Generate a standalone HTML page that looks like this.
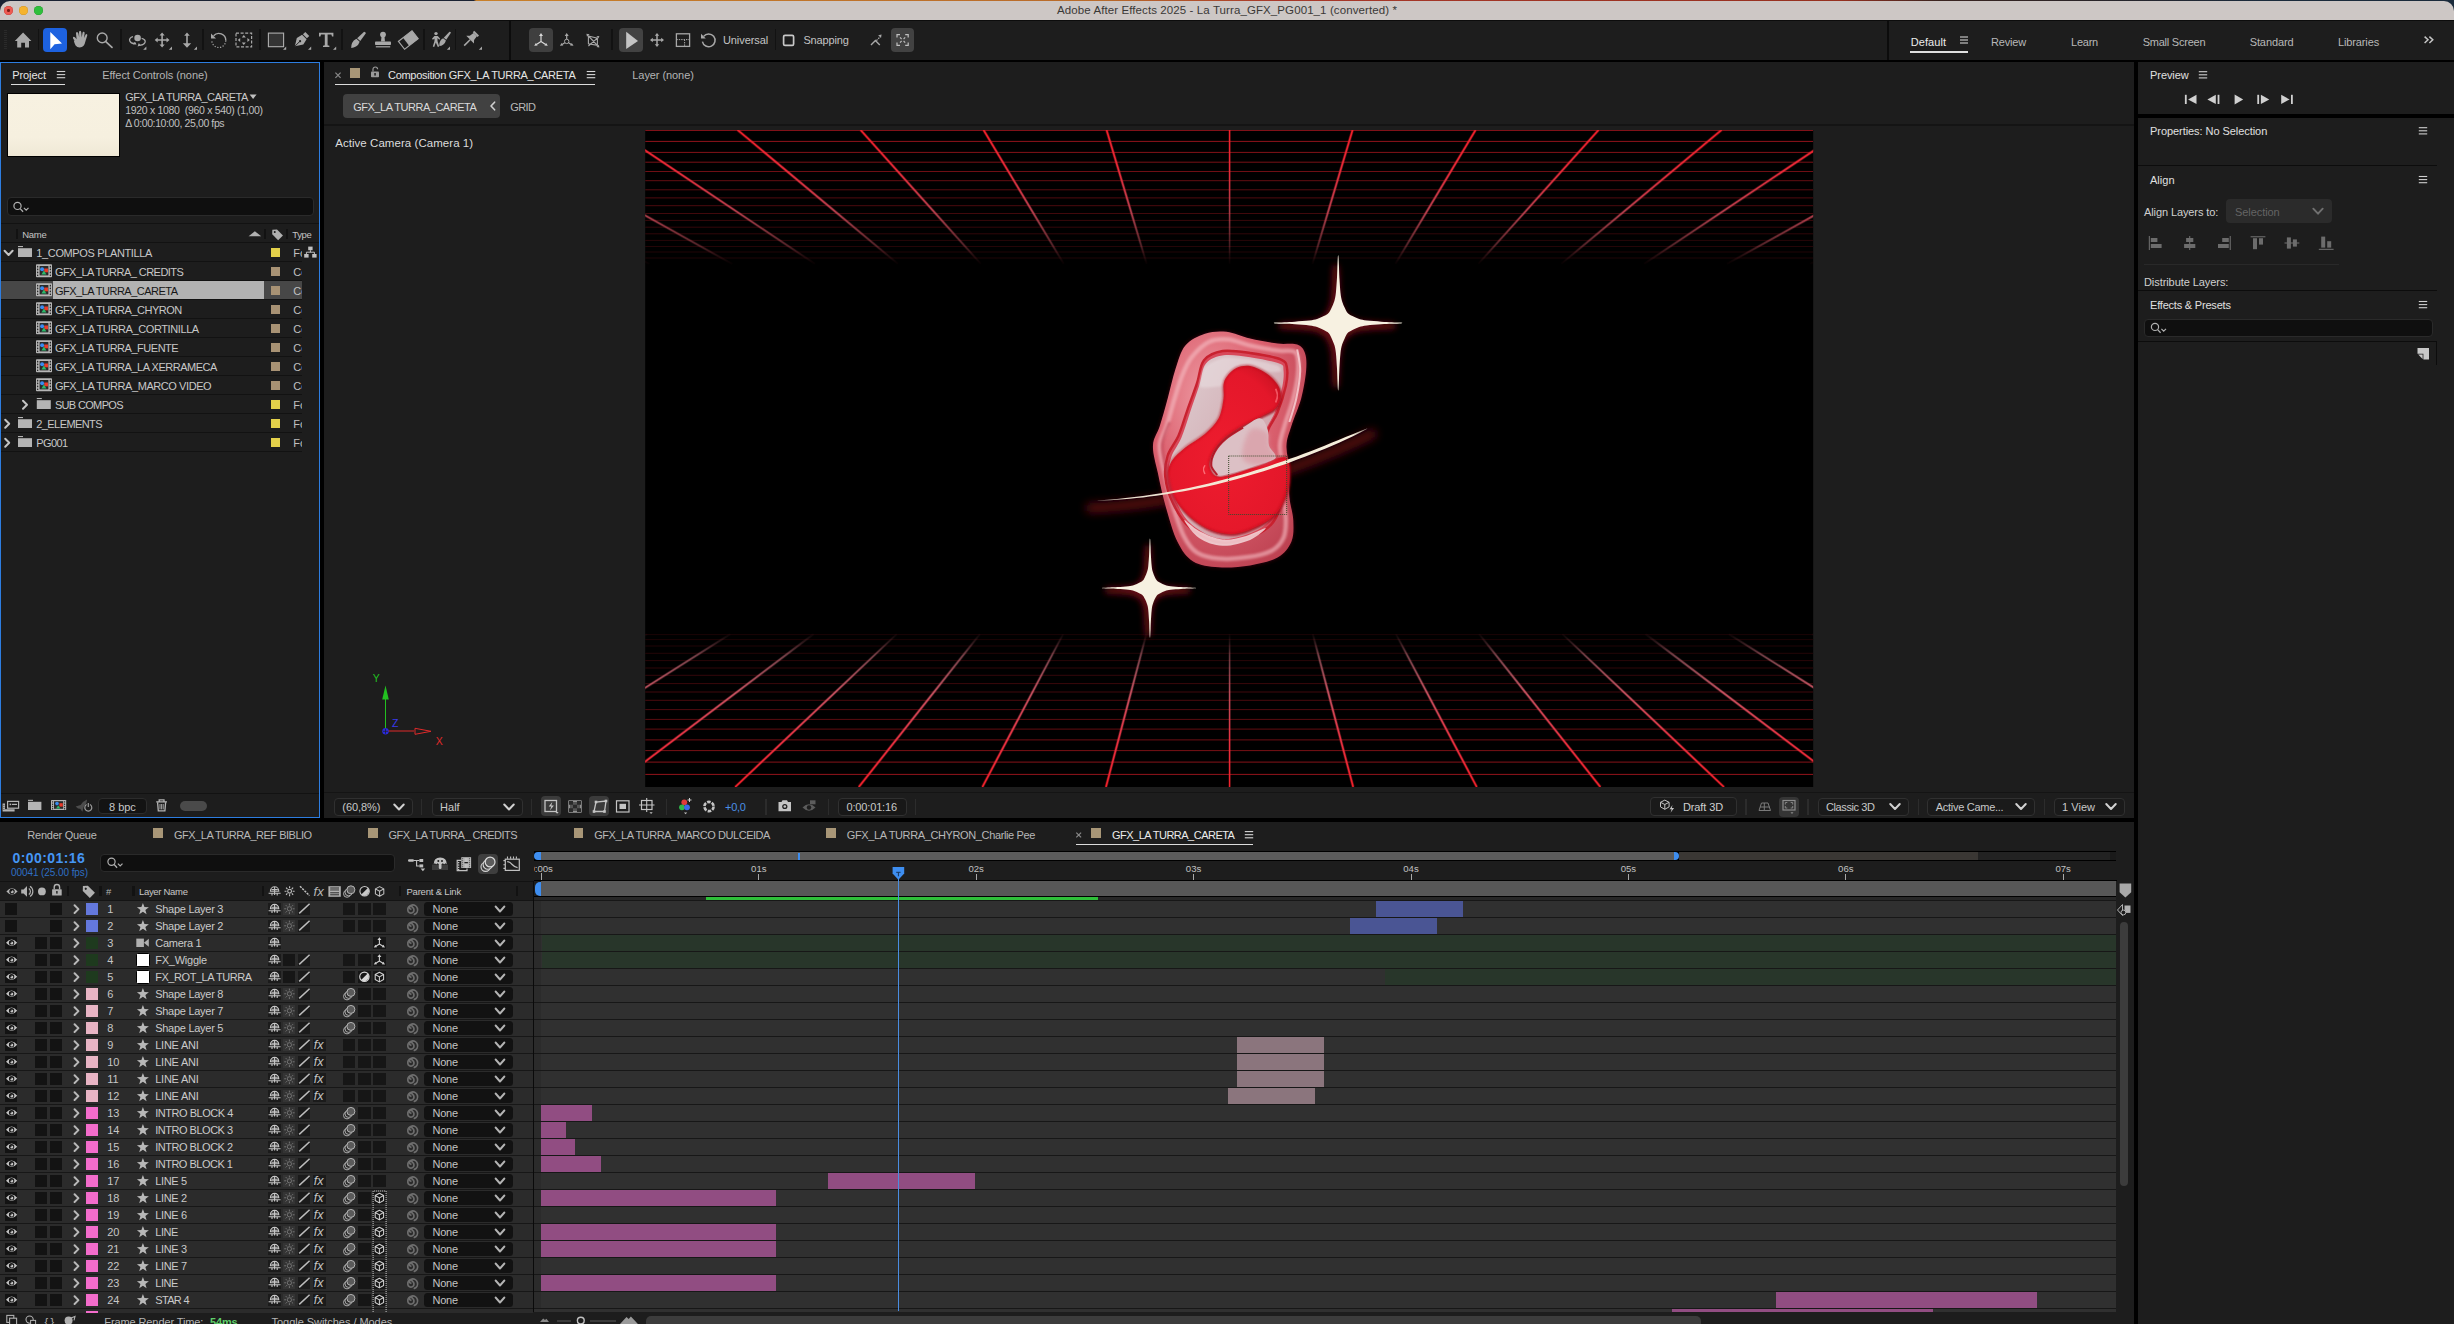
<!DOCTYPE html>
<html lang="en"><head><meta charset="utf-8"><title>Adobe After Effects 2025 - La Turra_GFX_PG001_1 (converted)</title>
<style>
html,body{margin:0;padding:0;background:#000;}
body{width:2454px;height:1324px;position:relative;overflow:hidden;font-family:"Liberation Sans",sans-serif;}
.t{position:absolute;white-space:nowrap;display:block;}
svg{overflow:visible;display:block;}
</style></head>
<body>
<!-- part_frame -->
<div style="position:absolute;left:0px;top:0px;width:2454px;height:12px;background:linear-gradient(90deg,#1a2233 0,#1a2233 19.3%,#c8802a 19.4%,#b86a2a 45%,#a8382a 52%,#96301f 75%,#3a2420 79%,#2a2428 85%,#1b2b3c 92%,#1b2b3c 100%);"></div>
<div style="position:absolute;left:0px;top:1px;width:2454px;height:20px;background:#cdc7c5;border-radius:10px 10px 0 0;"></div>
<div style="position:absolute;left:0px;top:20px;width:2454px;height:1px;background:#0c0c0c;"></div>
<div style="position:absolute;left:3.9000000000000004px;top:6.0px;width:9.2px;height:9.2px;background:#ee5a52;border-radius:50%;box-shadow:inset 0 0 0 0.5px #c8423c;"></div>
<div style="position:absolute;left:18.700000000000003px;top:6.0px;width:9.2px;height:9.2px;background:#f5b32e;border-radius:50%;box-shadow:inset 0 0 0 0.5px #d0962a;"></div>
<div style="position:absolute;left:33.699999999999996px;top:6.0px;width:9.2px;height:9.2px;background:#2fbf3c;border-radius:50%;box-shadow:inset 0 0 0 0.5px #279d30;"></div>
<div style="position:absolute;left:7.3px;top:9.4px;width:2.4px;height:2.4px;background:#7c1d16;border-radius:50%;"></div>
<span class="t" style="left:1057.00px;top:2.82px;font-size:11.5px;line-height:15px;color:#3a3836;letter-spacing:0.096px;">Adobe After Effects 2025 - La Turra_GFX_PG001_1 (converted) *</span>
<div style="position:absolute;left:0px;top:21px;width:2454px;height:39px;background:#1d1d1d;"></div>
<div style="position:absolute;left:0px;top:60px;width:2454px;height:2px;background:#000;"></div>
<div style="position:absolute;left:0px;top:62px;width:320px;height:756px;background:#1d1d1d;box-sizing:border-box;border:1px solid #2d7de0;"></div>
<div style="position:absolute;left:324px;top:62px;width:1810px;height:756px;background:#1d1d1d;"></div>
<div style="position:absolute;left:2138px;top:62px;width:316px;height:52px;background:#1d1d1d;"></div>
<div style="position:absolute;left:2138px;top:118px;width:316px;height:1206px;background:#1d1d1d;"></div>
<div style="position:absolute;left:0px;top:822px;width:2134px;height:502px;background:#1d1d1d;"></div>
<!-- part_toolbar -->
<div style="position:absolute;left:4px;top:30.4px;width:2.6px;height:1px;background:#2a2a2a;"></div>
<div style="position:absolute;left:4px;top:32.4px;width:2.6px;height:1px;background:#2a2a2a;"></div>
<div style="position:absolute;left:4px;top:34.4px;width:2.6px;height:1px;background:#2a2a2a;"></div>
<div style="position:absolute;left:4px;top:36.4px;width:2.6px;height:1px;background:#2a2a2a;"></div>
<div style="position:absolute;left:4px;top:38.4px;width:2.6px;height:1px;background:#2a2a2a;"></div>
<div style="position:absolute;left:4px;top:40.4px;width:2.6px;height:1px;background:#2a2a2a;"></div>
<div style="position:absolute;left:4px;top:42.4px;width:2.6px;height:1px;background:#2a2a2a;"></div>
<div style="position:absolute;left:4px;top:44.4px;width:2.6px;height:1px;background:#2a2a2a;"></div>
<div style="position:absolute;left:4px;top:46.4px;width:2.6px;height:1px;background:#2a2a2a;"></div>
<div style="position:absolute;left:4px;top:48.4px;width:2.6px;height:1px;background:#2a2a2a;"></div>
<div style="position:absolute;left:37.900000000000006px;top:29.4px;width:1.6px;height:20.6px;background:#121212;"></div>
<div style="position:absolute;left:120.0px;top:29.4px;width:1.6px;height:20.6px;background:#121212;"></div>
<div style="position:absolute;left:202.1px;top:29.4px;width:1.6px;height:20.6px;background:#121212;"></div>
<div style="position:absolute;left:259.0px;top:29.4px;width:1.6px;height:20.6px;background:#121212;"></div>
<div style="position:absolute;left:341.09999999999997px;top:29.4px;width:1.6px;height:20.6px;background:#121212;"></div>
<div style="position:absolute;left:423.2px;top:29.4px;width:1.6px;height:20.6px;background:#121212;"></div>
<div style="position:absolute;left:454.8px;top:29.4px;width:1.6px;height:20.6px;background:#121212;"></div>
<div style="position:absolute;left:611.2px;top:29.4px;width:1.6px;height:20.6px;background:#121212;"></div>
<div style="position:absolute;left:774.8000000000001px;top:29.4px;width:1.6px;height:20.6px;background:#121212;"></div>
<div style="position:absolute;left:43px;top:28px;width:24px;height:24px;background:#1d62e0;border-radius:4px;"></div>
<div style="position:absolute;left:508.6px;top:21px;width:2px;height:39px;background:#0c0c0c;"></div>
<div style="position:absolute;left:1887px;top:21px;width:1.6px;height:39px;background:#0c0c0c;"></div>
<div style="position:absolute;left:529px;top:28px;width:24px;height:24px;background:#3f3f3f;border-radius:4px;"></div>
<div style="position:absolute;left:619px;top:28px;width:24px;height:24px;background:#424242;border-radius:4px;"></div>
<span class="t" style="left:723.00px;top:33.19px;font-size:11px;line-height:14px;color:#c4c4c4;letter-spacing:-0.094px;">Universal</span>
<span class="t" style="left:803.40px;top:33.39px;font-size:11px;line-height:14px;color:#c4c4c4;letter-spacing:-0.136px;">Snapping</span>
<div style="position:absolute;left:891px;top:28px;width:23.4px;height:24px;background:#424242;border-radius:4px;"></div>
<span class="t" style="left:1910.80px;top:35.19px;font-size:11px;line-height:14px;color:#ececec;letter-spacing:0.049px;">Default</span>
<div style="position:absolute;left:1910px;top:51px;width:58px;height:1.5px;background:#e0e0e0;"></div>
<span class="t" style="left:1991.00px;top:35.19px;font-size:11px;line-height:14px;color:#b8b8b8;letter-spacing:-0.178px;">Review</span>
<span class="t" style="left:2071.00px;top:35.19px;font-size:11px;line-height:14px;color:#b8b8b8;letter-spacing:-0.227px;">Learn</span>
<span class="t" style="left:2142.70px;top:35.19px;font-size:11px;line-height:14px;color:#b8b8b8;letter-spacing:-0.235px;">Small Screen</span>
<span class="t" style="left:2249.70px;top:35.19px;font-size:11px;line-height:14px;color:#b8b8b8;letter-spacing:-0.106px;">Standard</span>
<span class="t" style="left:2338.00px;top:35.19px;font-size:11px;line-height:14px;color:#b8b8b8;letter-spacing:-0.132px;">Libraries</span>
<svg style="position:absolute;left:0;top:0" width="2454" height="1324"><path d="M14.8,41 l8.3,-8.4 l8.3,8.4 h-2.4 v6.4 h-4 v-4.6 h-3.8 v4.6 h-4 v-6.4z" fill="#a8a8a8"/><path d="M50.3,32 L62,43.4 L54.6,44.2 L50.3,49.2Z" fill="#fff"/><path d="M74.8,40.6 q-2.6,-2.6 -1.6,-3.6 q1,-0.8 3.4,2.2 l-0.6,-5.6 q-0.2,-1.6 1,-1.6 q1,0 1.4,1.6 l0.8,3.8 l-0.2,-5 q0,-1.6 1.1,-1.6 q1.1,0 1.2,1.6 l0.4,5 l0.8,-4.4 q0.3,-1.5 1.3,-1.3 q1,0.2 0.8,1.7 l-0.6,4.6 l1.4,-3 q0.6,-1.2 1.4,-0.8 q0.8,0.4 0.4,1.6 l-1.6,5 q-0.6,3 -2,5 q-1.4,1.6 -4,1.6 q-2.6,0 -4,-2 q-1.4,-2.4 -1.8,-4.8z" fill="#a8a8a8"/><circle cx="102.2" cy="37.9" r="4.9" fill="none" stroke="#a8a8a8" stroke-width="1.4"/><line x1="105.8" y1="41.6" x2="112" y2="47.4" stroke="#a8a8a8" stroke-width="1.7" stroke-linecap="round"/><circle cx="137.6" cy="38" r="3.3" fill="#a8a8a8"/><path d="M133,36.6 a4,2.8 0 1 0 3,6.6 M141.6,38.4 a4.6,3 0 0 1 -3,6.4" fill="none" stroke="#a8a8a8" stroke-width="1.3"/><path d="M136.6,44.6 h-4 l2,-2.6z M137.6,46.4 l1.2,-3.4 l2,2.6z" fill="#a8a8a8"/><path d="M146.4,49.8 v-3.2 l-3.2,3.2z" fill="#a8a8a8"/><path d="M162.1,35V45M157.1,40H167.1" stroke="#a8a8a8" stroke-width="1.6"/><path d="M162.1,32.6l-2.6,3h5.2z M162.1,47.4l-2.6,-3h5.2z M154.7,40l3,-2.6v5.2z M169.5,40l-3,-2.6v5.2z" fill="#a8a8a8"/><path d="M172,49.8 v-3.2 l-3.2,3.2z" fill="#a8a8a8"/><path d="M187,35V44" stroke="#a8a8a8" stroke-width="1.6"/><path d="M187,32.6l-2.8,3.2h5.6z M187,47.8l-4.2,-4.6h8.4z" fill="#a8a8a8"/><path d="M197,49.8 v-3.2 l-3.2,3.2z" fill="#a8a8a8"/><path d="M213.60000000000002,35.8 A7,7 0 0 1 225.8,40.6" fill="none" stroke="#a8a8a8" stroke-width="1.4"/><path d="M225.8,40.6 A7,7 0 1 1 211.8,40.4" fill="none" stroke="#a8a8a8" stroke-width="1.2" stroke-dasharray="1.2 1.6"/><path d="M211.0,33.6 v5 h5z" fill="#a8a8a8"/><rect x="236.0" y="33.2" width="15.6" height="13.6" fill="none" stroke="#a8a8a8" stroke-width="1.2" stroke-dasharray="3 1.6"/><path d="M243.8,35l-2,2.4h4z M243.8,45l-2,-2.4h4z M237.8,40l2.4,-2v4z M249.8,40l-2.4,-2v4z" fill="#a8a8a8"/><rect x="268.4" y="33.1" width="15.2" height="13.6" fill="#343434" stroke="#b0b0b0" stroke-width="1.1"/><path d="M286.2,49.8 v-3.2 l-3.2,3.2z" fill="#a8a8a8"/><g transform="translate(301.2,40) rotate(45)"><path d="M-2.8,-8.6 h5.6 v3.4 h-5.6z" fill="#a8a8a8"/><path d="M-3.2,-4.4 h6.4 l1.4,6 l-4.6,7.4 l-4.6,-7.4z" fill="#a8a8a8"/><path d="M0,9 v-6.5" stroke="#1d1d1d" stroke-width="0.9"/><circle cx="0" cy="1.6" r="1.1" fill="#1d1d1d"/></g><path d="M311.2,49.8 v-3.2 l-3.2,3.2z" fill="#a8a8a8"/><path d="M319,32.8 h14.4 v3.6 h-1.4 l-0.6,-1.8 h-3.8 v10.6 l1.8,0.5 v1.3 h-6.4 v-1.3 l1.8,-0.5 v-10.6 h-3.8 l-0.6,1.8 h-1.4z" fill="#a8a8a8"/><path d="M336.2,49.8 v-3.2 l-3.2,3.2z" fill="#a8a8a8"/><g transform="translate(358.3,40) rotate(42)"><path d="M-1.2,-10 q1.2,-1 2.4,0 l0.9,9.4 h-4.2z" fill="#a8a8a8"/><path d="M-2.2,0.4 h4.4 q1.4,3 0.4,6 q-0.8,2.4 -2.6,4.2 q-1.8,-1.8 -2.6,-4.2 q-1,-3 0.4,-6z" fill="#a8a8a8"/></g><circle cx="383" cy="34.6" r="2.9" fill="#a8a8a8"/><path d="M381.6,36 h2.8 l0.6,5.6 h-4z" fill="#a8a8a8"/><rect x="375" y="41.6" width="16" height="3.4" rx="0.8" fill="#a8a8a8"/><rect x="375.8" y="46.2" width="14.4" height="1.2" fill="#a8a8a8"/><g transform="translate(408.3,40) rotate(-38)"><rect x="-2.8" y="-5" width="11.4" height="10" fill="#a8a8a8"/><rect x="-8.6" y="-5" width="17.2" height="10" fill="none" stroke="#a8a8a8" stroke-width="1.2"/></g><circle cx="436" cy="33.6" r="1.7" fill="#a8a8a8"/><path d="M434.4,36 h3.4 l2.4,2.8 l-0.9,0.9 l-1.8,-1.6 v3 l1.7,5.5 l-1.4,0.5 l-2,-4.6 l-1.6,4.6 l-1.4,-0.5 l1.7,-5.6 v-2.6 l-1.6,1.4 l-0.9,-1 z" fill="#a8a8a8"/><g transform="translate(444.4,39.6) rotate(38)"><path d="M-0.9,-9.4 q0.9,-0.8 1.8,0 l0.7,8.4 h-3.2z" fill="#a8a8a8"/><path d="M-1.8,-0.2 h3.6 q1.2,2.6 0.3,5 q-0.7,2 -2.1,3.4 q-1.4,-1.4 -2.1,-3.4 q-0.9,-2.4 0.3,-5z" fill="#a8a8a8"/></g><path d="M450,49.8 v-3.2 l-3.2,3.2z" fill="#a8a8a8"/><g transform="translate(470.4,39.4) rotate(45)"><rect x="-3.4" y="-8.8" width="6.8" height="2" fill="#a8a8a8"/><path d="M-2.4,-6.8 h4.8 l0.6,4.6 l2.4,2.6 h-10.8 l2.4,-2.6z" fill="#a8a8a8"/><path d="M0,0.4 v8.4" stroke="#a8a8a8" stroke-width="1.5"/></g><path d="M482,49.8 v-3.2 l-3.2,3.2z" fill="#a8a8a8"/><path d="M541,41.4V35.6 M541,41.4L536.4,44.4 M541,41.4L545.6,44.4" stroke="#dadada" stroke-width="1.2" fill="none"/><path d="M541,33l-2,3h4z M534.2,45.8l3.4,-0.3l-1.7,-2.6z M547.8,45.8l-3.4,-0.3l1.7,-2.6z" fill="#dadada"/><path d="M566.7,41.4V35.6 M566.7,41.4L562.1,44.4 M566.7,41.4L571.3000000000001,44.4" stroke="#a8a8a8" stroke-width="1.2" fill="none"/><path d="M566.7,33l-2,3h4z M559.9000000000001,45.8l3.4,-0.3l-1.7,-2.6z M573.5,45.8l-3.4,-0.3l1.7,-2.6z" fill="#a8a8a8"/><circle cx="566.7" cy="41.4" r="2.2" fill="#1d1d1d" stroke="#a8a8a8" stroke-width="1"/><path d="M588.4,36 l9,2.2 v7.2 l-9,-1.6z M588.4,36 l9,9.4 M597.4,38.2 l-9,7.8" fill="none" stroke="#a8a8a8" stroke-width="1.1"/><path d="M586.4,33.8 l3.2,0.4 l-2.6,2.6z M599.4,36l-3,0.2l2,2.4z M599.4,47.6l-3,-0.6l2.4,-2.2z" fill="#a8a8a8"/><path d="M626.2,31.8 L638,41 L626.2,49Z" fill="#c4c4c4"/><path d="M657,35V45M652,40H662" stroke="#a8a8a8" stroke-width="1.5"/><path d="M657,33l-2.2,2.8h4.4z M657,47l-2.2,-2.8h4.4z M650,40l2.8,-2.2v4.4z M664,40l-2.8,-2.2v4.4z" fill="#a8a8a8"/><rect x="676.4" y="33.8" width="13.2" height="12.6" fill="none" stroke="#a8a8a8" stroke-width="1.3"/><path d="M676.4,39.6 h13.2 M684.6,39.6 v6.8" stroke="#a8a8a8" stroke-width="1" stroke-dasharray="1.4 1"/><path d="M703.6,36.4 A6.4,6.4 0 1 1 702.4,41.6" fill="none" stroke="#a8a8a8" stroke-width="1.5"/><path d="M701.0,33.8 v4.8 h4.8z" fill="#a8a8a8"/><rect x="783.6" y="35.3" width="10" height="10" rx="1.4" fill="none" stroke="#c8c8c8" stroke-width="1.7"/><path d="M871,45 l4.4,-4.4 l4.4,4.4" fill="none" stroke="#a8a8a8" stroke-width="1.4"/><path d="M876.4,40.6 l4,-4" stroke="#a8a8a8" stroke-width="1.2" stroke-dasharray="1.6 1"/><path d="M881.6,34.6 l-3.4,0.6 l2.8,2.8z" fill="#a8a8a8"/><path d="M897.0,37.6 v-3 h3 M905.2,34.6 h3 v3 M908.2,42.4 v3 h-3 M900.0,45.4 h-3 v-3" fill="none" stroke="#c0c0c0" stroke-width="1.2"/><path d="M900.0,37.4 l1.6,1.6 M905.2,37.4 l-1.6,1.6 M900.0,42.6 l1.6,-1.6 M905.2,42.6 l-1.6,-1.6" stroke="#c0c0c0" stroke-width="1.1"/><line x1="1960.0" x2="1968.0" y1="37" y2="37" stroke="#d0d0d0" stroke-width="1.1"/><line x1="1960.0" x2="1968.0" y1="40" y2="40" stroke="#d0d0d0" stroke-width="1.1"/><line x1="1960.0" x2="1968.0" y1="43" y2="43" stroke="#d0d0d0" stroke-width="1.1"/><path d="M2424.6,36.6 l3.4,3.2 l-3.4,3.2 M2429.4,36.6 l3.4,3.2 l-3.4,3.2" fill="none" stroke="#c4c4c4" stroke-width="1.5"/></svg>
<!-- part_project -->
<span class="t" style="left:12.20px;top:68.19px;font-size:11px;line-height:14px;color:#e6e6e6;letter-spacing:-0.062px;">Project</span>
<div style="position:absolute;left:11.2px;top:84px;width:54px;height:1.4px;background:#dcdcdc;"></div>
<span class="t" style="left:102.30px;top:68.19px;font-size:11px;line-height:14px;color:#b4b4b4;letter-spacing:-0.068px;">Effect Controls (none)</span>
<div style="position:absolute;left:6.5px;top:92.6px;width:113px;height:64px;background:linear-gradient(180deg,#f7f1e1 0,#f6f0df 70%,#efe8d6 100%);box-sizing:border-box;border:1px solid #000;"></div>
<span class="t" style="left:125.20px;top:90.09px;font-size:11px;line-height:14px;color:#c8c8c8;letter-spacing:-0.508px;">GFX_LA TURRA_CARETA</span>
<span class="t" style="left:125.20px;top:103.16px;font-size:10.5px;line-height:14px;color:#c0c0c0;letter-spacing:-0.310px;white-space:pre;">1920 x 1080  (960 x 540) (1,00)</span>
<span class="t" style="left:125.20px;top:116.06px;font-size:10.5px;line-height:14px;color:#c0c0c0;letter-spacing:-0.392px;">Δ 0:00:10:00, 25,00 fps</span>
<div style="position:absolute;left:6.5px;top:197.3px;width:307px;height:19px;background:#0f0f0f;box-sizing:border-box;border:1px solid #2a2a2a;border-radius:4px;"></div>
<div style="position:absolute;left:1px;top:223px;width:318px;height:1.2px;background:#121212;"></div>
<div style="position:absolute;left:15.5px;top:228.6px;width:2px;height:10px;background:#121212;"></div>
<span class="t" style="left:22.20px;top:228.71px;font-size:9.5px;line-height:12px;color:#c4c4c4;letter-spacing:-0.235px;">Name</span>
<div style="position:absolute;left:264.4px;top:228.6px;width:2px;height:10px;background:#121212;"></div>
<div style="position:absolute;left:285.5px;top:228.6px;width:2px;height:10px;background:#121212;"></div>
<span class="t" style="left:292.30px;top:228.71px;font-size:9.5px;line-height:12px;color:#c4c4c4;letter-spacing:-0.399px;">Type</span>
<div style="position:absolute;left:1px;top:242px;width:318px;height:1.2px;background:#121212;"></div>
<span class="t" style="left:36.30px;top:245.99px;font-size:11px;line-height:14px;color:#c8c8c8;letter-spacing:-0.365px;">1_COMPOS PLANTILLA</span>
<div style="position:absolute;left:271px;top:248px;width:9px;height:9px;background:#e3d04a;"></div>
<div style="position:absolute;left:293px;top:243px;width:9px;height:18px;overflow:hidden"><span class="t" style="left:0.20px;top:2.99px;font-size:11px;line-height:14px;color:#c0c0c0;">Fc</span></div>
<div style="position:absolute;left:1px;top:261px;width:301px;height:1.1px;background:#121212;"></div>
<span class="t" style="left:54.90px;top:264.99px;font-size:11px;line-height:14px;color:#c8c8c8;letter-spacing:-0.542px;">GFX_LA TURRA_ CREDITS</span>
<div style="position:absolute;left:271px;top:267px;width:9px;height:9px;background:#a89274;"></div>
<div style="position:absolute;left:293px;top:262px;width:9px;height:18px;overflow:hidden"><span class="t" style="left:0.20px;top:2.99px;font-size:11px;line-height:14px;color:#c0c0c0;">Cc</span></div>
<div style="position:absolute;left:1px;top:280px;width:301px;height:1.1px;background:#121212;"></div>
<div style="position:absolute;left:1px;top:281px;width:301px;height:18px;background:#474747;"></div>
<div style="position:absolute;left:52.8px;top:281px;width:211.2px;height:18px;background:#b2b2b2;"></div>
<span class="t" style="left:54.90px;top:283.99px;font-size:11px;line-height:14px;color:#161616;letter-spacing:-0.502px;">GFX_LA TURRA_CARETA</span>
<div style="position:absolute;left:271px;top:286px;width:9px;height:9px;background:#a89274;"></div>
<div style="position:absolute;left:293px;top:281px;width:9px;height:18px;overflow:hidden"><span class="t" style="left:0.20px;top:2.99px;font-size:11px;line-height:14px;color:#c0c0c0;">Cc</span></div>
<div style="position:absolute;left:1px;top:299px;width:301px;height:1.1px;background:#121212;"></div>
<span class="t" style="left:54.90px;top:302.99px;font-size:11px;line-height:14px;color:#c8c8c8;letter-spacing:-0.485px;">GFX_LA TURRA_CHYRON</span>
<div style="position:absolute;left:271px;top:305px;width:9px;height:9px;background:#a89274;"></div>
<div style="position:absolute;left:293px;top:300px;width:9px;height:18px;overflow:hidden"><span class="t" style="left:0.20px;top:2.99px;font-size:11px;line-height:14px;color:#c0c0c0;">Cc</span></div>
<div style="position:absolute;left:1px;top:318px;width:301px;height:1.1px;background:#121212;"></div>
<span class="t" style="left:54.90px;top:321.99px;font-size:11px;line-height:14px;color:#c8c8c8;letter-spacing:-0.397px;">GFX_LA TURRA_CORTINILLA</span>
<div style="position:absolute;left:271px;top:324px;width:9px;height:9px;background:#a89274;"></div>
<div style="position:absolute;left:293px;top:319px;width:9px;height:18px;overflow:hidden"><span class="t" style="left:0.20px;top:2.99px;font-size:11px;line-height:14px;color:#c0c0c0;">Cc</span></div>
<div style="position:absolute;left:1px;top:337px;width:301px;height:1.1px;background:#121212;"></div>
<span class="t" style="left:54.90px;top:340.99px;font-size:11px;line-height:14px;color:#c8c8c8;letter-spacing:-0.481px;">GFX_LA TURRA_FUENTE</span>
<div style="position:absolute;left:271px;top:343px;width:9px;height:9px;background:#a89274;"></div>
<div style="position:absolute;left:293px;top:338px;width:9px;height:18px;overflow:hidden"><span class="t" style="left:0.20px;top:2.99px;font-size:11px;line-height:14px;color:#c0c0c0;">Cc</span></div>
<div style="position:absolute;left:1px;top:356px;width:301px;height:1.1px;background:#121212;"></div>
<span class="t" style="left:54.90px;top:359.99px;font-size:11px;line-height:14px;color:#c8c8c8;letter-spacing:-0.481px;">GFX_LA TURRA_LA XERRAMECA</span>
<div style="position:absolute;left:271px;top:362px;width:9px;height:9px;background:#a89274;"></div>
<div style="position:absolute;left:293px;top:357px;width:9px;height:18px;overflow:hidden"><span class="t" style="left:0.20px;top:2.99px;font-size:11px;line-height:14px;color:#c0c0c0;">Cc</span></div>
<div style="position:absolute;left:1px;top:375px;width:301px;height:1.1px;background:#121212;"></div>
<span class="t" style="left:54.90px;top:378.99px;font-size:11px;line-height:14px;color:#c8c8c8;letter-spacing:-0.432px;">GFX_LA TURRA_MARCO VIDEO</span>
<div style="position:absolute;left:271px;top:381px;width:9px;height:9px;background:#a89274;"></div>
<div style="position:absolute;left:293px;top:376px;width:9px;height:18px;overflow:hidden"><span class="t" style="left:0.20px;top:2.99px;font-size:11px;line-height:14px;color:#c0c0c0;">Cc</span></div>
<div style="position:absolute;left:1px;top:394px;width:301px;height:1.1px;background:#121212;"></div>
<span class="t" style="left:54.90px;top:397.99px;font-size:11px;line-height:14px;color:#c8c8c8;letter-spacing:-0.657px;">SUB COMPOS</span>
<div style="position:absolute;left:271px;top:400px;width:9px;height:9px;background:#e3d04a;"></div>
<div style="position:absolute;left:293px;top:395px;width:9px;height:18px;overflow:hidden"><span class="t" style="left:0.20px;top:2.99px;font-size:11px;line-height:14px;color:#c0c0c0;">Fc</span></div>
<div style="position:absolute;left:1px;top:413px;width:301px;height:1.1px;background:#121212;"></div>
<span class="t" style="left:36.30px;top:416.99px;font-size:11px;line-height:14px;color:#c8c8c8;letter-spacing:-0.583px;">2_ELEMENTS</span>
<div style="position:absolute;left:271px;top:419px;width:9px;height:9px;background:#e3d04a;"></div>
<div style="position:absolute;left:293px;top:414px;width:9px;height:18px;overflow:hidden"><span class="t" style="left:0.20px;top:2.99px;font-size:11px;line-height:14px;color:#c0c0c0;">Fc</span></div>
<div style="position:absolute;left:1px;top:432px;width:301px;height:1.1px;background:#121212;"></div>
<span class="t" style="left:36.30px;top:435.99px;font-size:11px;line-height:14px;color:#c8c8c8;letter-spacing:-0.589px;">PG001</span>
<div style="position:absolute;left:271px;top:438px;width:9px;height:9px;background:#e3d04a;"></div>
<div style="position:absolute;left:293px;top:433px;width:9px;height:18px;overflow:hidden"><span class="t" style="left:0.20px;top:2.99px;font-size:11px;line-height:14px;color:#c0c0c0;">Fc</span></div>
<div style="position:absolute;left:1px;top:451px;width:301px;height:1.1px;background:#121212;"></div>
<div style="position:absolute;left:1px;top:793px;width:318px;height:1.2px;background:#121212;"></div>
<div style="position:absolute;left:97.8px;top:797.6px;width:49.4px;height:16.8px;background:#131313;box-sizing:border-box;border:1px solid #2c2c2c;border-radius:4px;"></div>
<span class="t" style="left:109.10px;top:799.59px;font-size:11px;line-height:14px;color:#c8c8c8;letter-spacing:-0.062px;">8 bpc</span>
<div style="position:absolute;left:179.7px;top:801px;width:27.4px;height:9.6px;background:#4a4a4a;border-radius:5px;"></div>
<svg style="position:absolute;left:0;top:0" width="2454" height="1324"><line x1="56.8" x2="65.2" y1="71.5" y2="71.5" stroke="#d0d0d0" stroke-width="1.1"/><line x1="56.8" x2="65.2" y1="74.6" y2="74.6" stroke="#d0d0d0" stroke-width="1.1"/><line x1="56.8" x2="65.2" y1="77.69999999999999" y2="77.69999999999999" stroke="#d0d0d0" stroke-width="1.1"/><path d="M249.6,94.4 h7 l-3.5,4.6z" fill="#c0c0c0"/><circle cx="17.5" cy="205.9" r="3.6" fill="none" stroke="#b0b0b0" stroke-width="1.2"/><line x1="20.1" y1="208.6" x2="23.1" y2="211.8" stroke="#b0b0b0" stroke-width="1.3"/><path d="M23.9,207.8 l2.3,2.3 l2.3,-2.3" fill="none" stroke="#b0b0b0" stroke-width="1.2"/><path d="M248.6,236.2 l6.3,-5 l6.3,5z" fill="#b0b0b0"/><g transform="translate(276.3,233.6) rotate(-45)"><path d="M-3.4,-2.4 l3.4,-3.2 l3.4,3.2 v8.4 h-6.8z" fill="#b0b0b0"/><circle cx="0" cy="-2.2" r="1" fill="#1d1d1d"/></g><path d="M4.6,250.8 L8.6,255.0 L12.6,250.8" fill="none" stroke="#c4c4c4" stroke-width="2.0" stroke-linecap="round" stroke-linejoin="round"/><rect x="18.0" y="248.2" width="14" height="8.8" fill="#b4b4b4"/><rect x="18.0" y="246" width="5" height="1.1" fill="#b4b4b4"/><rect x="36" y="264.2" width="16" height="13" rx="0.8" fill="#b6b6b6"/><rect x="39.6" y="266.0" width="8.8" height="9.4" fill="#2a2a2a"/><rect x="37" y="265.7" width="1.3" height="1.7" rx="0.5" fill="#2a2a2a"/><rect x="49.7" y="265.7" width="1.3" height="1.7" rx="0.5" fill="#2a2a2a"/><rect x="37" y="268.59999999999997" width="1.3" height="1.7" rx="0.5" fill="#2a2a2a"/><rect x="49.7" y="268.59999999999997" width="1.3" height="1.7" rx="0.5" fill="#2a2a2a"/><rect x="37" y="271.5" width="1.3" height="1.7" rx="0.5" fill="#2a2a2a"/><rect x="49.7" y="271.5" width="1.3" height="1.7" rx="0.5" fill="#2a2a2a"/><rect x="37" y="274.4" width="1.3" height="1.7" rx="0.5" fill="#2a2a2a"/><rect x="49.7" y="274.4" width="1.3" height="1.7" rx="0.5" fill="#2a2a2a"/><rect x="44.2" y="268.5" width="3.8" height="3.8" fill="#ea3a2a"/><circle cx="42.1" cy="269.2" r="2" fill="#3a8cf0"/><path d="M41.4,274.5 l2.5,-3.9 l2.5,3.9z" fill="#2ab86a"/><rect x="36" y="283.2" width="16" height="13" rx="0.8" fill="#b6b6b6"/><rect x="39.6" y="285.0" width="8.8" height="9.4" fill="#2a2a2a"/><rect x="37" y="284.7" width="1.3" height="1.7" rx="0.5" fill="#2a2a2a"/><rect x="49.7" y="284.7" width="1.3" height="1.7" rx="0.5" fill="#2a2a2a"/><rect x="37" y="287.59999999999997" width="1.3" height="1.7" rx="0.5" fill="#2a2a2a"/><rect x="49.7" y="287.59999999999997" width="1.3" height="1.7" rx="0.5" fill="#2a2a2a"/><rect x="37" y="290.5" width="1.3" height="1.7" rx="0.5" fill="#2a2a2a"/><rect x="49.7" y="290.5" width="1.3" height="1.7" rx="0.5" fill="#2a2a2a"/><rect x="37" y="293.4" width="1.3" height="1.7" rx="0.5" fill="#2a2a2a"/><rect x="49.7" y="293.4" width="1.3" height="1.7" rx="0.5" fill="#2a2a2a"/><rect x="44.2" y="287.5" width="3.8" height="3.8" fill="#ea3a2a"/><circle cx="42.1" cy="288.2" r="2" fill="#3a8cf0"/><path d="M41.4,293.5 l2.5,-3.9 l2.5,3.9z" fill="#2ab86a"/><rect x="36" y="302.2" width="16" height="13" rx="0.8" fill="#b6b6b6"/><rect x="39.6" y="304.0" width="8.8" height="9.4" fill="#2a2a2a"/><rect x="37" y="303.7" width="1.3" height="1.7" rx="0.5" fill="#2a2a2a"/><rect x="49.7" y="303.7" width="1.3" height="1.7" rx="0.5" fill="#2a2a2a"/><rect x="37" y="306.59999999999997" width="1.3" height="1.7" rx="0.5" fill="#2a2a2a"/><rect x="49.7" y="306.59999999999997" width="1.3" height="1.7" rx="0.5" fill="#2a2a2a"/><rect x="37" y="309.5" width="1.3" height="1.7" rx="0.5" fill="#2a2a2a"/><rect x="49.7" y="309.5" width="1.3" height="1.7" rx="0.5" fill="#2a2a2a"/><rect x="37" y="312.4" width="1.3" height="1.7" rx="0.5" fill="#2a2a2a"/><rect x="49.7" y="312.4" width="1.3" height="1.7" rx="0.5" fill="#2a2a2a"/><rect x="44.2" y="306.5" width="3.8" height="3.8" fill="#ea3a2a"/><circle cx="42.1" cy="307.2" r="2" fill="#3a8cf0"/><path d="M41.4,312.5 l2.5,-3.9 l2.5,3.9z" fill="#2ab86a"/><rect x="36" y="321.2" width="16" height="13" rx="0.8" fill="#b6b6b6"/><rect x="39.6" y="323.0" width="8.8" height="9.4" fill="#2a2a2a"/><rect x="37" y="322.7" width="1.3" height="1.7" rx="0.5" fill="#2a2a2a"/><rect x="49.7" y="322.7" width="1.3" height="1.7" rx="0.5" fill="#2a2a2a"/><rect x="37" y="325.59999999999997" width="1.3" height="1.7" rx="0.5" fill="#2a2a2a"/><rect x="49.7" y="325.59999999999997" width="1.3" height="1.7" rx="0.5" fill="#2a2a2a"/><rect x="37" y="328.5" width="1.3" height="1.7" rx="0.5" fill="#2a2a2a"/><rect x="49.7" y="328.5" width="1.3" height="1.7" rx="0.5" fill="#2a2a2a"/><rect x="37" y="331.4" width="1.3" height="1.7" rx="0.5" fill="#2a2a2a"/><rect x="49.7" y="331.4" width="1.3" height="1.7" rx="0.5" fill="#2a2a2a"/><rect x="44.2" y="325.5" width="3.8" height="3.8" fill="#ea3a2a"/><circle cx="42.1" cy="326.2" r="2" fill="#3a8cf0"/><path d="M41.4,331.5 l2.5,-3.9 l2.5,3.9z" fill="#2ab86a"/><rect x="36" y="340.2" width="16" height="13" rx="0.8" fill="#b6b6b6"/><rect x="39.6" y="342.0" width="8.8" height="9.4" fill="#2a2a2a"/><rect x="37" y="341.7" width="1.3" height="1.7" rx="0.5" fill="#2a2a2a"/><rect x="49.7" y="341.7" width="1.3" height="1.7" rx="0.5" fill="#2a2a2a"/><rect x="37" y="344.59999999999997" width="1.3" height="1.7" rx="0.5" fill="#2a2a2a"/><rect x="49.7" y="344.59999999999997" width="1.3" height="1.7" rx="0.5" fill="#2a2a2a"/><rect x="37" y="347.5" width="1.3" height="1.7" rx="0.5" fill="#2a2a2a"/><rect x="49.7" y="347.5" width="1.3" height="1.7" rx="0.5" fill="#2a2a2a"/><rect x="37" y="350.4" width="1.3" height="1.7" rx="0.5" fill="#2a2a2a"/><rect x="49.7" y="350.4" width="1.3" height="1.7" rx="0.5" fill="#2a2a2a"/><rect x="44.2" y="344.5" width="3.8" height="3.8" fill="#ea3a2a"/><circle cx="42.1" cy="345.2" r="2" fill="#3a8cf0"/><path d="M41.4,350.5 l2.5,-3.9 l2.5,3.9z" fill="#2ab86a"/><rect x="36" y="359.2" width="16" height="13" rx="0.8" fill="#b6b6b6"/><rect x="39.6" y="361.0" width="8.8" height="9.4" fill="#2a2a2a"/><rect x="37" y="360.7" width="1.3" height="1.7" rx="0.5" fill="#2a2a2a"/><rect x="49.7" y="360.7" width="1.3" height="1.7" rx="0.5" fill="#2a2a2a"/><rect x="37" y="363.59999999999997" width="1.3" height="1.7" rx="0.5" fill="#2a2a2a"/><rect x="49.7" y="363.59999999999997" width="1.3" height="1.7" rx="0.5" fill="#2a2a2a"/><rect x="37" y="366.5" width="1.3" height="1.7" rx="0.5" fill="#2a2a2a"/><rect x="49.7" y="366.5" width="1.3" height="1.7" rx="0.5" fill="#2a2a2a"/><rect x="37" y="369.4" width="1.3" height="1.7" rx="0.5" fill="#2a2a2a"/><rect x="49.7" y="369.4" width="1.3" height="1.7" rx="0.5" fill="#2a2a2a"/><rect x="44.2" y="363.5" width="3.8" height="3.8" fill="#ea3a2a"/><circle cx="42.1" cy="364.2" r="2" fill="#3a8cf0"/><path d="M41.4,369.5 l2.5,-3.9 l2.5,3.9z" fill="#2ab86a"/><rect x="36" y="378.2" width="16" height="13" rx="0.8" fill="#b6b6b6"/><rect x="39.6" y="380.0" width="8.8" height="9.4" fill="#2a2a2a"/><rect x="37" y="379.7" width="1.3" height="1.7" rx="0.5" fill="#2a2a2a"/><rect x="49.7" y="379.7" width="1.3" height="1.7" rx="0.5" fill="#2a2a2a"/><rect x="37" y="382.59999999999997" width="1.3" height="1.7" rx="0.5" fill="#2a2a2a"/><rect x="49.7" y="382.59999999999997" width="1.3" height="1.7" rx="0.5" fill="#2a2a2a"/><rect x="37" y="385.5" width="1.3" height="1.7" rx="0.5" fill="#2a2a2a"/><rect x="49.7" y="385.5" width="1.3" height="1.7" rx="0.5" fill="#2a2a2a"/><rect x="37" y="388.4" width="1.3" height="1.7" rx="0.5" fill="#2a2a2a"/><rect x="49.7" y="388.4" width="1.3" height="1.7" rx="0.5" fill="#2a2a2a"/><rect x="44.2" y="382.5" width="3.8" height="3.8" fill="#ea3a2a"/><circle cx="42.1" cy="383.2" r="2" fill="#3a8cf0"/><path d="M41.4,388.5 l2.5,-3.9 l2.5,3.9z" fill="#2ab86a"/><path d="M23.0,400.7 L27.0,404.7 L23.0,408.7" fill="none" stroke="#c4c4c4" stroke-width="2.0" stroke-linecap="round" stroke-linejoin="round"/><rect x="36.800000000000004" y="400.2" width="14" height="8.8" fill="#b4b4b4"/><rect x="36.800000000000004" y="398" width="5" height="1.1" fill="#b4b4b4"/><path d="M5.2,419.7 L9.2,423.7 L5.2,427.7" fill="none" stroke="#c4c4c4" stroke-width="2.0" stroke-linecap="round" stroke-linejoin="round"/><rect x="18.0" y="419.2" width="14" height="8.8" fill="#b4b4b4"/><rect x="18.0" y="417" width="5" height="1.1" fill="#b4b4b4"/><path d="M5.2,438.7 L9.2,442.7 L5.2,446.7" fill="none" stroke="#c4c4c4" stroke-width="2.0" stroke-linecap="round" stroke-linejoin="round"/><rect x="18.0" y="438.2" width="14" height="8.8" fill="#b4b4b4"/><rect x="18.0" y="436" width="5" height="1.1" fill="#b4b4b4"/><rect x="308.2" y="246.6" width="4.4" height="3.6" fill="#c0c0c0"/><rect x="304.2" y="254" width="4.4" height="3.6" fill="#c0c0c0"/><rect x="312.2" y="254" width="4.4" height="3.6" fill="#c0c0c0"/><path d="M310.4,250.2 v2 M306.4,254 v-1.8 h8 v1.8" fill="none" stroke="#c0c0c0" stroke-width="1"/><rect x="7.6" y="801.4" width="11" height="6.8" fill="none" stroke="#b4b4b4" stroke-width="1.2"/><rect x="9.6" y="803.6" width="1.6" height="1.6" fill="#b4b4b4"/><rect x="12" y="803.8" width="5" height="1.2" fill="#b4b4b4"/><path d="M2.6,803.6 h2.4 v5.6 h9.6 v2.4 h-12z" fill="#b4b4b4"/><path d="M3.4,805.4h1M3.4,807.4h1M3.4,809.4h1" stroke="#1d1d1d" stroke-width="0.8"/><rect x="28" y="801.8" width="13.4" height="8.2" fill="#b4b4b4"/><rect x="28" y="799.8" width="5" height="1.1" fill="#b4b4b4"/><rect x="51" y="800" width="15.2" height="10" rx="0.6" fill="#b4b4b4"/><rect x="54" y="801.2" width="9.2" height="7.6" fill="#2a2a2a"/><rect x="52" y="801.2" width="1.2" height="1.4" rx="0.4" fill="#2a2a2a"/><rect x="52" y="803.5" width="1.2" height="1.4" rx="0.4" fill="#2a2a2a"/><rect x="52" y="805.8" width="1.2" height="1.4" rx="0.4" fill="#2a2a2a"/><rect x="52" y="808" width="1.2" height="1.4" rx="0.4" fill="#2a2a2a"/><rect x="64" y="801.2" width="1.2" height="1.4" rx="0.4" fill="#2a2a2a"/><rect x="64" y="803.5" width="1.2" height="1.4" rx="0.4" fill="#2a2a2a"/><rect x="64" y="805.8" width="1.2" height="1.4" rx="0.4" fill="#2a2a2a"/><rect x="64" y="808" width="1.2" height="1.4" rx="0.4" fill="#2a2a2a"/><rect x="59.4" y="803.2" width="3.4" height="3.4" fill="#ea3a2a"/><circle cx="57" cy="803.6" r="1.8" fill="#3a8cf0"/><path d="M56,808.6 l2.2,-3.2 l2.2,3.2z" fill="#2ab86a"/><path d="M75.6,806.6 l5,-1.6 q3,-4 6.4,-5.4 q0.2,3.6 -3.4,7.4 l-1.2,4.8 l-2.2,-3 l-2.2,-0.2z" fill="#4c4c4c"/><path d="M86.6,804.6 a3.5,3.5 0 1 0 3.4,0" fill="none" stroke="#9c9c9c" stroke-width="1.2"/><path d="M88.3,803 v4" stroke="#9c9c9c" stroke-width="1.2"/><path d="M156.2,801.8 h10.8 M159.2,801.6 v-1.8 h4.8 v1.8 M157.6,802.6 l0.7,8.2 h6.6 l0.7,-8.2" fill="none" stroke="#b4b4b4" stroke-width="1.3"/><path d="M160,804v5.4M161.6,804v5.4M163.2,804v5.4" stroke="#b4b4b4" stroke-width="0.9"/></svg>
<!-- part_comp -->
<svg style="position:absolute;left:311.81765504858765px;top:130px" width="1168" height="657" viewBox="311.81765504858765 130 1168 657"><defs><linearGradient id="gc" gradientUnits="userSpaceOnUse" x1="0" y1="130" x2="0" y2="266"><stop offset="0" stop-color="#f0202a"/><stop offset="0.3" stop-color="#e62a38"/><stop offset="0.6" stop-color="#d04858" stop-opacity="0.8"/><stop offset="0.85" stop-color="#a84852" stop-opacity="0.4"/><stop offset="1" stop-color="#601820" stop-opacity="0"/></linearGradient><linearGradient id="gf" gradientUnits="userSpaceOnUse" x1="0" y1="787" x2="0" y2="632"><stop offset="0" stop-color="#f0202a"/><stop offset="0.3" stop-color="#e83040"/><stop offset="0.6" stop-color="#d85868" stop-opacity="0.85"/><stop offset="0.85" stop-color="#c06a76" stop-opacity="0.5"/><stop offset="1" stop-color="#804048" stop-opacity="0"/></linearGradient><clipPath id="cc"><rect x="645" y="130" width="1168" height="657"/></clipPath><filter id="b1" x="-20%" y="-20%" width="140%" height="140%"><feGaussianBlur stdDeviation="0.6"/></filter><filter id="b3" x="-50%" y="-50%" width="200%" height="200%"><feGaussianBlur stdDeviation="5"/></filter><filter id="b25" x="-50%" y="-50%" width="200%" height="200%"><feGaussianBlur stdDeviation="3.2"/></filter><filter id="b2" x="-50%" y="-50%" width="200%" height="200%"><feGaussianBlur stdDeviation="2.2"/></filter><filter id="b15" x="-50%" y="-50%" width="200%" height="200%"><feGaussianBlur stdDeviation="1.2"/></filter><radialGradient id="lipg" cx="0.38" cy="0.3" r="0.85"><stop offset="0" stop-color="#f0a0a8"/><stop offset="0.45" stop-color="#dc6270"/><stop offset="1" stop-color="#b83c4c"/></radialGradient><linearGradient id="teeth" x1="0" y1="0" x2="1" y2="1"><stop offset="0" stop-color="#dfd0d3"/><stop offset="0.5" stop-color="#d4b2b8"/><stop offset="1" stop-color="#cf8a94"/></linearGradient><radialGradient id="tong" cx="0.45" cy="0.55" r="0.7"><stop offset="0" stop-color="#ee1c2e"/><stop offset="0.75" stop-color="#e4172a"/><stop offset="1" stop-color="#c0101f"/></radialGradient><linearGradient id="sw" gradientUnits="userSpaceOnUse" x1="1097" y1="0" x2="1368" y2="0"><stop offset="0" stop-color="#f4ecd8" stop-opacity="0.5"/><stop offset="0.1" stop-color="#f4ecd8" stop-opacity="0.95"/><stop offset="0.94" stop-color="#f6efdc"/><stop offset="1" stop-color="#f6efdc" stop-opacity="0.5"/></linearGradient></defs><rect x="645" y="130" width="1168" height="657" fill="#000"/><g clip-path="url(#cc)"><line x1="645" x2="1813" y1="130.3" y2="130.3" stroke="#d81e28" stroke-opacity="0.74" stroke-width="1"/><line x1="645" x2="1813" y1="141.4" y2="141.4" stroke="#d81e28" stroke-opacity="0.67" stroke-width="1"/><line x1="645" x2="1813" y1="152.4" y2="152.4" stroke="#d81e28" stroke-opacity="0.61" stroke-width="1"/><line x1="645" x2="1813" y1="162.2" y2="162.2" stroke="#d81e28" stroke-opacity="0.56" stroke-width="1"/><line x1="645" x2="1813" y1="171.5" y2="171.5" stroke="#d81e28" stroke-opacity="0.51" stroke-width="1"/><line x1="645" x2="1813" y1="180.7" y2="180.7" stroke="#d81e28" stroke-opacity="0.46" stroke-width="1"/><line x1="645" x2="1813" y1="189.8" y2="189.8" stroke="#d81e28" stroke-opacity="0.41" stroke-width="1"/><line x1="645" x2="1813" y1="197.9" y2="197.9" stroke="#d81e28" stroke-opacity="0.37" stroke-width="1"/><line x1="645" x2="1813" y1="205.7" y2="205.7" stroke="#d81e28" stroke-opacity="0.34" stroke-width="1"/><line x1="645" x2="1813" y1="213.5" y2="213.5" stroke="#d81e28" stroke-opacity="0.30" stroke-width="1"/><line x1="645" x2="1813" y1="220.4" y2="220.4" stroke="#d81e28" stroke-opacity="0.27" stroke-width="1"/><line x1="645" x2="1813" y1="227.2" y2="227.2" stroke="#d81e28" stroke-opacity="0.24" stroke-width="1"/><line x1="645" x2="1813" y1="233.8" y2="233.8" stroke="#d81e28" stroke-opacity="0.22" stroke-width="1"/><line x1="645" x2="1813" y1="240.4" y2="240.4" stroke="#d81e28" stroke-opacity="0.19" stroke-width="1"/><line x1="645" x2="1813" y1="246.5" y2="246.5" stroke="#d81e28" stroke-opacity="0.17" stroke-width="1"/><line x1="645" x2="1813" y1="252.0" y2="252.0" stroke="#d81e28" stroke-opacity="0.15" stroke-width="1"/><line x1="645" x2="1813" y1="258.0" y2="258.0" stroke="#d81e28" stroke-opacity="0.14" stroke-width="1"/><line x1="645" x2="1813" y1="774.4" y2="774.4" stroke="#d81e28" stroke-opacity="0.68" stroke-width="1"/><line x1="645" x2="1813" y1="762.1" y2="762.1" stroke="#d81e28" stroke-opacity="0.62" stroke-width="1"/><line x1="645" x2="1813" y1="750.6" y2="750.6" stroke="#d81e28" stroke-opacity="0.56" stroke-width="1"/><line x1="645" x2="1813" y1="739.9" y2="739.9" stroke="#d81e28" stroke-opacity="0.51" stroke-width="1"/><line x1="645" x2="1813" y1="729.1" y2="729.1" stroke="#d81e28" stroke-opacity="0.46" stroke-width="1"/><line x1="645" x2="1813" y1="719.4" y2="719.4" stroke="#d81e28" stroke-opacity="0.42" stroke-width="1"/><line x1="645" x2="1813" y1="709.6" y2="709.6" stroke="#d81e28" stroke-opacity="0.37" stroke-width="1"/><line x1="645" x2="1813" y1="700.3" y2="700.3" stroke="#d81e28" stroke-opacity="0.34" stroke-width="1"/><line x1="645" x2="1813" y1="692.0" y2="692.0" stroke="#d81e28" stroke-opacity="0.30" stroke-width="1"/><line x1="645" x2="1813" y1="683.6" y2="683.6" stroke="#d81e28" stroke-opacity="0.27" stroke-width="1"/><line x1="645" x2="1813" y1="675.3" y2="675.3" stroke="#d81e28" stroke-opacity="0.24" stroke-width="1"/><line x1="645" x2="1813" y1="668.0" y2="668.0" stroke="#d81e28" stroke-opacity="0.21" stroke-width="1"/><line x1="645" x2="1813" y1="660.6" y2="660.6" stroke="#d81e28" stroke-opacity="0.19" stroke-width="1"/><line x1="645" x2="1813" y1="653.3" y2="653.3" stroke="#d81e28" stroke-opacity="0.17" stroke-width="1"/><line x1="645" x2="1813" y1="646.0" y2="646.0" stroke="#d81e28" stroke-opacity="0.15" stroke-width="1"/><line x1="645" x2="1813" y1="639.6" y2="639.6" stroke="#d81e28" stroke-opacity="0.13" stroke-width="1"/><line x1="645" x2="1813" y1="634.6" y2="634.6" stroke="#d81e28" stroke-opacity="0.12" stroke-width="1"/><line x1="122.4" y1="130" x2="483.3" y2="264" stroke="url(#gc)" stroke-width="3" opacity="0.35" filter="url(#b1)"/><line x1="122.4" y1="130" x2="483.3" y2="264" stroke="url(#gc)" stroke-width="1.6"/><line x1="117.0" y1="787" x2="480.6" y2="634" stroke="url(#gf)" stroke-width="3" opacity="0.35" filter="url(#b1)"/><line x1="117.0" y1="787" x2="480.6" y2="634" stroke="url(#gf)" stroke-width="1.6"/><line x1="245.4" y1="130" x2="566.2" y2="264" stroke="url(#gc)" stroke-width="3" opacity="0.35" filter="url(#b1)"/><line x1="245.4" y1="130" x2="566.2" y2="264" stroke="url(#gc)" stroke-width="1.6"/><line x1="240.6" y1="787" x2="563.8" y2="634" stroke="url(#gf)" stroke-width="3" opacity="0.35" filter="url(#b1)"/><line x1="240.6" y1="787" x2="563.8" y2="634" stroke="url(#gf)" stroke-width="1.6"/><line x1="368.4" y1="130" x2="649.1" y2="264" stroke="url(#gc)" stroke-width="3" opacity="0.35" filter="url(#b1)"/><line x1="368.4" y1="130" x2="649.1" y2="264" stroke="url(#gc)" stroke-width="1.6"/><line x1="364.2" y1="787" x2="647.0" y2="634" stroke="url(#gf)" stroke-width="3" opacity="0.35" filter="url(#b1)"/><line x1="364.2" y1="787" x2="647.0" y2="634" stroke="url(#gf)" stroke-width="1.6"/><line x1="491.4" y1="130" x2="732.0" y2="264" stroke="url(#gc)" stroke-width="3" opacity="0.35" filter="url(#b1)"/><line x1="491.4" y1="130" x2="732.0" y2="264" stroke="url(#gc)" stroke-width="1.6"/><line x1="487.8" y1="787" x2="730.2" y2="634" stroke="url(#gf)" stroke-width="3" opacity="0.35" filter="url(#b1)"/><line x1="487.8" y1="787" x2="730.2" y2="634" stroke="url(#gf)" stroke-width="1.6"/><line x1="614.4" y1="130" x2="814.9" y2="264" stroke="url(#gc)" stroke-width="3" opacity="0.35" filter="url(#b1)"/><line x1="614.4" y1="130" x2="814.9" y2="264" stroke="url(#gc)" stroke-width="1.6"/><line x1="611.4" y1="787" x2="813.4" y2="634" stroke="url(#gf)" stroke-width="3" opacity="0.35" filter="url(#b1)"/><line x1="611.4" y1="787" x2="813.4" y2="634" stroke="url(#gf)" stroke-width="1.6"/><line x1="737.4" y1="130" x2="897.8" y2="264" stroke="url(#gc)" stroke-width="3" opacity="0.35" filter="url(#b1)"/><line x1="737.4" y1="130" x2="897.8" y2="264" stroke="url(#gc)" stroke-width="1.6"/><line x1="735.0" y1="787" x2="896.6" y2="634" stroke="url(#gf)" stroke-width="3" opacity="0.35" filter="url(#b1)"/><line x1="735.0" y1="787" x2="896.6" y2="634" stroke="url(#gf)" stroke-width="1.6"/><line x1="860.4" y1="130" x2="980.7" y2="264" stroke="url(#gc)" stroke-width="3" opacity="0.35" filter="url(#b1)"/><line x1="860.4" y1="130" x2="980.7" y2="264" stroke="url(#gc)" stroke-width="1.6"/><line x1="858.6" y1="787" x2="979.8" y2="634" stroke="url(#gf)" stroke-width="3" opacity="0.35" filter="url(#b1)"/><line x1="858.6" y1="787" x2="979.8" y2="634" stroke="url(#gf)" stroke-width="1.6"/><line x1="983.4" y1="130" x2="1063.6" y2="264" stroke="url(#gc)" stroke-width="3" opacity="0.35" filter="url(#b1)"/><line x1="983.4" y1="130" x2="1063.6" y2="264" stroke="url(#gc)" stroke-width="1.6"/><line x1="982.2" y1="787" x2="1063.0" y2="634" stroke="url(#gf)" stroke-width="3" opacity="0.35" filter="url(#b1)"/><line x1="982.2" y1="787" x2="1063.0" y2="634" stroke="url(#gf)" stroke-width="1.6"/><line x1="1106.4" y1="130" x2="1146.5" y2="264" stroke="url(#gc)" stroke-width="3" opacity="0.35" filter="url(#b1)"/><line x1="1106.4" y1="130" x2="1146.5" y2="264" stroke="url(#gc)" stroke-width="1.6"/><line x1="1105.8" y1="787" x2="1146.2" y2="634" stroke="url(#gf)" stroke-width="3" opacity="0.35" filter="url(#b1)"/><line x1="1105.8" y1="787" x2="1146.2" y2="634" stroke="url(#gf)" stroke-width="1.6"/><line x1="1229.4" y1="130" x2="1229.4" y2="264" stroke="url(#gc)" stroke-width="3" opacity="0.35" filter="url(#b1)"/><line x1="1229.4" y1="130" x2="1229.4" y2="264" stroke="url(#gc)" stroke-width="1.6"/><line x1="1229.4" y1="787" x2="1229.4" y2="634" stroke="url(#gf)" stroke-width="3" opacity="0.35" filter="url(#b1)"/><line x1="1229.4" y1="787" x2="1229.4" y2="634" stroke="url(#gf)" stroke-width="1.6"/><line x1="1352.4" y1="130" x2="1312.3" y2="264" stroke="url(#gc)" stroke-width="3" opacity="0.35" filter="url(#b1)"/><line x1="1352.4" y1="130" x2="1312.3" y2="264" stroke="url(#gc)" stroke-width="1.6"/><line x1="1353.0" y1="787" x2="1312.6" y2="634" stroke="url(#gf)" stroke-width="3" opacity="0.35" filter="url(#b1)"/><line x1="1353.0" y1="787" x2="1312.6" y2="634" stroke="url(#gf)" stroke-width="1.6"/><line x1="1475.4" y1="130" x2="1395.2" y2="264" stroke="url(#gc)" stroke-width="3" opacity="0.35" filter="url(#b1)"/><line x1="1475.4" y1="130" x2="1395.2" y2="264" stroke="url(#gc)" stroke-width="1.6"/><line x1="1476.6" y1="787" x2="1395.8" y2="634" stroke="url(#gf)" stroke-width="3" opacity="0.35" filter="url(#b1)"/><line x1="1476.6" y1="787" x2="1395.8" y2="634" stroke="url(#gf)" stroke-width="1.6"/><line x1="1598.4" y1="130" x2="1478.1" y2="264" stroke="url(#gc)" stroke-width="3" opacity="0.35" filter="url(#b1)"/><line x1="1598.4" y1="130" x2="1478.1" y2="264" stroke="url(#gc)" stroke-width="1.6"/><line x1="1600.2" y1="787" x2="1479.0" y2="634" stroke="url(#gf)" stroke-width="3" opacity="0.35" filter="url(#b1)"/><line x1="1600.2" y1="787" x2="1479.0" y2="634" stroke="url(#gf)" stroke-width="1.6"/><line x1="1721.4" y1="130" x2="1561.0" y2="264" stroke="url(#gc)" stroke-width="3" opacity="0.35" filter="url(#b1)"/><line x1="1721.4" y1="130" x2="1561.0" y2="264" stroke="url(#gc)" stroke-width="1.6"/><line x1="1723.8" y1="787" x2="1562.2" y2="634" stroke="url(#gf)" stroke-width="3" opacity="0.35" filter="url(#b1)"/><line x1="1723.8" y1="787" x2="1562.2" y2="634" stroke="url(#gf)" stroke-width="1.6"/><line x1="1844.4" y1="130" x2="1643.9" y2="264" stroke="url(#gc)" stroke-width="3" opacity="0.35" filter="url(#b1)"/><line x1="1844.4" y1="130" x2="1643.9" y2="264" stroke="url(#gc)" stroke-width="1.6"/><line x1="1847.4" y1="787" x2="1645.4" y2="634" stroke="url(#gf)" stroke-width="3" opacity="0.35" filter="url(#b1)"/><line x1="1847.4" y1="787" x2="1645.4" y2="634" stroke="url(#gf)" stroke-width="1.6"/><line x1="1967.4" y1="130" x2="1726.8" y2="264" stroke="url(#gc)" stroke-width="3" opacity="0.35" filter="url(#b1)"/><line x1="1967.4" y1="130" x2="1726.8" y2="264" stroke="url(#gc)" stroke-width="1.6"/><line x1="1971.0" y1="787" x2="1728.6" y2="634" stroke="url(#gf)" stroke-width="3" opacity="0.35" filter="url(#b1)"/><line x1="1971.0" y1="787" x2="1728.6" y2="634" stroke="url(#gf)" stroke-width="1.6"/><line x1="2090.4" y1="130" x2="1809.7" y2="264" stroke="url(#gc)" stroke-width="3" opacity="0.35" filter="url(#b1)"/><line x1="2090.4" y1="130" x2="1809.7" y2="264" stroke="url(#gc)" stroke-width="1.6"/><line x1="2094.6" y1="787" x2="1811.8" y2="634" stroke="url(#gf)" stroke-width="3" opacity="0.35" filter="url(#b1)"/><line x1="2094.6" y1="787" x2="1811.8" y2="634" stroke="url(#gf)" stroke-width="1.6"/><line x1="2213.4" y1="130" x2="1892.6" y2="264" stroke="url(#gc)" stroke-width="3" opacity="0.35" filter="url(#b1)"/><line x1="2213.4" y1="130" x2="1892.6" y2="264" stroke="url(#gc)" stroke-width="1.6"/><line x1="2218.2" y1="787" x2="1895.0" y2="634" stroke="url(#gf)" stroke-width="3" opacity="0.35" filter="url(#b1)"/><line x1="2218.2" y1="787" x2="1895.0" y2="634" stroke="url(#gf)" stroke-width="1.6"/><line x1="2336.4" y1="130" x2="1975.5" y2="264" stroke="url(#gc)" stroke-width="3" opacity="0.35" filter="url(#b1)"/><line x1="2336.4" y1="130" x2="1975.5" y2="264" stroke="url(#gc)" stroke-width="1.6"/><line x1="2341.8" y1="787" x2="1978.2" y2="634" stroke="url(#gf)" stroke-width="3" opacity="0.35" filter="url(#b1)"/><line x1="2341.8" y1="787" x2="1978.2" y2="634" stroke="url(#gf)" stroke-width="1.6"/></g><g filter="url(#b25)" fill="#6a1019" stroke="#6a1019" stroke-width="5.5" stroke-linejoin="round" opacity="0.95"><path d="M1335.9,268.0C1336.1,269.5 1336.2,273.7 1336.4,276.8C1336.5,279.9 1336.6,282.6 1336.9,286.5C1337.1,290.3 1337.5,296.3 1338.0,299.6C1338.4,303.0 1338.8,304.5 1339.5,306.7C1340.3,308.9 1341.5,311.1 1342.5,312.8C1343.5,314.6 1344.4,316.2 1345.4,317.2C1346.4,318.2 1346.9,318.1 1348.4,318.9C1349.9,319.7 1352.3,321.2 1354.4,322.0C1356.5,322.7 1358.0,323.1 1361.2,323.6C1364.5,324.0 1370.4,324.4 1374.1,324.7C1377.8,325.0 1380.5,325.0 1383.5,325.2C1386.4,325.4 1390.6,325.5 1392.0,325.6C1393.4,325.8 1393.4,326.2 1392.0,326.4C1390.6,326.5 1386.4,326.6 1383.5,326.8C1380.5,327.0 1377.8,327.0 1374.1,327.3C1370.4,327.6 1364.5,328.0 1361.2,328.4C1358.0,328.9 1356.5,329.3 1354.4,330.0C1352.3,330.8 1350.1,332.1 1348.4,333.1C1346.7,334.1 1345.1,335.1 1344.1,336.1C1343.2,337.1 1343.2,337.6 1342.5,339.2C1341.7,340.7 1340.3,343.1 1339.5,345.3C1338.8,347.5 1338.4,349.0 1338.0,352.4C1337.5,355.7 1337.1,361.7 1336.9,365.5C1336.6,369.4 1336.5,372.1 1336.4,375.2C1336.2,378.3 1336.1,382.5 1335.9,384.0C1335.8,385.5 1335.5,385.5 1335.3,384.0C1335.1,382.5 1335.0,378.3 1334.9,375.2C1334.7,372.1 1334.6,369.4 1334.4,365.5C1334.1,361.7 1333.8,355.7 1333.4,352.4C1332.9,349.0 1332.6,347.5 1331.9,345.3C1331.1,343.1 1330.0,340.9 1329.1,339.2C1328.1,337.4 1327.2,335.8 1326.3,334.8C1325.3,333.8 1324.8,333.9 1323.4,333.1C1322.0,332.3 1319.8,330.8 1317.7,330.0C1315.7,329.3 1314.3,328.9 1311.2,328.4C1308.1,328.0 1302.6,327.6 1299.1,327.3C1295.5,327.0 1293.0,327.0 1290.1,326.8C1287.3,326.6 1283.4,326.5 1282.0,326.4C1280.6,326.2 1280.6,325.8 1282.0,325.6C1283.4,325.5 1287.3,325.4 1290.1,325.2C1293.0,325.0 1295.5,325.0 1299.1,324.7C1302.6,324.4 1308.1,324.0 1311.2,323.6C1314.3,323.1 1315.7,322.7 1317.7,322.0C1319.8,321.2 1321.8,319.9 1323.4,318.9C1325.0,317.9 1326.5,316.9 1327.5,315.9C1328.4,314.9 1328.3,314.4 1329.1,312.8C1329.8,311.3 1331.1,308.9 1331.9,306.7C1332.6,304.5 1332.9,303.0 1333.4,299.6C1333.8,296.3 1334.1,290.3 1334.4,286.5C1334.6,282.6 1334.7,279.9 1334.9,276.8C1335.0,273.7 1335.1,269.5 1335.3,268.0C1335.5,266.5 1335.8,266.5 1335.9,268.0Z"/><path d="M1148.0,548.0C1148.2,549.1 1148.2,552.2 1148.3,554.5C1148.5,556.7 1148.5,558.8 1148.7,561.6C1148.9,564.4 1149.1,568.8 1149.4,571.2C1149.7,573.7 1150.0,574.8 1150.5,576.4C1151.1,578.0 1151.9,579.6 1152.6,580.9C1153.3,582.2 1153.9,583.4 1154.6,584.1C1155.3,584.9 1155.7,584.8 1156.7,585.4C1157.7,586.0 1159.4,587.1 1160.9,587.6C1162.4,588.2 1163.3,588.5 1165.6,588.8C1167.9,589.2 1172.0,589.4 1174.5,589.6C1177.1,589.8 1179.0,589.9 1181.1,590.0C1183.1,590.1 1186.0,590.2 1187.0,590.3C1188.0,590.5 1188.0,590.7 1187.0,590.9C1186.0,591.0 1183.1,591.1 1181.1,591.2C1179.0,591.3 1177.1,591.4 1174.5,591.6C1172.0,591.8 1167.9,592.0 1165.6,592.4C1163.3,592.7 1162.4,593.0 1160.9,593.6C1159.4,594.1 1157.9,595.0 1156.7,595.8C1155.5,596.5 1154.4,597.2 1153.7,598.0C1153.1,598.7 1153.1,599.1 1152.6,600.2C1152.0,601.4 1151.1,603.1 1150.5,604.7C1150.0,606.3 1149.7,607.4 1149.4,609.9C1149.1,612.3 1148.9,616.7 1148.7,619.5C1148.5,622.3 1148.5,624.3 1148.3,626.6C1148.2,628.8 1148.2,631.9 1148.0,633.0C1147.9,634.1 1147.7,634.1 1147.6,633.0C1147.4,631.9 1147.4,628.8 1147.2,626.6C1147.1,624.3 1147.1,622.3 1146.9,619.5C1146.7,616.7 1146.4,612.3 1146.1,609.9C1145.8,607.4 1145.6,606.3 1145.0,604.7C1144.5,603.1 1143.6,601.5 1142.9,600.2C1142.3,599.0 1141.6,597.8 1140.9,597.0C1140.2,596.3 1139.8,596.3 1138.8,595.8C1137.7,595.2 1136.0,594.1 1134.5,593.6C1133.0,593.0 1132.0,592.7 1129.7,592.4C1127.4,592.0 1123.3,591.8 1120.7,591.6C1118.1,591.4 1116.1,591.3 1114.0,591.2C1111.9,591.1 1109.0,591.0 1108.0,590.9C1107.0,590.7 1107.0,590.5 1108.0,590.3C1109.0,590.2 1111.9,590.1 1114.0,590.0C1116.1,589.9 1118.1,589.8 1120.7,589.6C1123.3,589.4 1127.4,589.2 1129.7,588.8C1132.0,588.5 1133.0,588.2 1134.5,587.6C1136.0,587.1 1137.5,586.1 1138.8,585.4C1140.0,584.7 1141.1,583.9 1141.8,583.2C1142.5,582.4 1142.4,582.0 1142.9,580.9C1143.5,579.8 1144.5,578.0 1145.0,576.4C1145.6,574.8 1145.8,573.7 1146.1,571.2C1146.4,568.8 1146.7,564.4 1146.9,561.6C1147.1,558.8 1147.1,556.7 1147.2,554.5C1147.4,552.2 1147.4,549.1 1147.6,548.0C1147.7,546.9 1147.9,546.9 1148.0,548.0Z"/></g><path d="M1090,508 C1150,506 1232,489 1292,468 C1322,457 1350,445 1372,434" fill="none" stroke="#6a1018" stroke-width="9" stroke-linecap="round" filter="url(#b3)" opacity="0.9"/><path d="M1185.2,345.5C1190.1,339.6 1197.9,336.0 1204.8,333.7C1211.7,331.5 1218.9,331.0 1226.4,331.8C1233.9,332.6 1241.4,336.7 1249.9,338.6C1258.4,340.6 1269.6,342.6 1277.4,343.6C1285.3,344.5 1292.5,342.9 1297.0,344.5C1301.6,346.2 1303.4,349.0 1304.9,353.4C1306.4,357.8 1306.5,363.5 1305.9,371.0C1305.2,378.6 1303.4,389.4 1301.0,398.5C1298.5,407.7 1293.6,418.2 1291.2,426.0C1288.7,433.9 1286.6,438.4 1286.3,445.6C1285.9,452.8 1288.7,460.7 1289.2,469.2C1289.7,477.7 1288.5,488.2 1289.2,496.7C1289.8,505.2 1292.8,512.7 1293.1,520.2C1293.4,527.8 1293.8,535.6 1291.2,541.8C1288.5,548.0 1284.3,553.6 1277.4,557.5C1270.5,561.5 1259.7,563.8 1249.9,565.4C1240.1,567.0 1228.0,568.0 1218.5,567.3C1209.0,566.7 1199.9,565.7 1193.0,561.5C1186.1,557.2 1181.9,551.0 1177.3,541.8C1172.7,532.7 1168.8,517.9 1165.5,506.5C1162.2,495.0 1159.8,483.3 1157.7,473.1C1155.5,463.0 1152.4,453.5 1152.8,445.6C1153.1,437.8 1157.2,433.9 1159.6,426.0C1162.1,418.2 1164.9,408.0 1167.5,398.5C1170.1,389.0 1172.4,377.9 1175.3,369.1C1178.3,360.2 1180.2,351.4 1185.2,345.5Z" fill="#4a0c14" filter="url(#b2)" opacity="0.85"/><path d="M1185.2,345.5C1190.1,339.6 1197.9,336.0 1204.8,333.7C1211.7,331.5 1218.9,331.0 1226.4,331.8C1233.9,332.6 1241.4,336.7 1249.9,338.6C1258.4,340.6 1269.6,342.6 1277.4,343.6C1285.3,344.5 1292.5,342.9 1297.0,344.5C1301.6,346.2 1303.4,349.0 1304.9,353.4C1306.4,357.8 1306.5,363.5 1305.9,371.0C1305.2,378.6 1303.4,389.4 1301.0,398.5C1298.5,407.7 1293.6,418.2 1291.2,426.0C1288.7,433.9 1286.6,438.4 1286.3,445.6C1285.9,452.8 1288.7,460.7 1289.2,469.2C1289.7,477.7 1288.5,488.2 1289.2,496.7C1289.8,505.2 1292.8,512.7 1293.1,520.2C1293.4,527.8 1293.8,535.6 1291.2,541.8C1288.5,548.0 1284.3,553.6 1277.4,557.5C1270.5,561.5 1259.7,563.8 1249.9,565.4C1240.1,567.0 1228.0,568.0 1218.5,567.3C1209.0,566.7 1199.9,565.7 1193.0,561.5C1186.1,557.2 1181.9,551.0 1177.3,541.8C1172.7,532.7 1168.8,517.9 1165.5,506.5C1162.2,495.0 1159.8,483.3 1157.7,473.1C1155.5,463.0 1152.4,453.5 1152.8,445.6C1153.1,437.8 1157.2,433.9 1159.6,426.0C1162.1,418.2 1164.9,408.0 1167.5,398.5C1170.1,389.0 1172.4,377.9 1175.3,369.1C1178.3,360.2 1180.2,351.4 1185.2,345.5Z" fill="url(#lipg)"/><path d="M1191.4,357.3C1195.9,351.8 1202.6,344.9 1208.7,342.0C1214.9,339.0 1221.5,339.0 1228.3,339.6C1235.2,340.2 1241.8,343.7 1249.9,345.5C1258.1,347.4 1269.9,349.5 1277.4,350.6C1284.9,351.8 1291.6,349.0 1295.1,352.4C1298.5,355.8 1298.4,363.4 1298.0,371.0C1297.7,378.7 1295.4,389.4 1293.1,398.5C1290.8,407.7 1286.5,418.2 1284.3,426.0C1282.1,433.9 1280.0,438.1 1279.8,445.6C1279.5,453.2 1282.3,462.7 1282.9,471.2C1283.5,479.7 1282.8,488.5 1283.3,496.7C1283.8,504.9 1285.7,513.4 1285.7,520.2C1285.7,527.1 1285.7,532.8 1283.3,537.9C1281.0,543.0 1277.4,547.5 1271.5,550.7C1265.6,553.9 1256.8,555.8 1248.0,557.1C1239.1,558.5 1227.0,559.3 1218.5,558.5C1210.0,557.8 1202.8,556.4 1196.9,552.6C1191.1,548.9 1187.7,544.0 1183.6,535.9C1179.5,527.9 1175.6,515.0 1172.4,504.5C1169.2,494.1 1166.7,482.9 1164.5,473.1C1162.4,463.3 1159.3,453.5 1159.6,445.6C1160.0,437.8 1164.0,433.9 1166.5,426.0C1169.0,418.2 1171.7,407.0 1174.4,398.5C1177.0,390.0 1179.4,381.8 1182.2,375.0C1185.1,368.1 1187.0,362.8 1191.4,357.3Z" fill="none" stroke="#f5bcc2" stroke-width="4.5" opacity="0.6" filter="url(#b15)"/><path d="M1196.9,382.8C1199.7,374.5 1199.5,365.5 1203.8,360.2C1208.1,354.9 1214.8,352.2 1222.4,351.0C1230.1,349.8 1240.3,351.6 1249.9,353.0C1259.6,354.4 1274.2,356.7 1280.4,359.3C1286.5,361.8 1286.0,363.7 1286.8,368.1C1287.7,372.5 1287.2,378.4 1285.7,385.8C1284.1,393.1 1280.4,404.9 1277.4,412.3C1274.5,419.6 1270.0,424.0 1268.0,429.9C1266.0,435.8 1265.1,442.0 1265.6,447.6C1266.2,453.2 1269.2,456.4 1271.1,463.3C1273.1,470.2 1276.4,480.3 1277.4,488.8C1278.5,497.3 1280.4,507.0 1277.4,514.3C1274.5,521.7 1268.9,528.3 1259.7,533.0C1250.6,537.7 1234.1,543.6 1222.4,542.8C1210.8,542.0 1198.4,534.8 1190.1,528.1C1181.7,521.4 1176.5,511.1 1172.4,502.6C1168.2,494.1 1165.9,484.9 1165.1,477.0C1164.3,469.2 1165.3,462.3 1167.5,455.5C1169.7,448.6 1175.0,443.3 1178.3,435.8C1181.6,428.3 1184.0,419.1 1187.1,410.3C1190.2,401.5 1194.1,391.2 1196.9,382.8Z" fill="#d8485a" stroke="#c8202f" stroke-width="2.4" filter="url(#b1)"/><path d="M1199.3,384.8C1201.9,376.7 1201.7,368.5 1205.8,363.6C1209.8,358.7 1216.1,356.4 1223.4,355.3C1230.8,354.3 1240.7,355.9 1249.9,357.3C1259.2,358.7 1273.4,361.5 1279.0,363.6C1284.5,365.7 1282.8,366.2 1283.3,370.1C1283.8,373.9 1283.6,379.7 1282.1,386.7C1280.7,393.8 1277.4,405.1 1274.7,412.3C1271.9,419.5 1267.5,424.0 1265.6,429.9C1263.7,435.8 1262.8,442.0 1263.3,447.6C1263.8,453.2 1266.7,456.4 1268.6,463.3C1270.4,470.2 1273.5,480.6 1274.5,488.8C1275.4,497.0 1277.1,505.6 1274.3,512.4C1271.5,519.2 1266.4,525.2 1257.8,529.7C1249.1,534.1 1233.4,539.8 1222.4,539.1C1211.5,538.3 1199.9,531.6 1192.0,525.1C1184.2,518.7 1179.2,508.6 1175.3,500.6C1171.4,492.6 1169.4,484.2 1168.7,477.0C1167.9,469.8 1168.9,464.0 1171.0,457.4C1173.1,450.9 1178.1,445.3 1181.2,437.8C1184.4,430.3 1186.9,421.1 1189.9,412.3C1192.9,403.4 1196.6,392.9 1199.3,384.8Z" fill="url(#teeth)" filter="url(#b1)"/><path d="M1204.8,367.1C1207.1,364.2 1218.9,358.5 1223.4,357.7C1227.9,356.9 1244.5,358.5 1249.9,359.3C1255.3,360.0 1274.4,364.3 1277.4,365.5C1280.5,366.8 1281.7,370.8 1280.6,371.4C1279.4,372.0 1268.7,372.1 1265.6,371.4C1262.6,370.8 1252.9,365.6 1249.9,365.2C1247.0,364.7 1238.5,366.0 1236.2,367.1C1233.8,368.2 1227.8,374.1 1226.4,375.9C1225.0,377.8 1225.1,384.7 1222.4,385.8C1219.8,386.8 1201.6,388.6 1199.9,386.7C1198.1,384.9 1202.4,370.0 1204.8,367.1Z" fill="#ebe2e4" opacity="0.5" filter="url(#b15)"/><path d="M1226.4,376.9C1228.5,374.1 1232.3,369.9 1236.2,368.1C1240.1,366.3 1245.0,365.3 1249.9,366.1C1254.8,367.0 1261.1,369.9 1265.6,373.0C1270.2,376.1 1275.0,380.9 1277.4,384.8C1279.9,388.7 1280.7,392.6 1280.4,396.6C1280.0,400.5 1278.6,405.1 1275.5,408.3C1272.3,411.6 1267.3,413.2 1261.7,416.2C1256.1,419.1 1248.3,422.4 1242.1,426.0C1235.9,429.6 1229.3,433.5 1224.4,437.8C1219.6,442.0 1215.6,446.9 1213.0,451.5C1210.5,456.1 1208.7,461.2 1209.1,465.3C1209.5,469.4 1212.0,474.4 1215.6,476.1C1219.1,477.7 1223.3,476.7 1230.3,475.1C1237.3,473.4 1248.7,469.2 1257.8,466.3C1266.9,463.3 1279.6,455.6 1284.9,457.4C1290.1,459.2 1289.1,470.5 1289.2,477.0C1289.3,483.6 1287.6,490.5 1285.3,496.7C1283.0,502.9 1280.0,509.4 1275.5,514.3C1270.9,519.3 1264.7,522.9 1257.8,526.1C1250.9,529.4 1242.1,533.3 1234.2,534.0C1226.4,534.6 1218.2,533.0 1210.7,530.1C1203.1,527.1 1195.3,521.9 1189.1,516.3C1182.9,510.7 1177.0,503.2 1173.4,496.7C1169.8,490.1 1167.8,482.9 1167.5,477.0C1167.2,471.2 1168.5,466.3 1171.4,461.3C1174.4,456.4 1179.6,452.2 1185.2,447.6C1190.7,443.0 1199.2,438.8 1204.8,433.9C1210.3,429.0 1215.4,424.0 1218.5,418.2C1221.6,412.3 1222.6,404.1 1223.4,398.5C1224.2,393.0 1222.9,388.4 1223.4,384.8C1223.9,381.2 1224.2,379.7 1226.4,376.9Z" fill="#9c0c1a" filter="url(#b15)" opacity="0.9" transform="translate(0.6,1.4)"/><path d="M1226.4,376.9C1228.5,374.1 1232.3,369.9 1236.2,368.1C1240.1,366.3 1245.0,365.3 1249.9,366.1C1254.8,367.0 1261.1,369.9 1265.6,373.0C1270.2,376.1 1275.0,380.9 1277.4,384.8C1279.9,388.7 1280.7,392.6 1280.4,396.6C1280.0,400.5 1278.6,405.1 1275.5,408.3C1272.3,411.6 1267.3,413.2 1261.7,416.2C1256.1,419.1 1248.3,422.4 1242.1,426.0C1235.9,429.6 1229.3,433.5 1224.4,437.8C1219.6,442.0 1215.6,446.9 1213.0,451.5C1210.5,456.1 1208.7,461.2 1209.1,465.3C1209.5,469.4 1212.0,474.4 1215.6,476.1C1219.1,477.7 1223.3,476.7 1230.3,475.1C1237.3,473.4 1248.7,469.2 1257.8,466.3C1266.9,463.3 1279.6,455.6 1284.9,457.4C1290.1,459.2 1289.1,470.5 1289.2,477.0C1289.3,483.6 1287.6,490.5 1285.3,496.7C1283.0,502.9 1280.0,509.4 1275.5,514.3C1270.9,519.3 1264.7,522.9 1257.8,526.1C1250.9,529.4 1242.1,533.3 1234.2,534.0C1226.4,534.6 1218.2,533.0 1210.7,530.1C1203.1,527.1 1195.3,521.9 1189.1,516.3C1182.9,510.7 1177.0,503.2 1173.4,496.7C1169.8,490.1 1167.8,482.9 1167.5,477.0C1167.2,471.2 1168.5,466.3 1171.4,461.3C1174.4,456.4 1179.6,452.2 1185.2,447.6C1190.7,443.0 1199.2,438.8 1204.8,433.9C1210.3,429.0 1215.4,424.0 1218.5,418.2C1221.6,412.3 1222.6,404.1 1223.4,398.5C1224.2,393.0 1222.9,388.4 1223.4,384.8C1223.9,381.2 1224.2,379.7 1226.4,376.9Z" fill="url(#tong)"/><path d="M1226.4,376.9C1228.5,374.1 1232.3,369.9 1236.2,368.1C1240.1,366.3 1245.0,365.3 1249.9,366.1C1254.8,367.0 1261.1,369.9 1265.6,373.0C1270.2,376.1 1275.0,380.9 1277.4,384.8C1279.9,388.7 1280.7,392.6 1280.4,396.6C1280.0,400.5 1278.6,405.1 1275.5,408.3C1272.3,411.6 1267.3,413.2 1261.7,416.2C1256.1,419.1 1248.3,422.4 1242.1,426.0C1235.9,429.6 1229.3,433.5 1224.4,437.8C1219.6,442.0 1215.6,446.9 1213.0,451.5C1210.5,456.1 1208.7,461.2 1209.1,465.3C1209.5,469.4 1212.0,474.4 1215.6,476.1C1219.1,477.7 1223.3,476.7 1230.3,475.1C1237.3,473.4 1248.7,469.2 1257.8,466.3C1266.9,463.3 1279.6,455.6 1284.9,457.4C1290.1,459.2 1289.1,470.5 1289.2,477.0C1289.3,483.6 1287.6,490.5 1285.3,496.7C1283.0,502.9 1280.0,509.4 1275.5,514.3C1270.9,519.3 1264.7,522.9 1257.8,526.1C1250.9,529.4 1242.1,533.3 1234.2,534.0C1226.4,534.6 1218.2,533.0 1210.7,530.1C1203.1,527.1 1195.3,521.9 1189.1,516.3C1182.9,510.7 1177.0,503.2 1173.4,496.7C1169.8,490.1 1167.8,482.9 1167.5,477.0C1167.2,471.2 1168.5,466.3 1171.4,461.3C1174.4,456.4 1179.6,452.2 1185.2,447.6C1190.7,443.0 1199.2,438.8 1204.8,433.9C1210.3,429.0 1215.4,424.0 1218.5,418.2C1221.6,412.3 1222.6,404.1 1223.4,398.5C1224.2,393.0 1222.9,388.4 1223.4,384.8C1223.9,381.2 1224.2,379.7 1226.4,376.9Z" fill="none" stroke="#b80d1c" stroke-width="2.2" opacity="0.55" filter="url(#b15)"/><path d="M1259.7,418.2C1263.9,418.5 1266.1,425.4 1267.6,429.9C1269.1,434.5 1267.5,441.0 1268.8,445.6C1270.1,450.3 1277.3,454.6 1275.5,457.8C1273.6,461.0 1265.3,462.3 1257.8,464.9C1250.3,467.5 1237.1,471.8 1230.3,473.5C1223.5,475.2 1220.2,476.5 1217.0,475.1C1213.7,473.7 1211.5,469.1 1211.1,465.3C1210.7,461.4 1212.2,456.3 1214.6,451.9C1217.0,447.5 1220.9,443.0 1225.6,439.0C1230.3,434.9 1237.2,431.0 1242.9,427.6C1248.6,424.1 1255.6,417.8 1259.7,418.2Z" fill="#dcc0c5" filter="url(#b1)"/><path d="M1249.9,429.9C1254.2,425.8 1264.5,430.3 1267.6,432.9C1270.7,435.5 1267.5,441.5 1268.8,445.6C1270.1,449.8 1277.3,454.6 1275.5,457.8C1273.6,461.0 1263.3,464.9 1257.8,464.9C1252.2,464.8 1243.4,463.2 1242.1,457.4C1240.8,451.6 1245.7,434.0 1249.9,429.9Z" fill="#d9929c" opacity="0.55" filter="url(#b2)"/><path d="M1242.9,427.6C1240.0,429.5 1230.3,434.9 1225.6,439.0C1220.9,443.0 1217.0,447.5 1214.6,451.9C1212.2,456.3 1210.7,461.4 1211.1,465.3C1211.5,469.1 1216.0,473.4 1217.0,475.1" fill="none" stroke="#b00e1d" stroke-width="2" filter="url(#b1)" opacity="0.9"/><path d="M1204.8,465.3C1204.5,465.9 1203.2,467.7 1203.2,469.2C1203.2,470.7 1204.5,473.3 1204.8,474.1" fill="none" stroke="#ff8088" stroke-width="1.4" filter="url(#b1)" opacity="0.8"/><path d="M1275.5,388.7C1275.8,389.9 1277.4,393.3 1277.4,395.6C1277.4,397.9 1275.8,401.3 1275.5,402.4" fill="none" stroke="#f6606c" stroke-width="1.8" filter="url(#b1)" opacity="0.85"/><path d="M1184.2,520.2C1184.2,519.1 1192.5,527.8 1198.9,531.0C1205.3,534.2 1214.6,538.7 1222.4,539.5C1230.3,540.3 1238.8,537.8 1246.0,535.9C1253.2,534.0 1265.0,527.4 1265.6,528.1C1266.3,528.7 1257.1,536.9 1249.9,539.9C1242.7,542.8 1231.0,546.1 1222.4,545.8C1213.9,545.4 1205.3,542.2 1198.9,537.9C1192.5,533.7 1184.2,521.4 1184.2,520.2Z" fill="#f4dadd" filter="url(#b1)" opacity="0.85"/><path d="M1297.0,349.4C1297.5,353.0 1300.2,362.9 1300.0,371.0C1299.8,379.2 1297.9,390.0 1296.1,398.5C1294.3,407.0 1290.3,418.2 1289.2,422.1" fill="none" stroke="#f8d0d4" stroke-width="2" filter="url(#b1)" opacity="0.85"/><path d="M1169.4,422.1C1168.2,426.0 1162.3,436.5 1162.0,445.6C1161.7,454.8 1165.3,466.6 1167.5,477.0C1169.7,487.5 1174.0,503.2 1175.3,508.5" fill="none" stroke="#b63446" stroke-width="2.4" filter="url(#b15)" opacity="0.6"/><path d="M1097.5,500.7L1103.9,500.5L1110.4,500.2L1116.8,499.8L1123.3,499.3L1129.8,498.7L1136.3,498.1L1142.9,497.4L1149.4,496.6L1156.0,495.7L1162.6,494.8L1169.2,493.7L1175.8,492.6L1182.4,491.4L1189.1,490.2L1195.8,488.8L1202.5,487.4L1209.2,485.9L1215.9,484.4L1222.6,482.7L1229.4,481.0L1236.1,479.2L1242.9,477.3L1249.7,475.3L1256.5,473.3L1263.4,471.2L1270.2,469.0L1277.1,466.7L1284.0,464.4L1290.8,461.9L1297.7,459.3L1304.7,456.7L1311.6,454.0L1318.5,451.3L1325.5,448.4L1332.5,445.5L1339.4,442.4L1346.3,439.2L1353.3,435.9L1360.2,432.5L1367.1,428.8L1366.9,428.4L1359.7,431.2L1352.5,434.2L1345.4,437.1L1338.4,440.0L1331.3,442.8L1324.4,445.7L1317.4,448.5L1310.5,451.2L1303.5,453.8L1296.6,456.4L1289.7,458.8L1282.9,461.2L1276.0,463.6L1269.2,465.9L1262.4,468.2L1255.6,470.3L1248.8,472.4L1242.1,474.4L1235.4,476.3L1228.6,478.2L1221.9,480.0L1215.2,481.7L1208.6,483.4L1201.9,485.0L1195.3,486.5L1188.6,487.9L1182.0,489.3L1175.4,490.6L1168.9,491.8L1162.3,492.9L1155.7,494.0L1149.2,495.0L1142.7,495.9L1136.2,496.8L1129.7,497.6L1123.2,498.3L1116.8,498.9L1110.3,499.5L1103.9,500.0L1097.5,500.5Z" fill="url(#sw)"/><path d="M1338.3,256.6C1338.5,258.3 1338.6,263.1 1338.8,266.7C1338.9,270.2 1339.0,273.4 1339.2,277.7C1339.5,282.1 1339.9,289.0 1340.3,292.8C1340.7,296.7 1341.1,298.4 1341.8,300.9C1342.5,303.4 1343.7,305.9 1344.7,307.9C1345.6,309.9 1346.3,311.6 1347.5,312.9C1348.8,314.3 1350.4,315.0 1352.3,316.0C1354.2,317.0 1356.6,318.2 1359.0,319.0C1361.4,319.7 1363.0,320.1 1366.6,320.6C1370.3,321.0 1376.8,321.4 1381.0,321.7C1385.1,322.0 1388.1,322.0 1391.5,322.2C1394.8,322.4 1399.4,322.5 1401.0,322.6C1402.6,322.8 1402.6,323.2 1401.0,323.4C1399.4,323.5 1394.8,323.6 1391.5,323.8C1388.1,324.0 1385.1,324.0 1381.0,324.3C1376.8,324.6 1370.3,325.0 1366.6,325.4C1363.0,325.9 1361.4,326.2 1359.0,327.0C1356.6,327.8 1354.2,329.0 1352.3,330.0C1350.4,331.0 1348.8,331.7 1347.5,333.0C1346.3,334.4 1345.6,336.0 1344.7,338.0C1343.7,340.1 1342.5,342.6 1341.8,345.1C1341.1,347.6 1340.7,349.2 1340.3,353.1C1339.9,356.9 1339.5,363.8 1339.2,368.1C1339.0,372.5 1338.9,375.7 1338.8,379.2C1338.6,382.7 1338.5,387.5 1338.3,389.2C1338.2,390.9 1337.8,390.9 1337.7,389.2C1337.5,387.5 1337.4,382.7 1337.2,379.2C1337.1,375.7 1337.0,372.5 1336.8,368.1C1336.5,363.8 1336.1,356.9 1335.7,353.1C1335.3,349.2 1334.9,347.6 1334.2,345.1C1333.4,342.6 1332.2,340.1 1331.3,338.0C1330.3,336.0 1329.7,334.4 1328.4,333.0C1327.1,331.7 1325.5,331.0 1323.6,330.0C1321.7,329.0 1319.3,327.8 1316.9,327.0C1314.5,326.2 1312.9,325.9 1309.2,325.4C1305.5,325.0 1298.9,324.6 1294.8,324.3C1290.6,324.0 1287.6,324.0 1284.2,323.8C1280.8,323.6 1276.2,323.5 1274.6,323.4C1273.0,323.2 1273.0,322.8 1274.6,322.6C1276.2,322.5 1280.8,322.4 1284.2,322.2C1287.6,322.0 1290.6,322.0 1294.8,321.7C1298.9,321.4 1305.5,321.0 1309.2,320.6C1312.9,320.1 1314.5,319.7 1316.9,319.0C1319.3,318.2 1321.7,317.0 1323.6,316.0C1325.5,315.0 1327.1,314.3 1328.4,312.9C1329.7,311.6 1330.3,309.9 1331.3,307.9C1332.2,305.9 1333.4,303.4 1334.2,300.9C1334.9,298.4 1335.3,296.7 1335.7,292.8C1336.1,289.0 1336.5,282.1 1336.8,277.7C1337.0,273.4 1337.1,270.2 1337.2,266.7C1337.4,263.1 1337.5,258.3 1337.7,256.6C1337.8,254.9 1338.2,254.9 1338.3,256.6Z" fill="#f7f1e1"/><path d="M1150.0,539.3C1150.2,540.5 1150.2,544.1 1150.4,546.7C1150.5,549.3 1150.5,551.6 1150.7,554.8C1150.9,558.0 1151.1,563.0 1151.5,565.9C1151.8,568.7 1152.0,569.9 1152.6,571.8C1153.1,573.6 1153.9,575.5 1154.6,576.9C1155.3,578.4 1155.8,579.6 1156.7,580.6C1157.6,581.6 1158.7,582.1 1160.1,582.8C1161.5,583.6 1163.2,584.5 1164.9,585.0C1166.7,585.6 1167.8,585.9 1170.4,586.2C1173.1,586.6 1177.8,586.8 1180.8,587.0C1183.7,587.2 1185.9,587.3 1188.3,587.4C1190.7,587.5 1194.1,587.6 1195.2,587.7C1196.3,587.9 1196.3,588.1 1195.2,588.3C1194.1,588.4 1190.7,588.5 1188.3,588.6C1185.9,588.7 1183.7,588.8 1180.8,589.0C1177.8,589.2 1173.1,589.4 1170.4,589.8C1167.8,590.1 1166.7,590.4 1164.9,591.0C1163.2,591.5 1161.5,592.4 1160.1,593.2C1158.7,593.9 1157.6,594.4 1156.7,595.4C1155.8,596.4 1155.3,597.6 1154.6,599.1C1153.9,600.6 1153.1,602.4 1152.6,604.3C1152.0,606.1 1151.8,607.3 1151.5,610.2C1151.1,613.0 1150.9,618.1 1150.7,621.3C1150.5,624.5 1150.5,626.8 1150.4,629.4C1150.2,632.0 1150.2,635.6 1150.0,636.8C1149.9,638.0 1149.7,638.0 1149.5,636.8C1149.4,635.6 1149.3,632.0 1149.2,629.4C1149.1,626.8 1149.1,624.5 1148.9,621.3C1148.7,618.1 1148.4,613.0 1148.1,610.2C1147.8,607.3 1147.5,606.1 1146.9,604.3C1146.4,602.4 1145.5,600.6 1144.8,599.1C1144.1,597.6 1143.6,596.4 1142.6,595.4C1141.7,594.4 1140.5,593.9 1139.0,593.2C1137.6,592.4 1135.8,591.5 1134.0,591.0C1132.2,590.4 1131.0,590.1 1128.3,589.8C1125.6,589.4 1120.7,589.2 1117.5,589.0C1114.4,588.8 1112.2,588.7 1109.7,588.6C1107.2,588.5 1103.7,588.4 1102.5,588.3C1101.3,588.1 1101.3,587.9 1102.5,587.7C1103.7,587.6 1107.2,587.5 1109.7,587.4C1112.2,587.3 1114.4,587.2 1117.5,587.0C1120.7,586.8 1125.6,586.6 1128.3,586.2C1131.0,585.9 1132.2,585.6 1134.0,585.0C1135.8,584.5 1137.6,583.6 1139.0,582.8C1140.5,582.1 1141.7,581.6 1142.6,580.6C1143.6,579.6 1144.1,578.4 1144.8,576.9C1145.5,575.5 1146.4,573.6 1146.9,571.8C1147.5,569.9 1147.8,568.7 1148.1,565.9C1148.4,563.0 1148.7,558.0 1148.9,554.8C1149.1,551.6 1149.1,549.3 1149.2,546.7C1149.3,544.1 1149.4,540.5 1149.5,539.3C1149.7,538.1 1149.9,538.1 1150.0,539.3Z" fill="#f7f1e1"/><rect x="1228.5" y="456" width="58" height="58.5" fill="none" stroke="#3c4a2c" stroke-width="1" stroke-dasharray="1 1"/></svg>
<div style="position:absolute;left:350px;top:68px;width:10px;height:10px;background:#a89677;"></div>
<span class="t" style="left:388.00px;top:68.19px;font-size:11px;line-height:14px;color:#e6e6e6;letter-spacing:-0.289px;">Composition GFX_LA TURRA_CARETA</span>
<div style="position:absolute;left:335px;top:84px;width:260px;height:1.4px;background:#dcdcdc;"></div>
<span class="t" style="left:632.30px;top:68.19px;font-size:11px;line-height:14px;color:#b4b4b4;letter-spacing:-0.073px;">Layer (none)</span>
<div style="position:absolute;left:343px;top:94px;width:157px;height:24px;background:#414141;border-radius:4px;"></div>
<span class="t" style="left:353.30px;top:100.19px;font-size:11px;line-height:14px;color:#dadada;letter-spacing:-0.487px;">GFX_LA TURRA_CARETA</span>
<span class="t" style="left:510.20px;top:100.19px;font-size:11px;line-height:14px;color:#b8b8b8;letter-spacing:-0.575px;">GRID</span>
<div style="position:absolute;left:324px;top:123.5px;width:1810px;height:2px;background:#141414;"></div>
<span class="t" style="left:335.20px;top:135.72px;font-size:11.5px;line-height:15px;color:#dcdcdc;letter-spacing:0.052px;">Active Camera (Camera 1)</span>
<span class="t" style="left:372.70px;top:670.86px;font-size:10.5px;line-height:14px;color:#22c020;">Y</span>
<span class="t" style="left:392.09px;top:715.66px;font-size:10.5px;line-height:14px;color:#3a3aee;">Z</span>
<span class="t" style="left:435.80px;top:733.86px;font-size:10.5px;line-height:14px;color:#e02a2a;">X</span>
<div style="position:absolute;left:324px;top:791.5px;width:1810px;height:1.5px;background:#141414;"></div>
<div style="position:absolute;left:333.5px;top:797.5px;width:79px;height:18.5px;background:#1a1a1a;box-sizing:border-box;border:1px solid #303030;border-radius:4px;"></div><span class="t" style="left:342.30px;top:799.94px;font-size:11px;line-height:14px;color:#c8c8c8;letter-spacing:-0.074px;">(60,8%)</span>
<div style="position:absolute;left:431.5px;top:797.5px;width:91px;height:18.5px;background:#1a1a1a;box-sizing:border-box;border:1px solid #303030;border-radius:4px;"></div><span class="t" style="left:440.00px;top:799.94px;font-size:11px;line-height:14px;color:#c8c8c8;letter-spacing:0.035px;">Half</span>
<div style="position:absolute;left:421.1px;top:799px;width:1.4px;height:16px;background:#2c2c2c;"></div>
<div style="position:absolute;left:531.0999999999999px;top:799px;width:1.4px;height:16px;background:#2c2c2c;"></div>
<div style="position:absolute;left:665.5999999999999px;top:799px;width:1.4px;height:16px;background:#2c2c2c;"></div>
<div style="position:absolute;left:765.3px;top:799px;width:1.4px;height:16px;background:#2c2c2c;"></div>
<div style="position:absolute;left:827.5px;top:799px;width:1.4px;height:16px;background:#2c2c2c;"></div>
<div style="position:absolute;left:915.0px;top:799px;width:1.4px;height:16px;background:#2c2c2c;"></div>
<div style="position:absolute;left:1745.3px;top:799px;width:1.4px;height:16px;background:#2c2c2c;"></div>
<div style="position:absolute;left:1807.3px;top:799px;width:1.4px;height:16px;background:#2c2c2c;"></div>
<div style="position:absolute;left:1917.7px;top:799px;width:1.4px;height:16px;background:#2c2c2c;"></div>
<div style="position:absolute;left:2043.7px;top:799px;width:1.4px;height:16px;background:#2c2c2c;"></div>
<div style="position:absolute;left:541px;top:796.2px;width:19.6px;height:19.6px;background:#3b3b3b;border-radius:4px;"></div>
<div style="position:absolute;left:589.3px;top:796.2px;width:19.6px;height:19.6px;background:#3b3b3b;border-radius:4px;"></div>
<span class="t" style="left:725.00px;top:800.19px;font-size:11px;line-height:14px;color:#4a8fe6;letter-spacing:-0.279px;">+0,0</span>
<div style="position:absolute;left:837.5px;top:797.5px;width:69px;height:18.5px;background:#181818;box-sizing:border-box;border:1px solid #303030;border-radius:4px;"></div><span class="t" style="left:846.50px;top:799.94px;font-size:11px;line-height:14px;color:#c8c8c8;letter-spacing:-0.159px;">0:00:01:16</span>
<div style="position:absolute;left:1649.5px;top:797px;width:87px;height:19px;background:#1a1a1a;box-sizing:border-box;border:1px solid #303030;border-radius:4px;"></div><span class="t" style="left:1683.00px;top:799.69px;font-size:11px;line-height:14px;color:#d0d0d0;letter-spacing:-0.119px;">Draft 3D</span>
<div style="position:absolute;left:1779.3px;top:796.5px;width:19.5px;height:20px;background:#353535;border-radius:4px;"></div>
<div style="position:absolute;left:1817.5px;top:797.5px;width:91px;height:18.5px;background:#1a1a1a;box-sizing:border-box;border:1px solid #303030;border-radius:4px;"></div><span class="t" style="left:1826.00px;top:799.94px;font-size:11px;line-height:14px;color:#c8c8c8;letter-spacing:-0.407px;">Classic 3D</span>
<div style="position:absolute;left:1927px;top:797.5px;width:107.5px;height:18.5px;background:#1a1a1a;box-sizing:border-box;border:1px solid #303030;border-radius:4px;"></div><span class="t" style="left:1935.80px;top:799.94px;font-size:11px;line-height:14px;color:#c8c8c8;letter-spacing:-0.287px;">Active Came...</span>
<div style="position:absolute;left:2053.5px;top:797.5px;width:71px;height:18.5px;background:#1a1a1a;box-sizing:border-box;border:1px solid #303030;border-radius:4px;"></div><span class="t" style="left:2062.00px;top:799.94px;font-size:11px;line-height:14px;color:#c8c8c8;letter-spacing:0.030px;">1 View</span>
<svg style="position:absolute;left:0;top:0" width="2454" height="1324"><path d="M335.4,72.7L340.6,77.89999999999999M340.6,72.7L335.4,77.89999999999999" stroke="#8a8a8a" stroke-width="1.2" fill="none"/><rect x="371" y="71.5" width="8" height="5.8" rx="0.8" fill="#9a9a9a"/><path d="M373,71.5 v-2.2 a2.3,2.3 0 0 1 4.6,0" fill="none" stroke="#9a9a9a" stroke-width="1.2"/><rect x="374.3" y="73" width="1.5" height="2.6" fill="#1d1d1d"/><line x1="586.75" x2="595.25" y1="71.5" y2="71.5" stroke="#d8d8d8" stroke-width="1.1"/><line x1="586.75" x2="595.25" y1="74.6" y2="74.6" stroke="#d8d8d8" stroke-width="1.1"/><line x1="586.75" x2="595.25" y1="77.69999999999999" y2="77.69999999999999" stroke="#d8d8d8" stroke-width="1.1"/><path d="M494.6,102.2 L491.0,106 L494.6,109.8" fill="none" stroke="#d0d0d0" stroke-width="1.6" stroke-linecap="round" stroke-linejoin="round"/><line x1="385.5" y1="731" x2="385.5" y2="692" stroke="#22c020" stroke-width="1"/><path d="M385.5,685.5 l-3.3,14 h6.6z" fill="#22c020"/><line x1="385.5" y1="731" x2="414" y2="731" stroke="#e02a2a" stroke-width="1"/><path d="M431,731.3 l-16,-3 v6z" fill="none" stroke="#e02a2a" stroke-width="1"/><circle cx="385.5" cy="731.3" r="3.2" fill="#2a2ae0"/><path d="M383,731.3h5M385.5,728.8v5" stroke="#1d1d1d" stroke-width="0.7"/><path d="M394.25,804.5 L399,809.5 L403.75,804.5" fill="none" stroke="#d0d0d0" stroke-width="2.0" stroke-linecap="round" stroke-linejoin="round"/><path d="M504.25,804.5 L509,809.5 L513.75,804.5" fill="none" stroke="#d0d0d0" stroke-width="2.0" stroke-linecap="round" stroke-linejoin="round"/><rect x="545" y="800.5" width="11.5" height="11" fill="none" stroke="#c4c4c4" stroke-width="1.3"/><path d="M552.3,802 l-3.6,4.6 h2.6 l-1.4,3.8 l4,-5 h-2.6z" fill="#c4c4c4"/><path d="M555.5,812 l1.6,1.8 l1.6,-1.8z" fill="#c4c4c4"/><rect x="569" y="801" width="12" height="11" fill="#555" stroke="#c4c4c4" stroke-width="1.1"/><path d="M569,801h4v3.7h-4zM577,801h4v3.7h-4zM573,804.7h4v3.6h-4zM569,808.3h4v3.7h-4zM577,808.3h4v3.7h-4z" fill="#2a2a2a"/><path d="M594,811.5 L596,802 L606,801 L604.5,811.5Z" fill="none" stroke="#c4c4c4" stroke-width="1.3"/><rect x="592.7" y="810.2" width="2.6" height="2.6" fill="#c4c4c4"/><rect x="594.7" y="800.7" width="2.6" height="2.6" fill="#c4c4c4"/><rect x="604.7" y="799.7" width="2.6" height="2.6" fill="#c4c4c4"/><rect x="603.2" y="810.2" width="2.6" height="2.6" fill="#c4c4c4"/><rect x="616.5" y="800.8" width="12.5" height="11.2" fill="none" stroke="#c4c4c4" stroke-width="1.2"/><rect x="619.5" y="803.8" width="6.5" height="5.2" fill="#c4c4c4"/><rect x="641.5" y="800.5" width="10.5" height="9" fill="none" stroke="#c4c4c4" stroke-width="1.2"/><path d="M646.7,798 v14 M639,805 h15.5" stroke="#c4c4c4" stroke-width="1.1"/><path d="M649.5,812.3 l1.6,1.8 l1.6,-1.8z" fill="#c4c4c4"/><circle cx="684.3" cy="802.3" r="2.9" fill="#e03a3a"/><circle cx="682" cy="807.3" r="2.9" fill="#2fb54a"/><circle cx="687" cy="807.3" r="2.9" fill="#3a6ae8"/><path d="M689.5,798v4M687.5,800h4" stroke="#d0d0d0" stroke-width="1"/><path d="M684,812.5 l1.6,1.8 l1.6,-1.8z" fill="#c4c4c4"/><circle cx="709" cy="806.5" r="4.6" fill="none" stroke="#c4c4c4" stroke-width="2.6" stroke-dasharray="3.6 1.2"/><path d="M778.5,802 h3 l1,-1.7 h4.5 l1,1.7 h3 v9.3 h-12.5z" fill="#c4c4c4"/><circle cx="784.8" cy="806.5" r="2.6" fill="#1d1d1d"/><circle cx="784.8" cy="806.5" r="1.3" fill="#c4c4c4"/><path d="M802.5,807.5 q6.5,-6.5 13,0 q-6.5,6.5 -13,0z" fill="#5c5c5c"/><circle cx="809" cy="807.5" r="2.2" fill="#1d1d1d"/><path d="M810,800.3 h5.5 v4 h-5.5z" fill="#5c5c5c"/><path d="M1660.5,802.3 l4.3,-2.2 l4.3,2.2 v4.6 l-4.3,2.4 l-4.3,-2.4z M1660.5,802.3 l4.3,2.2 l4.3,-2.2 M1664.8,804.5 v4.8" fill="none" stroke="#c4c4c4" stroke-width="1"/><path d="M1672.5,805 l-3,4.2 h2.2 l-1.2,3.6 l3.6,-4.8 h-2.3z" fill="#c4c4c4"/><path d="M1759,810.5 l2.5,-7.5 h6.5 l2.5,7.5z M1764.3,803v7.5 M1760,807 h9.5" fill="none" stroke="#7a7a7a" stroke-width="1"/><rect x="1783" y="800.5" width="12" height="9.5" fill="none" stroke="#8c8c8c" stroke-width="1.2"/><path d="M1785.3,804.5v-2h2M1790.7,802.5h2v2M1792.7,806v2h-2M1787.3,808h-2v-2" fill="none" stroke="#8c8c8c" stroke-width="0.9"/><path d="M1790.5,812.3 l1.5,1.7 l1.5,-1.7z" fill="#8c8c8c"/><path d="M1890.25,804.0 L1895,809.0 L1899.75,804.0" fill="none" stroke="#d0d0d0" stroke-width="2.0" stroke-linecap="round" stroke-linejoin="round"/><path d="M2016.25,804.0 L2021,809.0 L2025.75,804.0" fill="none" stroke="#d0d0d0" stroke-width="2.0" stroke-linecap="round" stroke-linejoin="round"/><path d="M2106.25,804.0 L2111,809.0 L2115.75,804.0" fill="none" stroke="#d0d0d0" stroke-width="2.0" stroke-linecap="round" stroke-linejoin="round"/></svg>
<!-- part_right -->
<span class="t" style="left:2150.00px;top:68.19px;font-size:11px;line-height:14px;color:#e0e0e0;letter-spacing:-0.061px;">Preview</span>
<span class="t" style="left:2150.00px;top:124.19px;font-size:11px;line-height:14px;color:#e0e0e0;letter-spacing:-0.059px;">Properties: No Selection</span>
<div style="position:absolute;left:2138px;top:165px;width:299px;height:1.2px;background:#0c0c0c;"></div>
<span class="t" style="left:2150.00px;top:173.19px;font-size:11px;line-height:14px;color:#e0e0e0;letter-spacing:0.028px;">Align</span>
<span class="t" style="left:2144.00px;top:205.39px;font-size:11px;line-height:14px;color:#d0d0d0;letter-spacing:-0.101px;">Align Layers to:</span>
<div style="position:absolute;left:2226.2px;top:199.4px;width:105.8px;height:23.2px;background:#2b2b2b;border-radius:4px;"></div>
<span class="t" style="left:2235.00px;top:205.39px;font-size:11px;line-height:14px;color:#646464;letter-spacing:-0.073px;">Selection</span>
<div style="position:absolute;left:2144px;top:264px;width:195px;height:1.1px;background:#292929;"></div>
<span class="t" style="left:2144.00px;top:274.99px;font-size:11px;line-height:14px;color:#d0d0d0;letter-spacing:-0.072px;">Distribute Layers:</span>
<div style="position:absolute;left:2138px;top:290px;width:299px;height:1.2px;background:#0c0c0c;"></div>
<span class="t" style="left:2150.00px;top:297.99px;font-size:11px;line-height:14px;color:#e0e0e0;letter-spacing:-0.204px;">Effects &amp; Presets</span>
<div style="position:absolute;left:2143.8px;top:318.5px;width:288.8px;height:18.8px;background:#0f0f0f;box-sizing:border-box;border:1px solid #2a2a2a;border-radius:4px;"></div>
<div style="position:absolute;left:2138px;top:340.6px;width:299px;height:1.2px;background:#0c0c0c;"></div>
<div style="position:absolute;left:2436px;top:340.6px;width:1.2px;height:24px;background:#0c0c0c;"></div>
<svg style="position:absolute;left:0;top:0" width="2454" height="1324"><line x1="2198.8" x2="2207.2" y1="71.7" y2="71.7" stroke="#d0d0d0" stroke-width="1.1"/><line x1="2198.8" x2="2207.2" y1="74.8" y2="74.8" stroke="#d0d0d0" stroke-width="1.1"/><line x1="2198.8" x2="2207.2" y1="77.89999999999999" y2="77.89999999999999" stroke="#d0d0d0" stroke-width="1.1"/><rect x="2184.9" y="94.80000000000001" width="1.8" height="9.2" fill="#d0d0d0"/><path d="M2196.5,94.80000000000001 v9.2 l-8.4,-4.6z" fill="#d0d0d0"/><path d="M2215.8,94.80000000000001 v9.2 l-8.4,-4.6z" fill="#d0d0d0"/><rect x="2217.6" y="94.80000000000001" width="1.8" height="9.2" fill="#d0d0d0"/><path d="M2234.6,94.4 v10 l8.6,-5z" fill="#d0d0d0"/><rect x="2257.3" y="94.80000000000001" width="1.8" height="9.2" fill="#d0d0d0"/><path d="M2260.9,94.80000000000001 v9.2 l8.4,-4.6z" fill="#d0d0d0"/><path d="M2281.2,94.80000000000001 v9.2 l8.4,-4.6z" fill="#d0d0d0"/><rect x="2291" y="94.80000000000001" width="1.8" height="9.2" fill="#d0d0d0"/><line x1="2418.8" x2="2427.2" y1="127.70000000000002" y2="127.70000000000002" stroke="#d0d0d0" stroke-width="1.1"/><line x1="2418.8" x2="2427.2" y1="130.8" y2="130.8" stroke="#d0d0d0" stroke-width="1.1"/><line x1="2418.8" x2="2427.2" y1="133.9" y2="133.9" stroke="#d0d0d0" stroke-width="1.1"/><line x1="2418.8" x2="2427.2" y1="176.5" y2="176.5" stroke="#d0d0d0" stroke-width="1.1"/><line x1="2418.8" x2="2427.2" y1="179.6" y2="179.6" stroke="#d0d0d0" stroke-width="1.1"/><line x1="2418.8" x2="2427.2" y1="182.7" y2="182.7" stroke="#d0d0d0" stroke-width="1.1"/><path d="M2313.3,208.7 L2318,213.7 L2322.7,208.7" fill="none" stroke="#707070" stroke-width="1.9" stroke-linecap="round" stroke-linejoin="round"/><rect x="2148.8" y="236" width="1.1" height="14" fill="#6c6c6c"/><rect x="2150.8" y="238" width="6.6" height="4" fill="#6c6c6c"/><rect x="2150.8" y="244" width="10.8" height="4" fill="#6c6c6c"/><rect x="2189.1499999999996" y="236" width="1.1" height="14" fill="#6c6c6c"/><rect x="2186.1" y="238" width="7.2" height="4" fill="#6c6c6c"/><rect x="2184.1" y="244" width="11.2" height="4" fill="#6c6c6c"/><rect x="2229.7" y="236" width="1.1" height="14" fill="#6c6c6c"/><rect x="2222.2" y="238" width="6.6" height="4" fill="#6c6c6c"/><rect x="2218.0" y="244" width="10.8" height="4" fill="#6c6c6c"/><rect x="2250.6" y="236.2" width="14.8" height="1.1" fill="#6c6c6c"/><rect x="2253" y="238.2" width="4" height="11" fill="#6c6c6c"/><rect x="2259" y="238.2" width="4" height="6.4" fill="#6c6c6c"/><rect x="2284.5" y="242.45" width="14.8" height="1.1" fill="#6c6c6c"/><rect x="2286.9" y="237.4" width="4" height="11.2" fill="#6c6c6c"/><rect x="2292.9" y="239.4" width="4" height="7.2" fill="#6c6c6c"/><rect x="2318.7999999999997" y="248.8" width="14.8" height="1.1" fill="#6c6c6c"/><rect x="2321.2" y="236.6" width="4" height="11" fill="#6c6c6c"/><rect x="2327.2" y="241.2" width="4" height="6.4" fill="#6c6c6c"/><line x1="2418.8" x2="2427.2" y1="301.5" y2="301.5" stroke="#d0d0d0" stroke-width="1.1"/><line x1="2418.8" x2="2427.2" y1="304.6" y2="304.6" stroke="#d0d0d0" stroke-width="1.1"/><line x1="2418.8" x2="2427.2" y1="307.70000000000005" y2="307.70000000000005" stroke="#d0d0d0" stroke-width="1.1"/><circle cx="2155" cy="326.9" r="3.6" fill="none" stroke="#b0b0b0" stroke-width="1.2"/><line x1="2157.6" y1="329.59999999999997" x2="2160.6" y2="332.79999999999995" stroke="#b0b0b0" stroke-width="1.3"/><path d="M2161.4,328.79999999999995 l2.3,2.3 l2.3,-2.3" fill="none" stroke="#b0b0b0" stroke-width="1.2"/><path d="M2417.5,348 h11.5 v11.5 h-5.6 v-5.8 h-5.9z" fill="#c8c8c8"/><path d="M2418.2,354.6 h4.4 v4.4z" fill="#c8c8c8"/></svg>
<!-- part_timeline -->
<span class="t" style="left:27.30px;top:828.19px;font-size:11px;line-height:14px;color:#b8b8b8;letter-spacing:-0.239px;">Render Queue</span>
<div style="position:absolute;left:153px;top:828px;width:9.8px;height:9.8px;background:#a89677;"></div>
<span class="t" style="left:174.00px;top:828.19px;font-size:11px;line-height:14px;color:#b8b8b8;letter-spacing:-0.490px;">GFX_LA TURRA_REF BIBLIO</span>
<div style="position:absolute;left:368px;top:828px;width:9.8px;height:9.8px;background:#a89677;"></div>
<span class="t" style="left:388.60px;top:828.19px;font-size:11px;line-height:14px;color:#b8b8b8;letter-spacing:-0.542px;">GFX_LA TURRA_ CREDITS</span>
<div style="position:absolute;left:573.5px;top:828px;width:9.8px;height:9.8px;background:#a89677;"></div>
<span class="t" style="left:594.20px;top:828.19px;font-size:11px;line-height:14px;color:#b8b8b8;letter-spacing:-0.454px;">GFX_LA TURRA_MARCO DULCEIDA</span>
<div style="position:absolute;left:826.4px;top:828px;width:9.8px;height:9.8px;background:#a89677;"></div>
<span class="t" style="left:846.80px;top:828.19px;font-size:11px;line-height:14px;color:#b8b8b8;letter-spacing:-0.371px;">GFX_LA TURRA_CHYRON_Charlie Pee</span>
<div style="position:absolute;left:1091.4px;top:828px;width:9.8px;height:9.8px;background:#a89677;"></div>
<span class="t" style="left:1112.00px;top:828.19px;font-size:11px;line-height:14px;color:#ececec;letter-spacing:-0.518px;">GFX_LA TURRA_CARETA</span>
<div style="position:absolute;left:1076px;top:844px;width:177px;height:1.4px;background:#dcdcdc;"></div>
<span class="t" style="left:12.60px;top:848.55px;font-size:14px;line-height:18px;color:#4596f4;letter-spacing:0.411px;font-weight:bold;">0:00:01:16</span>
<span class="t" style="left:11.00px;top:866.04px;font-size:10px;line-height:13px;color:#2f6fc4;letter-spacing:-0.082px;">00041 (25.00 fps)</span>
<div style="position:absolute;left:99.8px;top:853.6px;width:295.4px;height:18.6px;background:#0f0f0f;box-sizing:border-box;border:1px solid #2a2a2a;border-radius:4px;"></div>
<div style="position:absolute;left:0px;top:880.6px;width:533px;height:1.2px;background:#121212;"></div>
<div style="position:absolute;left:478px;top:854px;width:19.6px;height:19.6px;background:#3e3e3e;border-radius:4px;"></div>
<div style="position:absolute;left:533.5px;top:851px;width:1582.5px;height:10px;background:#000;"></div>
<div style="position:absolute;left:541px;top:852px;width:1134px;height:8px;background:#5c5c5c;"></div>
<div style="position:absolute;left:1679px;top:852px;width:299px;height:8px;background:#3a3734;"></div>
<div style="position:absolute;left:1978px;top:852px;width:132px;height:8px;background:#222;"></div>
<div style="position:absolute;left:2110px;top:852px;width:6px;height:8px;background:#1a1a1a;"></div>
<div style="position:absolute;left:534px;top:852px;width:6.6px;height:8px;background:#3e8ef0;border-radius:5px 0 0 5px;"></div>
<div style="position:absolute;left:1673.5px;top:852px;width:5.5px;height:8px;background:#3e8ef0;border-radius:0 4px 4px 0;"></div>
<div style="position:absolute;left:798.3px;top:852.5px;width:1.4px;height:7px;background:#3e8ef0;"></div>
<div style="position:absolute;left:534px;top:860px;width:30px;height:18px;overflow:hidden"><span class="t" style="left:-4.60px;top:3.27px;font-size:9.6px;line-height:12px;color:#c0c0c0;">0:00s</span></div>
<span class="t" style="left:751.06px;top:863.27px;font-size:9.6px;line-height:12px;color:#c0c0c0;">01s</span>
<span class="t" style="left:968.46px;top:863.27px;font-size:9.6px;line-height:12px;color:#c0c0c0;">02s</span>
<span class="t" style="left:1185.86px;top:863.27px;font-size:9.6px;line-height:12px;color:#c0c0c0;">03s</span>
<span class="t" style="left:1403.26px;top:863.27px;font-size:9.6px;line-height:12px;color:#c0c0c0;">04s</span>
<span class="t" style="left:1620.66px;top:863.27px;font-size:9.6px;line-height:12px;color:#c0c0c0;">05s</span>
<span class="t" style="left:1838.06px;top:863.27px;font-size:9.6px;line-height:12px;color:#c0c0c0;">06s</span>
<span class="t" style="left:2055.46px;top:863.27px;font-size:9.6px;line-height:12px;color:#c0c0c0;">07s</span>
<div style="position:absolute;left:541.0px;top:872.5px;width:1px;height:7.5px;background:#a8a8a8;"></div>
<div style="position:absolute;left:758.4px;top:874px;width:1px;height:6px;background:#a8a8a8;"></div>
<div style="position:absolute;left:975.8000000000001px;top:874px;width:1px;height:6px;background:#a8a8a8;"></div>
<div style="position:absolute;left:1193.1999999999998px;top:874px;width:1px;height:6px;background:#a8a8a8;"></div>
<div style="position:absolute;left:1410.6px;top:874px;width:1px;height:6px;background:#a8a8a8;"></div>
<div style="position:absolute;left:1628.0px;top:874px;width:1px;height:6px;background:#a8a8a8;"></div>
<div style="position:absolute;left:1845.4px;top:874px;width:1px;height:6px;background:#a8a8a8;"></div>
<div style="position:absolute;left:2062.7999999999997px;top:874px;width:1px;height:6px;background:#a8a8a8;"></div>
<div style="position:absolute;left:533.5px;top:880px;width:1583px;height:1.2px;background:#000;"></div>
<div style="position:absolute;left:541px;top:881.4px;width:1575px;height:14.6px;background:#575757;"></div>
<div style="position:absolute;left:534.6px;top:882px;width:6.2px;height:13.6px;background:#3e8ef0;border-radius:5px 0 0 5px;"></div>
<div style="position:absolute;left:533.5px;top:896px;width:1583px;height:1px;background:#000;"></div>
<div style="position:absolute;left:533.5px;top:897px;width:1583px;height:4px;background:#272727;"></div>
<div style="position:absolute;left:705.8px;top:897px;width:392.4px;height:3.2px;background:#2fbf3a;"></div>
<div style="position:absolute;left:0px;top:900px;width:2116px;height:412px;background:#171717;"></div>
<div style="position:absolute;left:534px;top:900.5px;width:1582px;height:16.2px;background:#303030;"></div>
<div style="position:absolute;left:534px;top:900.5px;width:7px;height:16.2px;background:#2b2b2b;"></div>
<div style="position:absolute;left:534px;top:917.5px;width:1582px;height:16.2px;background:#303030;"></div>
<div style="position:absolute;left:534px;top:917.5px;width:7px;height:16.2px;background:#2b2b2b;"></div>
<div style="position:absolute;left:534px;top:934.5px;width:1582px;height:16.2px;background:#303030;"></div>
<div style="position:absolute;left:534px;top:934.5px;width:7px;height:16.2px;background:#2b2b2b;"></div>
<div style="position:absolute;left:534px;top:951.5px;width:1582px;height:16.2px;background:#303030;"></div>
<div style="position:absolute;left:534px;top:951.5px;width:7px;height:16.2px;background:#2b2b2b;"></div>
<div style="position:absolute;left:534px;top:968.5px;width:1582px;height:16.2px;background:#303030;"></div>
<div style="position:absolute;left:534px;top:968.5px;width:7px;height:16.2px;background:#2b2b2b;"></div>
<div style="position:absolute;left:534px;top:985.5px;width:1582px;height:16.2px;background:#303030;"></div>
<div style="position:absolute;left:534px;top:985.5px;width:7px;height:16.2px;background:#2b2b2b;"></div>
<div style="position:absolute;left:534px;top:1002.5px;width:1582px;height:16.2px;background:#303030;"></div>
<div style="position:absolute;left:534px;top:1002.5px;width:7px;height:16.2px;background:#2b2b2b;"></div>
<div style="position:absolute;left:534px;top:1019.5px;width:1582px;height:16.2px;background:#303030;"></div>
<div style="position:absolute;left:534px;top:1019.5px;width:7px;height:16.2px;background:#2b2b2b;"></div>
<div style="position:absolute;left:534px;top:1036.5px;width:1582px;height:16.2px;background:#303030;"></div>
<div style="position:absolute;left:534px;top:1036.5px;width:7px;height:16.2px;background:#2b2b2b;"></div>
<div style="position:absolute;left:534px;top:1053.5px;width:1582px;height:16.2px;background:#303030;"></div>
<div style="position:absolute;left:534px;top:1053.5px;width:7px;height:16.2px;background:#2b2b2b;"></div>
<div style="position:absolute;left:534px;top:1070.5px;width:1582px;height:16.2px;background:#303030;"></div>
<div style="position:absolute;left:534px;top:1070.5px;width:7px;height:16.2px;background:#2b2b2b;"></div>
<div style="position:absolute;left:534px;top:1087.5px;width:1582px;height:16.2px;background:#303030;"></div>
<div style="position:absolute;left:534px;top:1087.5px;width:7px;height:16.2px;background:#2b2b2b;"></div>
<div style="position:absolute;left:534px;top:1104.5px;width:1582px;height:16.2px;background:#303030;"></div>
<div style="position:absolute;left:534px;top:1104.5px;width:7px;height:16.2px;background:#2b2b2b;"></div>
<div style="position:absolute;left:534px;top:1121.5px;width:1582px;height:16.2px;background:#303030;"></div>
<div style="position:absolute;left:534px;top:1121.5px;width:7px;height:16.2px;background:#2b2b2b;"></div>
<div style="position:absolute;left:534px;top:1138.5px;width:1582px;height:16.2px;background:#303030;"></div>
<div style="position:absolute;left:534px;top:1138.5px;width:7px;height:16.2px;background:#2b2b2b;"></div>
<div style="position:absolute;left:534px;top:1155.5px;width:1582px;height:16.2px;background:#303030;"></div>
<div style="position:absolute;left:534px;top:1155.5px;width:7px;height:16.2px;background:#2b2b2b;"></div>
<div style="position:absolute;left:534px;top:1172.5px;width:1582px;height:16.2px;background:#303030;"></div>
<div style="position:absolute;left:534px;top:1172.5px;width:7px;height:16.2px;background:#2b2b2b;"></div>
<div style="position:absolute;left:534px;top:1189.5px;width:1582px;height:16.2px;background:#303030;"></div>
<div style="position:absolute;left:534px;top:1189.5px;width:7px;height:16.2px;background:#2b2b2b;"></div>
<div style="position:absolute;left:534px;top:1206.5px;width:1582px;height:16.2px;background:#303030;"></div>
<div style="position:absolute;left:534px;top:1206.5px;width:7px;height:16.2px;background:#2b2b2b;"></div>
<div style="position:absolute;left:534px;top:1223.5px;width:1582px;height:16.2px;background:#303030;"></div>
<div style="position:absolute;left:534px;top:1223.5px;width:7px;height:16.2px;background:#2b2b2b;"></div>
<div style="position:absolute;left:534px;top:1240.5px;width:1582px;height:16.2px;background:#303030;"></div>
<div style="position:absolute;left:534px;top:1240.5px;width:7px;height:16.2px;background:#2b2b2b;"></div>
<div style="position:absolute;left:534px;top:1257.5px;width:1582px;height:16.2px;background:#303030;"></div>
<div style="position:absolute;left:534px;top:1257.5px;width:7px;height:16.2px;background:#2b2b2b;"></div>
<div style="position:absolute;left:534px;top:1274.5px;width:1582px;height:16.2px;background:#303030;"></div>
<div style="position:absolute;left:534px;top:1274.5px;width:7px;height:16.2px;background:#2b2b2b;"></div>
<div style="position:absolute;left:534px;top:1291.5px;width:1582px;height:16.2px;background:#303030;"></div>
<div style="position:absolute;left:534px;top:1291.5px;width:7px;height:16.2px;background:#2b2b2b;"></div>
<div style="position:absolute;left:534px;top:1308.5px;width:1582px;height:3.5px;background:#303030;"></div>
<div style="position:absolute;left:541.6px;top:934.5px;width:1574.4px;height:16.2px;background:#28362a;"></div>
<div style="position:absolute;left:541.6px;top:951.5px;width:1574.4px;height:16.2px;background:#28362a;"></div>
<div style="position:absolute;left:1385px;top:968.5px;width:731px;height:16.2px;background:#28362a;"></div>
<div style="position:absolute;left:1375.8px;top:900.5px;width:86.90000000000009px;height:16.2px;background:#4a5594;"></div>
<div style="position:absolute;left:1350px;top:917.5px;width:86.59999999999991px;height:16.2px;background:#4a5594;"></div>
<div style="position:absolute;left:1236.7px;top:1036.5px;width:86.89999999999986px;height:16.2px;background:#8b757d;"></div>
<div style="position:absolute;left:1236.7px;top:1053.5px;width:86.89999999999986px;height:16.2px;background:#8b757d;"></div>
<div style="position:absolute;left:1236.7px;top:1070.5px;width:86.89999999999986px;height:16.2px;background:#8b757d;"></div>
<div style="position:absolute;left:1227.7px;top:1087.5px;width:86.89999999999986px;height:16.2px;background:#8b757d;"></div>
<div style="position:absolute;left:540.8px;top:1104.5px;width:51.700000000000045px;height:16.2px;background:#914d82;"></div>
<div style="position:absolute;left:540.8px;top:1121.5px;width:25.600000000000023px;height:16.2px;background:#914d82;"></div>
<div style="position:absolute;left:540.8px;top:1138.5px;width:34.700000000000045px;height:16.2px;background:#914d82;"></div>
<div style="position:absolute;left:540.8px;top:1155.5px;width:60.700000000000045px;height:16.2px;background:#914d82;"></div>
<div style="position:absolute;left:828px;top:1172.5px;width:147.39999999999998px;height:16.2px;background:#914d82;"></div>
<div style="position:absolute;left:540.8px;top:1189.5px;width:234.80000000000007px;height:16.2px;background:#914d82;"></div>
<div style="position:absolute;left:540.8px;top:1223.5px;width:234.80000000000007px;height:16.2px;background:#914d82;"></div>
<div style="position:absolute;left:540.8px;top:1240.5px;width:234.80000000000007px;height:16.2px;background:#914d82;"></div>
<div style="position:absolute;left:540.8px;top:1274.5px;width:234.80000000000007px;height:16.2px;background:#914d82;"></div>
<div style="position:absolute;left:1776px;top:1291.5px;width:260.70000000000005px;height:16.2px;background:#914d82;"></div>
<div style="position:absolute;left:1672px;top:1308.5px;width:260.5px;height:3px;background:#914d82;"></div>
<div style="position:absolute;left:533px;top:881px;width:1.2px;height:431px;background:#0a0a0a;"></div>
<div style="position:absolute;left:897.8px;top:879px;width:1.1px;height:432px;background:#4a8de0;"></div>
<div style="position:absolute;left:2116px;top:881px;width:18px;height:431px;background:#1d1d1d;"></div>
<div style="position:absolute;left:2120.3px;top:922px;width:8.2px;height:264px;background:#3c3c3c;border-radius:4px;"></div>
<div style="position:absolute;left:0px;top:1312px;width:2134px;height:12px;background:#1d1d1d;"></div>
<div style="position:absolute;left:645.5px;top:1316px;width:1055.5px;height:12px;background:#3c3c3c;border-radius:5px;"></div>
<div style="position:absolute;left:67.30000000000001px;top:886px;width:2.2px;height:10.4px;background:#121212;"></div>
<div style="position:absolute;left:99.4px;top:886px;width:2.2px;height:10.4px;background:#121212;"></div>
<div style="position:absolute;left:132.4px;top:886px;width:2.2px;height:10.4px;background:#121212;"></div>
<div style="position:absolute;left:261.79999999999995px;top:886px;width:2.2px;height:10.4px;background:#121212;"></div>
<div style="position:absolute;left:398.7px;top:886px;width:2.2px;height:10.4px;background:#121212;"></div>
<div style="position:absolute;left:515.6px;top:886px;width:2.2px;height:10.4px;background:#121212;"></div>
<span class="t" style="left:106.00px;top:886.01px;font-size:9.5px;line-height:12px;color:#b4b4b4;">#</span>
<span class="t" style="left:139.00px;top:886.01px;font-size:9.5px;line-height:12px;color:#c8c8c8;letter-spacing:-0.315px;">Layer Name</span>
<span class="t" style="left:406.40px;top:886.31px;font-size:9.5px;line-height:12px;color:#c8c8c8;letter-spacing:-0.187px;">Parent &amp; Link</span>
<span class="t" style="left:313.60px;top:882.60px;font-size:13px;line-height:17px;color:#b8b8b8;font-style:italic;">fx</span>
<div style="position:absolute;left:0px;top:900px;width:533px;height:1px;background:#141414;"></div>
<div style="position:absolute;left:0px;top:900.5px;width:533px;height:16.2px;background:#2b2b2b;"></div>
<div style="position:absolute;left:5.4px;top:902.5px;width:12px;height:12px;background:#131313;"></div>
<div style="position:absolute;left:50.4px;top:902.5px;width:12px;height:12px;background:#131313;"></div>
<div style="position:absolute;left:86px;top:902.8px;width:12px;height:12px;background:#6478dc;"></div>
<span class="t" style="left:107.20px;top:901.99px;font-size:11px;line-height:14px;color:#c6c6c6;">1</span>
<span class="t" style="left:155.20px;top:901.99px;font-size:11px;line-height:14px;color:#cacaca;letter-spacing:-0.274px;">Shape Layer 3</span>
<div style="position:absolute;left:268.4px;top:902.5px;width:12.4px;height:12px;background:#1b1b1b;"></div>
<div style="position:absolute;left:283.4px;top:902.5px;width:12px;height:12px;background:#343434;"></div>
<div style="position:absolute;left:298.2px;top:902.5px;width:12.3px;height:12px;background:#1b1b1b;"></div>
<div style="position:absolute;left:343.3px;top:902.5px;width:12.2px;height:12px;background:#161616;"></div>
<div style="position:absolute;left:358.4px;top:902.5px;width:12.2px;height:12px;background:#161616;"></div>
<div style="position:absolute;left:373.4px;top:902.5px;width:12.2px;height:12px;background:#161616;"></div>
<div style="position:absolute;left:424px;top:902.3px;width:88.8px;height:13.6px;background:#121212;border-radius:3.5px;"></div>
<span class="t" style="left:432.40px;top:902.09px;font-size:11px;line-height:14px;color:#c4c4c4;letter-spacing:-0.174px;">None</span>
<div style="position:absolute;left:0px;top:917.5px;width:533px;height:16.2px;background:#2b2b2b;"></div>
<div style="position:absolute;left:5.4px;top:919.5px;width:12px;height:12px;background:#131313;"></div>
<div style="position:absolute;left:50.4px;top:919.5px;width:12px;height:12px;background:#131313;"></div>
<div style="position:absolute;left:86px;top:919.8px;width:12px;height:12px;background:#6478dc;"></div>
<span class="t" style="left:107.20px;top:918.99px;font-size:11px;line-height:14px;color:#c6c6c6;">2</span>
<span class="t" style="left:155.20px;top:918.99px;font-size:11px;line-height:14px;color:#cacaca;letter-spacing:-0.274px;">Shape Layer 2</span>
<div style="position:absolute;left:268.4px;top:919.5px;width:12.4px;height:12px;background:#1b1b1b;"></div>
<div style="position:absolute;left:283.4px;top:919.5px;width:12px;height:12px;background:#343434;"></div>
<div style="position:absolute;left:298.2px;top:919.5px;width:12.3px;height:12px;background:#1b1b1b;"></div>
<div style="position:absolute;left:343.3px;top:919.5px;width:12.2px;height:12px;background:#161616;"></div>
<div style="position:absolute;left:358.4px;top:919.5px;width:12.2px;height:12px;background:#161616;"></div>
<div style="position:absolute;left:373.4px;top:919.5px;width:12.2px;height:12px;background:#161616;"></div>
<div style="position:absolute;left:424px;top:919.3px;width:88.8px;height:13.6px;background:#121212;border-radius:3.5px;"></div>
<span class="t" style="left:432.40px;top:919.09px;font-size:11px;line-height:14px;color:#c4c4c4;letter-spacing:-0.174px;">None</span>
<div style="position:absolute;left:0px;top:934.5px;width:533px;height:16.2px;background:#2b2b2b;"></div>
<div style="position:absolute;left:5.4px;top:936.5px;width:12px;height:12px;background:#131313;"></div>
<div style="position:absolute;left:35.2px;top:936.5px;width:12px;height:12px;background:#131313;"></div>
<div style="position:absolute;left:50.4px;top:936.5px;width:12px;height:12px;background:#131313;"></div>
<div style="position:absolute;left:86px;top:936.8px;width:12px;height:12px;background:#1e3a1e;"></div>
<span class="t" style="left:107.20px;top:935.99px;font-size:11px;line-height:14px;color:#c6c6c6;">3</span>
<span class="t" style="left:155.20px;top:935.99px;font-size:11px;line-height:14px;color:#cacaca;letter-spacing:-0.250px;">Camera 1</span>
<div style="position:absolute;left:268.4px;top:936.5px;width:12.4px;height:12px;background:#1b1b1b;"></div>
<div style="position:absolute;left:373.4px;top:936.5px;width:12.2px;height:12px;background:#161616;"></div>
<div style="position:absolute;left:424px;top:936.3px;width:88.8px;height:13.6px;background:#121212;border-radius:3.5px;"></div>
<span class="t" style="left:432.40px;top:936.09px;font-size:11px;line-height:14px;color:#c4c4c4;letter-spacing:-0.174px;">None</span>
<div style="position:absolute;left:0px;top:951.5px;width:533px;height:16.2px;background:#2b2b2b;"></div>
<div style="position:absolute;left:5.4px;top:953.5px;width:12px;height:12px;background:#131313;"></div>
<div style="position:absolute;left:35.2px;top:953.5px;width:12px;height:12px;background:#131313;"></div>
<div style="position:absolute;left:50.4px;top:953.5px;width:12px;height:12px;background:#131313;"></div>
<div style="position:absolute;left:86px;top:953.8px;width:12px;height:12px;background:#1e3a1e;"></div>
<span class="t" style="left:107.20px;top:952.99px;font-size:11px;line-height:14px;color:#c6c6c6;">4</span>
<div style="position:absolute;left:135.9px;top:952.6px;width:14.3px;height:14.3px;background:#fff;box-sizing:border-box;border:1px solid #000;border-radius:1.5px;"></div>
<span class="t" style="left:155.20px;top:952.99px;font-size:11px;line-height:14px;color:#cacaca;letter-spacing:-0.222px;">FX_Wiggle</span>
<div style="position:absolute;left:268.4px;top:953.5px;width:12.4px;height:12px;background:#1b1b1b;"></div>
<div style="position:absolute;left:283.4px;top:953.5px;width:12px;height:12px;background:#161616;"></div>
<div style="position:absolute;left:298.2px;top:953.5px;width:12.3px;height:12px;background:#1b1b1b;"></div>
<div style="position:absolute;left:343.3px;top:953.5px;width:12.2px;height:12px;background:#161616;"></div>
<div style="position:absolute;left:358.4px;top:953.5px;width:12.2px;height:12px;background:#161616;"></div>
<div style="position:absolute;left:373.4px;top:953.5px;width:12.2px;height:12px;background:#161616;"></div>
<div style="position:absolute;left:424px;top:953.3px;width:88.8px;height:13.6px;background:#121212;border-radius:3.5px;"></div>
<span class="t" style="left:432.40px;top:953.09px;font-size:11px;line-height:14px;color:#c4c4c4;letter-spacing:-0.174px;">None</span>
<div style="position:absolute;left:0px;top:968.5px;width:533px;height:16.2px;background:#2b2b2b;"></div>
<div style="position:absolute;left:5.4px;top:970.5px;width:12px;height:12px;background:#131313;"></div>
<div style="position:absolute;left:35.2px;top:970.5px;width:12px;height:12px;background:#131313;"></div>
<div style="position:absolute;left:50.4px;top:970.5px;width:12px;height:12px;background:#131313;"></div>
<div style="position:absolute;left:86px;top:970.8px;width:12px;height:12px;background:#1e3a1e;"></div>
<span class="t" style="left:107.20px;top:969.99px;font-size:11px;line-height:14px;color:#c6c6c6;">5</span>
<div style="position:absolute;left:135.9px;top:969.6px;width:14.3px;height:14.3px;background:#fff;box-sizing:border-box;border:1px solid #000;border-radius:1.5px;"></div>
<span class="t" style="left:155.20px;top:969.99px;font-size:11px;line-height:14px;color:#cacaca;letter-spacing:-0.440px;">FX_ROT_LA TURRA</span>
<div style="position:absolute;left:268.4px;top:970.5px;width:12.4px;height:12px;background:#1b1b1b;"></div>
<div style="position:absolute;left:283.4px;top:970.5px;width:12px;height:12px;background:#161616;"></div>
<div style="position:absolute;left:298.2px;top:970.5px;width:12.3px;height:12px;background:#1b1b1b;"></div>
<div style="position:absolute;left:343.3px;top:970.5px;width:12.2px;height:12px;background:#161616;"></div>
<div style="position:absolute;left:358.4px;top:970.5px;width:12.2px;height:12px;background:#161616;"></div>
<div style="position:absolute;left:373.4px;top:970.5px;width:12.2px;height:12px;background:#161616;"></div>
<div style="position:absolute;left:424px;top:970.3px;width:88.8px;height:13.6px;background:#121212;border-radius:3.5px;"></div>
<span class="t" style="left:432.40px;top:970.09px;font-size:11px;line-height:14px;color:#c4c4c4;letter-spacing:-0.174px;">None</span>
<div style="position:absolute;left:0px;top:985.5px;width:533px;height:16.2px;background:#2b2b2b;"></div>
<div style="position:absolute;left:5.4px;top:987.5px;width:12px;height:12px;background:#131313;"></div>
<div style="position:absolute;left:35.2px;top:987.5px;width:12px;height:12px;background:#131313;"></div>
<div style="position:absolute;left:50.4px;top:987.5px;width:12px;height:12px;background:#131313;"></div>
<div style="position:absolute;left:86px;top:987.8px;width:12px;height:12px;background:#e8b4c4;"></div>
<span class="t" style="left:107.20px;top:986.99px;font-size:11px;line-height:14px;color:#c6c6c6;">6</span>
<span class="t" style="left:155.20px;top:986.99px;font-size:11px;line-height:14px;color:#cacaca;letter-spacing:-0.274px;">Shape Layer 8</span>
<div style="position:absolute;left:268.4px;top:987.5px;width:12.4px;height:12px;background:#1b1b1b;"></div>
<div style="position:absolute;left:283.4px;top:987.5px;width:12px;height:12px;background:#343434;"></div>
<div style="position:absolute;left:298.2px;top:987.5px;width:12.3px;height:12px;background:#1b1b1b;"></div>
<div style="position:absolute;left:358.4px;top:987.5px;width:12.2px;height:12px;background:#161616;"></div>
<div style="position:absolute;left:373.4px;top:987.5px;width:12.2px;height:12px;background:#161616;"></div>
<div style="position:absolute;left:424px;top:987.3px;width:88.8px;height:13.6px;background:#121212;border-radius:3.5px;"></div>
<span class="t" style="left:432.40px;top:987.09px;font-size:11px;line-height:14px;color:#c4c4c4;letter-spacing:-0.174px;">None</span>
<div style="position:absolute;left:0px;top:1002.5px;width:533px;height:16.2px;background:#2b2b2b;"></div>
<div style="position:absolute;left:5.4px;top:1004.5px;width:12px;height:12px;background:#131313;"></div>
<div style="position:absolute;left:35.2px;top:1004.5px;width:12px;height:12px;background:#131313;"></div>
<div style="position:absolute;left:50.4px;top:1004.5px;width:12px;height:12px;background:#131313;"></div>
<div style="position:absolute;left:86px;top:1004.8px;width:12px;height:12px;background:#e8b4c4;"></div>
<span class="t" style="left:107.20px;top:1003.99px;font-size:11px;line-height:14px;color:#c6c6c6;">7</span>
<span class="t" style="left:155.20px;top:1003.99px;font-size:11px;line-height:14px;color:#cacaca;letter-spacing:-0.274px;">Shape Layer 7</span>
<div style="position:absolute;left:268.4px;top:1004.5px;width:12.4px;height:12px;background:#1b1b1b;"></div>
<div style="position:absolute;left:283.4px;top:1004.5px;width:12px;height:12px;background:#343434;"></div>
<div style="position:absolute;left:298.2px;top:1004.5px;width:12.3px;height:12px;background:#1b1b1b;"></div>
<div style="position:absolute;left:358.4px;top:1004.5px;width:12.2px;height:12px;background:#161616;"></div>
<div style="position:absolute;left:373.4px;top:1004.5px;width:12.2px;height:12px;background:#161616;"></div>
<div style="position:absolute;left:424px;top:1004.3px;width:88.8px;height:13.6px;background:#121212;border-radius:3.5px;"></div>
<span class="t" style="left:432.40px;top:1004.09px;font-size:11px;line-height:14px;color:#c4c4c4;letter-spacing:-0.174px;">None</span>
<div style="position:absolute;left:0px;top:1019.5px;width:533px;height:16.2px;background:#2b2b2b;"></div>
<div style="position:absolute;left:5.4px;top:1021.5px;width:12px;height:12px;background:#131313;"></div>
<div style="position:absolute;left:35.2px;top:1021.5px;width:12px;height:12px;background:#131313;"></div>
<div style="position:absolute;left:50.4px;top:1021.5px;width:12px;height:12px;background:#131313;"></div>
<div style="position:absolute;left:86px;top:1021.8px;width:12px;height:12px;background:#e8b4c4;"></div>
<span class="t" style="left:107.20px;top:1020.99px;font-size:11px;line-height:14px;color:#c6c6c6;">8</span>
<span class="t" style="left:155.20px;top:1020.99px;font-size:11px;line-height:14px;color:#cacaca;letter-spacing:-0.274px;">Shape Layer 5</span>
<div style="position:absolute;left:268.4px;top:1021.5px;width:12.4px;height:12px;background:#1b1b1b;"></div>
<div style="position:absolute;left:283.4px;top:1021.5px;width:12px;height:12px;background:#343434;"></div>
<div style="position:absolute;left:298.2px;top:1021.5px;width:12.3px;height:12px;background:#1b1b1b;"></div>
<div style="position:absolute;left:358.4px;top:1021.5px;width:12.2px;height:12px;background:#161616;"></div>
<div style="position:absolute;left:373.4px;top:1021.5px;width:12.2px;height:12px;background:#161616;"></div>
<div style="position:absolute;left:424px;top:1021.3px;width:88.8px;height:13.6px;background:#121212;border-radius:3.5px;"></div>
<span class="t" style="left:432.40px;top:1021.09px;font-size:11px;line-height:14px;color:#c4c4c4;letter-spacing:-0.174px;">None</span>
<div style="position:absolute;left:0px;top:1036.5px;width:533px;height:16.2px;background:#2b2b2b;"></div>
<div style="position:absolute;left:5.4px;top:1038.5px;width:12px;height:12px;background:#131313;"></div>
<div style="position:absolute;left:35.2px;top:1038.5px;width:12px;height:12px;background:#131313;"></div>
<div style="position:absolute;left:50.4px;top:1038.5px;width:12px;height:12px;background:#131313;"></div>
<div style="position:absolute;left:86px;top:1038.8px;width:12px;height:12px;background:#e8b4c4;"></div>
<span class="t" style="left:107.20px;top:1037.99px;font-size:11px;line-height:14px;color:#c6c6c6;">9</span>
<span class="t" style="left:155.20px;top:1037.99px;font-size:11px;line-height:14px;color:#cacaca;letter-spacing:-0.230px;">LINE ANI</span>
<div style="position:absolute;left:268.4px;top:1038.5px;width:12.4px;height:12px;background:#1b1b1b;"></div>
<div style="position:absolute;left:283.4px;top:1038.5px;width:12px;height:12px;background:#343434;"></div>
<div style="position:absolute;left:298.2px;top:1038.5px;width:12.3px;height:12px;background:#1b1b1b;"></div>
<div style="position:absolute;left:313.3px;top:1038.5px;width:12.3px;height:12px;background:#1b1b1b;"></div>
<span class="t" style="left:313.80px;top:1036.67px;font-size:12.5px;line-height:16px;color:#c4c4c4;font-style:italic;">fx</span>
<div style="position:absolute;left:343.3px;top:1038.5px;width:12.2px;height:12px;background:#161616;"></div>
<div style="position:absolute;left:358.4px;top:1038.5px;width:12.2px;height:12px;background:#161616;"></div>
<div style="position:absolute;left:373.4px;top:1038.5px;width:12.2px;height:12px;background:#161616;"></div>
<div style="position:absolute;left:424px;top:1038.3px;width:88.8px;height:13.6px;background:#121212;border-radius:3.5px;"></div>
<span class="t" style="left:432.40px;top:1038.09px;font-size:11px;line-height:14px;color:#c4c4c4;letter-spacing:-0.174px;">None</span>
<div style="position:absolute;left:0px;top:1053.5px;width:533px;height:16.2px;background:#2b2b2b;"></div>
<div style="position:absolute;left:5.4px;top:1055.5px;width:12px;height:12px;background:#131313;"></div>
<div style="position:absolute;left:35.2px;top:1055.5px;width:12px;height:12px;background:#131313;"></div>
<div style="position:absolute;left:50.4px;top:1055.5px;width:12px;height:12px;background:#131313;"></div>
<div style="position:absolute;left:86px;top:1055.8px;width:12px;height:12px;background:#e8b4c4;"></div>
<span class="t" style="left:107.20px;top:1054.99px;font-size:11px;line-height:14px;color:#c6c6c6;">10</span>
<span class="t" style="left:155.20px;top:1054.99px;font-size:11px;line-height:14px;color:#cacaca;letter-spacing:-0.230px;">LINE ANI</span>
<div style="position:absolute;left:268.4px;top:1055.5px;width:12.4px;height:12px;background:#1b1b1b;"></div>
<div style="position:absolute;left:283.4px;top:1055.5px;width:12px;height:12px;background:#343434;"></div>
<div style="position:absolute;left:298.2px;top:1055.5px;width:12.3px;height:12px;background:#1b1b1b;"></div>
<div style="position:absolute;left:313.3px;top:1055.5px;width:12.3px;height:12px;background:#1b1b1b;"></div>
<span class="t" style="left:313.80px;top:1053.67px;font-size:12.5px;line-height:16px;color:#c4c4c4;font-style:italic;">fx</span>
<div style="position:absolute;left:343.3px;top:1055.5px;width:12.2px;height:12px;background:#161616;"></div>
<div style="position:absolute;left:358.4px;top:1055.5px;width:12.2px;height:12px;background:#161616;"></div>
<div style="position:absolute;left:373.4px;top:1055.5px;width:12.2px;height:12px;background:#161616;"></div>
<div style="position:absolute;left:424px;top:1055.3px;width:88.8px;height:13.6px;background:#121212;border-radius:3.5px;"></div>
<span class="t" style="left:432.40px;top:1055.09px;font-size:11px;line-height:14px;color:#c4c4c4;letter-spacing:-0.174px;">None</span>
<div style="position:absolute;left:0px;top:1070.5px;width:533px;height:16.2px;background:#2b2b2b;"></div>
<div style="position:absolute;left:5.4px;top:1072.5px;width:12px;height:12px;background:#131313;"></div>
<div style="position:absolute;left:35.2px;top:1072.5px;width:12px;height:12px;background:#131313;"></div>
<div style="position:absolute;left:50.4px;top:1072.5px;width:12px;height:12px;background:#131313;"></div>
<div style="position:absolute;left:86px;top:1072.8px;width:12px;height:12px;background:#e8b4c4;"></div>
<span class="t" style="left:107.20px;top:1071.99px;font-size:11px;line-height:14px;color:#c6c6c6;">11</span>
<span class="t" style="left:155.20px;top:1071.99px;font-size:11px;line-height:14px;color:#cacaca;letter-spacing:-0.230px;">LINE ANI</span>
<div style="position:absolute;left:268.4px;top:1072.5px;width:12.4px;height:12px;background:#1b1b1b;"></div>
<div style="position:absolute;left:283.4px;top:1072.5px;width:12px;height:12px;background:#343434;"></div>
<div style="position:absolute;left:298.2px;top:1072.5px;width:12.3px;height:12px;background:#1b1b1b;"></div>
<div style="position:absolute;left:313.3px;top:1072.5px;width:12.3px;height:12px;background:#1b1b1b;"></div>
<span class="t" style="left:313.80px;top:1070.67px;font-size:12.5px;line-height:16px;color:#c4c4c4;font-style:italic;">fx</span>
<div style="position:absolute;left:343.3px;top:1072.5px;width:12.2px;height:12px;background:#161616;"></div>
<div style="position:absolute;left:358.4px;top:1072.5px;width:12.2px;height:12px;background:#161616;"></div>
<div style="position:absolute;left:373.4px;top:1072.5px;width:12.2px;height:12px;background:#161616;"></div>
<div style="position:absolute;left:424px;top:1072.3px;width:88.8px;height:13.6px;background:#121212;border-radius:3.5px;"></div>
<span class="t" style="left:432.40px;top:1072.09px;font-size:11px;line-height:14px;color:#c4c4c4;letter-spacing:-0.174px;">None</span>
<div style="position:absolute;left:0px;top:1087.5px;width:533px;height:16.2px;background:#2b2b2b;"></div>
<div style="position:absolute;left:5.4px;top:1089.5px;width:12px;height:12px;background:#131313;"></div>
<div style="position:absolute;left:35.2px;top:1089.5px;width:12px;height:12px;background:#131313;"></div>
<div style="position:absolute;left:50.4px;top:1089.5px;width:12px;height:12px;background:#131313;"></div>
<div style="position:absolute;left:86px;top:1089.8px;width:12px;height:12px;background:#e8b4c4;"></div>
<span class="t" style="left:107.20px;top:1088.99px;font-size:11px;line-height:14px;color:#c6c6c6;">12</span>
<span class="t" style="left:155.20px;top:1088.99px;font-size:11px;line-height:14px;color:#cacaca;letter-spacing:-0.230px;">LINE ANI</span>
<div style="position:absolute;left:268.4px;top:1089.5px;width:12.4px;height:12px;background:#1b1b1b;"></div>
<div style="position:absolute;left:283.4px;top:1089.5px;width:12px;height:12px;background:#343434;"></div>
<div style="position:absolute;left:298.2px;top:1089.5px;width:12.3px;height:12px;background:#1b1b1b;"></div>
<div style="position:absolute;left:313.3px;top:1089.5px;width:12.3px;height:12px;background:#1b1b1b;"></div>
<span class="t" style="left:313.80px;top:1087.67px;font-size:12.5px;line-height:16px;color:#c4c4c4;font-style:italic;">fx</span>
<div style="position:absolute;left:343.3px;top:1089.5px;width:12.2px;height:12px;background:#161616;"></div>
<div style="position:absolute;left:358.4px;top:1089.5px;width:12.2px;height:12px;background:#161616;"></div>
<div style="position:absolute;left:373.4px;top:1089.5px;width:12.2px;height:12px;background:#161616;"></div>
<div style="position:absolute;left:424px;top:1089.3px;width:88.8px;height:13.6px;background:#121212;border-radius:3.5px;"></div>
<span class="t" style="left:432.40px;top:1089.09px;font-size:11px;line-height:14px;color:#c4c4c4;letter-spacing:-0.174px;">None</span>
<div style="position:absolute;left:0px;top:1104.5px;width:533px;height:16.2px;background:#2b2b2b;"></div>
<div style="position:absolute;left:5.4px;top:1106.5px;width:12px;height:12px;background:#131313;"></div>
<div style="position:absolute;left:35.2px;top:1106.5px;width:12px;height:12px;background:#131313;"></div>
<div style="position:absolute;left:50.4px;top:1106.5px;width:12px;height:12px;background:#131313;"></div>
<div style="position:absolute;left:86px;top:1106.8px;width:12px;height:12px;background:#f36ccb;"></div>
<span class="t" style="left:107.20px;top:1105.99px;font-size:11px;line-height:14px;color:#c6c6c6;">13</span>
<span class="t" style="left:155.20px;top:1105.99px;font-size:11px;line-height:14px;color:#cacaca;letter-spacing:-0.457px;">INTRO BLOCK 4</span>
<div style="position:absolute;left:268.4px;top:1106.5px;width:12.4px;height:12px;background:#1b1b1b;"></div>
<div style="position:absolute;left:283.4px;top:1106.5px;width:12px;height:12px;background:#343434;"></div>
<div style="position:absolute;left:298.2px;top:1106.5px;width:12.3px;height:12px;background:#1b1b1b;"></div>
<div style="position:absolute;left:358.4px;top:1106.5px;width:12.2px;height:12px;background:#161616;"></div>
<div style="position:absolute;left:373.4px;top:1106.5px;width:12.2px;height:12px;background:#161616;"></div>
<div style="position:absolute;left:424px;top:1106.3px;width:88.8px;height:13.6px;background:#121212;border-radius:3.5px;"></div>
<span class="t" style="left:432.40px;top:1106.09px;font-size:11px;line-height:14px;color:#c4c4c4;letter-spacing:-0.174px;">None</span>
<div style="position:absolute;left:0px;top:1121.5px;width:533px;height:16.2px;background:#2b2b2b;"></div>
<div style="position:absolute;left:5.4px;top:1123.5px;width:12px;height:12px;background:#131313;"></div>
<div style="position:absolute;left:35.2px;top:1123.5px;width:12px;height:12px;background:#131313;"></div>
<div style="position:absolute;left:50.4px;top:1123.5px;width:12px;height:12px;background:#131313;"></div>
<div style="position:absolute;left:86px;top:1123.8px;width:12px;height:12px;background:#f36ccb;"></div>
<span class="t" style="left:107.20px;top:1122.99px;font-size:11px;line-height:14px;color:#c6c6c6;">14</span>
<span class="t" style="left:155.20px;top:1122.99px;font-size:11px;line-height:14px;color:#cacaca;letter-spacing:-0.480px;">INTRO BLOCK 3</span>
<div style="position:absolute;left:268.4px;top:1123.5px;width:12.4px;height:12px;background:#1b1b1b;"></div>
<div style="position:absolute;left:283.4px;top:1123.5px;width:12px;height:12px;background:#343434;"></div>
<div style="position:absolute;left:298.2px;top:1123.5px;width:12.3px;height:12px;background:#1b1b1b;"></div>
<div style="position:absolute;left:358.4px;top:1123.5px;width:12.2px;height:12px;background:#161616;"></div>
<div style="position:absolute;left:373.4px;top:1123.5px;width:12.2px;height:12px;background:#161616;"></div>
<div style="position:absolute;left:424px;top:1123.3px;width:88.8px;height:13.6px;background:#121212;border-radius:3.5px;"></div>
<span class="t" style="left:432.40px;top:1123.09px;font-size:11px;line-height:14px;color:#c4c4c4;letter-spacing:-0.174px;">None</span>
<div style="position:absolute;left:0px;top:1138.5px;width:533px;height:16.2px;background:#2b2b2b;"></div>
<div style="position:absolute;left:5.4px;top:1140.5px;width:12px;height:12px;background:#131313;"></div>
<div style="position:absolute;left:35.2px;top:1140.5px;width:12px;height:12px;background:#131313;"></div>
<div style="position:absolute;left:50.4px;top:1140.5px;width:12px;height:12px;background:#131313;"></div>
<div style="position:absolute;left:86px;top:1140.8px;width:12px;height:12px;background:#f36ccb;"></div>
<span class="t" style="left:107.20px;top:1139.99px;font-size:11px;line-height:14px;color:#c6c6c6;">15</span>
<span class="t" style="left:155.20px;top:1139.99px;font-size:11px;line-height:14px;color:#cacaca;letter-spacing:-0.480px;">INTRO BLOCK 2</span>
<div style="position:absolute;left:268.4px;top:1140.5px;width:12.4px;height:12px;background:#1b1b1b;"></div>
<div style="position:absolute;left:283.4px;top:1140.5px;width:12px;height:12px;background:#343434;"></div>
<div style="position:absolute;left:298.2px;top:1140.5px;width:12.3px;height:12px;background:#1b1b1b;"></div>
<div style="position:absolute;left:358.4px;top:1140.5px;width:12.2px;height:12px;background:#161616;"></div>
<div style="position:absolute;left:373.4px;top:1140.5px;width:12.2px;height:12px;background:#161616;"></div>
<div style="position:absolute;left:424px;top:1140.3px;width:88.8px;height:13.6px;background:#121212;border-radius:3.5px;"></div>
<span class="t" style="left:432.40px;top:1140.09px;font-size:11px;line-height:14px;color:#c4c4c4;letter-spacing:-0.174px;">None</span>
<div style="position:absolute;left:0px;top:1155.5px;width:533px;height:16.2px;background:#2b2b2b;"></div>
<div style="position:absolute;left:5.4px;top:1157.5px;width:12px;height:12px;background:#131313;"></div>
<div style="position:absolute;left:35.2px;top:1157.5px;width:12px;height:12px;background:#131313;"></div>
<div style="position:absolute;left:50.4px;top:1157.5px;width:12px;height:12px;background:#131313;"></div>
<div style="position:absolute;left:86px;top:1157.8px;width:12px;height:12px;background:#f36ccb;"></div>
<span class="t" style="left:107.20px;top:1156.99px;font-size:11px;line-height:14px;color:#c6c6c6;">16</span>
<span class="t" style="left:155.20px;top:1156.99px;font-size:11px;line-height:14px;color:#cacaca;letter-spacing:-0.496px;">INTRO BLOCK 1</span>
<div style="position:absolute;left:268.4px;top:1157.5px;width:12.4px;height:12px;background:#1b1b1b;"></div>
<div style="position:absolute;left:283.4px;top:1157.5px;width:12px;height:12px;background:#343434;"></div>
<div style="position:absolute;left:298.2px;top:1157.5px;width:12.3px;height:12px;background:#1b1b1b;"></div>
<div style="position:absolute;left:358.4px;top:1157.5px;width:12.2px;height:12px;background:#161616;"></div>
<div style="position:absolute;left:373.4px;top:1157.5px;width:12.2px;height:12px;background:#161616;"></div>
<div style="position:absolute;left:424px;top:1157.3px;width:88.8px;height:13.6px;background:#121212;border-radius:3.5px;"></div>
<span class="t" style="left:432.40px;top:1157.09px;font-size:11px;line-height:14px;color:#c4c4c4;letter-spacing:-0.174px;">None</span>
<div style="position:absolute;left:0px;top:1172.5px;width:533px;height:16.2px;background:#2b2b2b;"></div>
<div style="position:absolute;left:5.4px;top:1174.5px;width:12px;height:12px;background:#131313;"></div>
<div style="position:absolute;left:35.2px;top:1174.5px;width:12px;height:12px;background:#131313;"></div>
<div style="position:absolute;left:50.4px;top:1174.5px;width:12px;height:12px;background:#131313;"></div>
<div style="position:absolute;left:86px;top:1174.8px;width:12px;height:12px;background:#f36ccb;"></div>
<span class="t" style="left:107.20px;top:1173.99px;font-size:11px;line-height:14px;color:#c6c6c6;">17</span>
<span class="t" style="left:155.20px;top:1173.99px;font-size:11px;line-height:14px;color:#cacaca;letter-spacing:-0.355px;">LINE 5</span>
<div style="position:absolute;left:268.4px;top:1174.5px;width:12.4px;height:12px;background:#1b1b1b;"></div>
<div style="position:absolute;left:283.4px;top:1174.5px;width:12px;height:12px;background:#343434;"></div>
<div style="position:absolute;left:298.2px;top:1174.5px;width:12.3px;height:12px;background:#1b1b1b;"></div>
<div style="position:absolute;left:313.3px;top:1174.5px;width:12.3px;height:12px;background:#1b1b1b;"></div>
<span class="t" style="left:313.80px;top:1172.67px;font-size:12.5px;line-height:16px;color:#c4c4c4;font-style:italic;">fx</span>
<div style="position:absolute;left:358.4px;top:1174.5px;width:12.2px;height:12px;background:#161616;"></div>
<div style="position:absolute;left:373.4px;top:1174.5px;width:12.2px;height:12px;background:#161616;"></div>
<div style="position:absolute;left:424px;top:1174.3px;width:88.8px;height:13.6px;background:#121212;border-radius:3.5px;"></div>
<span class="t" style="left:432.40px;top:1174.09px;font-size:11px;line-height:14px;color:#c4c4c4;letter-spacing:-0.174px;">None</span>
<div style="position:absolute;left:0px;top:1189.5px;width:533px;height:16.2px;background:#2b2b2b;"></div>
<div style="position:absolute;left:5.4px;top:1191.5px;width:12px;height:12px;background:#131313;"></div>
<div style="position:absolute;left:35.2px;top:1191.5px;width:12px;height:12px;background:#131313;"></div>
<div style="position:absolute;left:50.4px;top:1191.5px;width:12px;height:12px;background:#131313;"></div>
<div style="position:absolute;left:86px;top:1191.8px;width:12px;height:12px;background:#f36ccb;"></div>
<span class="t" style="left:107.20px;top:1190.99px;font-size:11px;line-height:14px;color:#c6c6c6;">18</span>
<span class="t" style="left:155.20px;top:1190.99px;font-size:11px;line-height:14px;color:#cacaca;letter-spacing:-0.355px;">LINE 2</span>
<div style="position:absolute;left:268.4px;top:1191.5px;width:12.4px;height:12px;background:#1b1b1b;"></div>
<div style="position:absolute;left:283.4px;top:1191.5px;width:12px;height:12px;background:#343434;"></div>
<div style="position:absolute;left:298.2px;top:1191.5px;width:12.3px;height:12px;background:#1b1b1b;"></div>
<div style="position:absolute;left:313.3px;top:1191.5px;width:12.3px;height:12px;background:#1b1b1b;"></div>
<span class="t" style="left:313.80px;top:1189.67px;font-size:12.5px;line-height:16px;color:#c4c4c4;font-style:italic;">fx</span>
<div style="position:absolute;left:358.4px;top:1191.5px;width:12.2px;height:12px;background:#161616;"></div>
<div style="position:absolute;left:373.4px;top:1191.5px;width:12.2px;height:12px;background:#161616;"></div>
<div style="position:absolute;left:424px;top:1191.3px;width:88.8px;height:13.6px;background:#121212;border-radius:3.5px;"></div>
<span class="t" style="left:432.40px;top:1191.09px;font-size:11px;line-height:14px;color:#c4c4c4;letter-spacing:-0.174px;">None</span>
<div style="position:absolute;left:0px;top:1206.5px;width:533px;height:16.2px;background:#2b2b2b;"></div>
<div style="position:absolute;left:5.4px;top:1208.5px;width:12px;height:12px;background:#131313;"></div>
<div style="position:absolute;left:35.2px;top:1208.5px;width:12px;height:12px;background:#131313;"></div>
<div style="position:absolute;left:50.4px;top:1208.5px;width:12px;height:12px;background:#131313;"></div>
<div style="position:absolute;left:86px;top:1208.8px;width:12px;height:12px;background:#f36ccb;"></div>
<span class="t" style="left:107.20px;top:1207.99px;font-size:11px;line-height:14px;color:#c6c6c6;">19</span>
<span class="t" style="left:155.20px;top:1207.99px;font-size:11px;line-height:14px;color:#cacaca;letter-spacing:-0.322px;">LINE 6</span>
<div style="position:absolute;left:268.4px;top:1208.5px;width:12.4px;height:12px;background:#1b1b1b;"></div>
<div style="position:absolute;left:283.4px;top:1208.5px;width:12px;height:12px;background:#343434;"></div>
<div style="position:absolute;left:298.2px;top:1208.5px;width:12.3px;height:12px;background:#1b1b1b;"></div>
<div style="position:absolute;left:313.3px;top:1208.5px;width:12.3px;height:12px;background:#1b1b1b;"></div>
<span class="t" style="left:313.80px;top:1206.67px;font-size:12.5px;line-height:16px;color:#c4c4c4;font-style:italic;">fx</span>
<div style="position:absolute;left:358.4px;top:1208.5px;width:12.2px;height:12px;background:#161616;"></div>
<div style="position:absolute;left:373.4px;top:1208.5px;width:12.2px;height:12px;background:#161616;"></div>
<div style="position:absolute;left:424px;top:1208.3px;width:88.8px;height:13.6px;background:#121212;border-radius:3.5px;"></div>
<span class="t" style="left:432.40px;top:1208.09px;font-size:11px;line-height:14px;color:#c4c4c4;letter-spacing:-0.174px;">None</span>
<div style="position:absolute;left:0px;top:1223.5px;width:533px;height:16.2px;background:#2b2b2b;"></div>
<div style="position:absolute;left:5.4px;top:1225.5px;width:12px;height:12px;background:#131313;"></div>
<div style="position:absolute;left:35.2px;top:1225.5px;width:12px;height:12px;background:#131313;"></div>
<div style="position:absolute;left:50.4px;top:1225.5px;width:12px;height:12px;background:#131313;"></div>
<div style="position:absolute;left:86px;top:1225.8px;width:12px;height:12px;background:#f36ccb;"></div>
<span class="t" style="left:107.20px;top:1224.99px;font-size:11px;line-height:14px;color:#c6c6c6;">20</span>
<span class="t" style="left:155.20px;top:1224.99px;font-size:11px;line-height:14px;color:#cacaca;letter-spacing:-0.414px;">LINE</span>
<div style="position:absolute;left:268.4px;top:1225.5px;width:12.4px;height:12px;background:#1b1b1b;"></div>
<div style="position:absolute;left:283.4px;top:1225.5px;width:12px;height:12px;background:#343434;"></div>
<div style="position:absolute;left:298.2px;top:1225.5px;width:12.3px;height:12px;background:#1b1b1b;"></div>
<div style="position:absolute;left:313.3px;top:1225.5px;width:12.3px;height:12px;background:#1b1b1b;"></div>
<span class="t" style="left:313.80px;top:1223.67px;font-size:12.5px;line-height:16px;color:#c4c4c4;font-style:italic;">fx</span>
<div style="position:absolute;left:358.4px;top:1225.5px;width:12.2px;height:12px;background:#161616;"></div>
<div style="position:absolute;left:373.4px;top:1225.5px;width:12.2px;height:12px;background:#161616;"></div>
<div style="position:absolute;left:424px;top:1225.3px;width:88.8px;height:13.6px;background:#121212;border-radius:3.5px;"></div>
<span class="t" style="left:432.40px;top:1225.09px;font-size:11px;line-height:14px;color:#c4c4c4;letter-spacing:-0.174px;">None</span>
<div style="position:absolute;left:0px;top:1240.5px;width:533px;height:16.2px;background:#2b2b2b;"></div>
<div style="position:absolute;left:5.4px;top:1242.5px;width:12px;height:12px;background:#131313;"></div>
<div style="position:absolute;left:35.2px;top:1242.5px;width:12px;height:12px;background:#131313;"></div>
<div style="position:absolute;left:50.4px;top:1242.5px;width:12px;height:12px;background:#131313;"></div>
<div style="position:absolute;left:86px;top:1242.8px;width:12px;height:12px;background:#f36ccb;"></div>
<span class="t" style="left:107.20px;top:1241.99px;font-size:11px;line-height:14px;color:#c6c6c6;">21</span>
<span class="t" style="left:155.20px;top:1241.99px;font-size:11px;line-height:14px;color:#cacaca;letter-spacing:-0.355px;">LINE 3</span>
<div style="position:absolute;left:268.4px;top:1242.5px;width:12.4px;height:12px;background:#1b1b1b;"></div>
<div style="position:absolute;left:283.4px;top:1242.5px;width:12px;height:12px;background:#343434;"></div>
<div style="position:absolute;left:298.2px;top:1242.5px;width:12.3px;height:12px;background:#1b1b1b;"></div>
<div style="position:absolute;left:313.3px;top:1242.5px;width:12.3px;height:12px;background:#1b1b1b;"></div>
<span class="t" style="left:313.80px;top:1240.67px;font-size:12.5px;line-height:16px;color:#c4c4c4;font-style:italic;">fx</span>
<div style="position:absolute;left:358.4px;top:1242.5px;width:12.2px;height:12px;background:#161616;"></div>
<div style="position:absolute;left:373.4px;top:1242.5px;width:12.2px;height:12px;background:#161616;"></div>
<div style="position:absolute;left:424px;top:1242.3px;width:88.8px;height:13.6px;background:#121212;border-radius:3.5px;"></div>
<span class="t" style="left:432.40px;top:1242.09px;font-size:11px;line-height:14px;color:#c4c4c4;letter-spacing:-0.174px;">None</span>
<div style="position:absolute;left:0px;top:1257.5px;width:533px;height:16.2px;background:#2b2b2b;"></div>
<div style="position:absolute;left:5.4px;top:1259.5px;width:12px;height:12px;background:#131313;"></div>
<div style="position:absolute;left:35.2px;top:1259.5px;width:12px;height:12px;background:#131313;"></div>
<div style="position:absolute;left:50.4px;top:1259.5px;width:12px;height:12px;background:#131313;"></div>
<div style="position:absolute;left:86px;top:1259.8px;width:12px;height:12px;background:#f36ccb;"></div>
<span class="t" style="left:107.20px;top:1258.99px;font-size:11px;line-height:14px;color:#c6c6c6;">22</span>
<span class="t" style="left:155.20px;top:1258.99px;font-size:11px;line-height:14px;color:#cacaca;letter-spacing:-0.355px;">LINE 7</span>
<div style="position:absolute;left:268.4px;top:1259.5px;width:12.4px;height:12px;background:#1b1b1b;"></div>
<div style="position:absolute;left:283.4px;top:1259.5px;width:12px;height:12px;background:#343434;"></div>
<div style="position:absolute;left:298.2px;top:1259.5px;width:12.3px;height:12px;background:#1b1b1b;"></div>
<div style="position:absolute;left:313.3px;top:1259.5px;width:12.3px;height:12px;background:#1b1b1b;"></div>
<span class="t" style="left:313.80px;top:1257.67px;font-size:12.5px;line-height:16px;color:#c4c4c4;font-style:italic;">fx</span>
<div style="position:absolute;left:358.4px;top:1259.5px;width:12.2px;height:12px;background:#161616;"></div>
<div style="position:absolute;left:373.4px;top:1259.5px;width:12.2px;height:12px;background:#161616;"></div>
<div style="position:absolute;left:424px;top:1259.3px;width:88.8px;height:13.6px;background:#121212;border-radius:3.5px;"></div>
<span class="t" style="left:432.40px;top:1259.09px;font-size:11px;line-height:14px;color:#c4c4c4;letter-spacing:-0.174px;">None</span>
<div style="position:absolute;left:0px;top:1274.5px;width:533px;height:16.2px;background:#2b2b2b;"></div>
<div style="position:absolute;left:5.4px;top:1276.5px;width:12px;height:12px;background:#131313;"></div>
<div style="position:absolute;left:35.2px;top:1276.5px;width:12px;height:12px;background:#131313;"></div>
<div style="position:absolute;left:50.4px;top:1276.5px;width:12px;height:12px;background:#131313;"></div>
<div style="position:absolute;left:86px;top:1276.8px;width:12px;height:12px;background:#f36ccb;"></div>
<span class="t" style="left:107.20px;top:1275.99px;font-size:11px;line-height:14px;color:#c6c6c6;">23</span>
<span class="t" style="left:155.20px;top:1275.99px;font-size:11px;line-height:14px;color:#cacaca;letter-spacing:-0.414px;">LINE</span>
<div style="position:absolute;left:268.4px;top:1276.5px;width:12.4px;height:12px;background:#1b1b1b;"></div>
<div style="position:absolute;left:283.4px;top:1276.5px;width:12px;height:12px;background:#343434;"></div>
<div style="position:absolute;left:298.2px;top:1276.5px;width:12.3px;height:12px;background:#1b1b1b;"></div>
<div style="position:absolute;left:313.3px;top:1276.5px;width:12.3px;height:12px;background:#1b1b1b;"></div>
<span class="t" style="left:313.80px;top:1274.67px;font-size:12.5px;line-height:16px;color:#c4c4c4;font-style:italic;">fx</span>
<div style="position:absolute;left:358.4px;top:1276.5px;width:12.2px;height:12px;background:#161616;"></div>
<div style="position:absolute;left:373.4px;top:1276.5px;width:12.2px;height:12px;background:#161616;"></div>
<div style="position:absolute;left:424px;top:1276.3px;width:88.8px;height:13.6px;background:#121212;border-radius:3.5px;"></div>
<span class="t" style="left:432.40px;top:1276.09px;font-size:11px;line-height:14px;color:#c4c4c4;letter-spacing:-0.174px;">None</span>
<div style="position:absolute;left:0px;top:1291.5px;width:533px;height:16.2px;background:#2b2b2b;"></div>
<div style="position:absolute;left:5.4px;top:1293.5px;width:12px;height:12px;background:#131313;"></div>
<div style="position:absolute;left:35.2px;top:1293.5px;width:12px;height:12px;background:#131313;"></div>
<div style="position:absolute;left:50.4px;top:1293.5px;width:12px;height:12px;background:#131313;"></div>
<div style="position:absolute;left:86px;top:1293.8px;width:12px;height:12px;background:#f36ccb;"></div>
<span class="t" style="left:107.20px;top:1292.99px;font-size:11px;line-height:14px;color:#c6c6c6;">24</span>
<span class="t" style="left:155.20px;top:1292.99px;font-size:11px;line-height:14px;color:#cacaca;letter-spacing:-0.649px;">STAR 4</span>
<div style="position:absolute;left:268.4px;top:1293.5px;width:12.4px;height:12px;background:#1b1b1b;"></div>
<div style="position:absolute;left:283.4px;top:1293.5px;width:12px;height:12px;background:#343434;"></div>
<div style="position:absolute;left:298.2px;top:1293.5px;width:12.3px;height:12px;background:#1b1b1b;"></div>
<div style="position:absolute;left:313.3px;top:1293.5px;width:12.3px;height:12px;background:#1b1b1b;"></div>
<span class="t" style="left:313.80px;top:1291.67px;font-size:12.5px;line-height:16px;color:#c4c4c4;font-style:italic;">fx</span>
<div style="position:absolute;left:358.4px;top:1293.5px;width:12.2px;height:12px;background:#161616;"></div>
<div style="position:absolute;left:373.4px;top:1293.5px;width:12.2px;height:12px;background:#161616;"></div>
<div style="position:absolute;left:424px;top:1293.3px;width:88.8px;height:13.6px;background:#121212;border-radius:3.5px;"></div>
<span class="t" style="left:432.40px;top:1293.09px;font-size:11px;line-height:14px;color:#c4c4c4;letter-spacing:-0.174px;">None</span>
<div style="position:absolute;left:0px;top:1308.5px;width:533px;height:4px;background:#2b2b2b;"></div>
<div style="position:absolute;left:86px;top:1310.8px;width:12px;height:2px;background:#f36ccb;"></div>
<span class="t" style="left:44.60px;top:1315.19px;font-size:11px;line-height:14px;color:#b0b0b0;letter-spacing:2.326px;">{}</span>
<span class="t" style="left:104.30px;top:1314.79px;font-size:11px;line-height:14px;color:#b4b4b4;letter-spacing:-0.104px;">Frame Render Time:</span>
<span class="t" style="left:210.00px;top:1314.79px;font-size:11px;line-height:14px;color:#5fcf6a;letter-spacing:-0.159px;font-weight:bold;">54ms</span>
<span class="t" style="left:271.60px;top:1314.79px;font-size:11px;line-height:14px;color:#b4b4b4;letter-spacing:-0.047px;">Toggle Switches / Modes</span>
<svg style="position:absolute;left:0;top:0" width="2454" height="1324"><path d="M1076.3,832.6L1081.1000000000001,837.4M1081.1000000000001,832.6L1076.3,837.4" stroke="#8a8a8a" stroke-width="1.2" fill="none"/><line x1="1244.8" x2="1253.2" y1="831.6" y2="831.6" stroke="#d8d8d8" stroke-width="1.1"/><line x1="1244.8" x2="1253.2" y1="834.7" y2="834.7" stroke="#d8d8d8" stroke-width="1.1"/><line x1="1244.8" x2="1253.2" y1="837.8000000000001" y2="837.8000000000001" stroke="#d8d8d8" stroke-width="1.1"/><circle cx="111.5" cy="861.8" r="3.6" fill="none" stroke="#b0b0b0" stroke-width="1.2"/><line x1="114.1" y1="864.5" x2="117.1" y2="867.6999999999999" stroke="#b0b0b0" stroke-width="1.3"/><path d="M117.9,863.6999999999999 l2.3,2.3 l2.3,-2.3" fill="none" stroke="#b0b0b0" stroke-width="1.2"/><rect x="408" y="859.3" width="6" height="2.5" rx="1.2" fill="#c0c0c0"/><path d="M414,860.5 H419.4 M416.6,860.5 V866 H419.4" fill="none" stroke="#c0c0c0" stroke-width="1.1"/><rect x="419.4" y="859" width="3.8" height="3" fill="#c0c0c0"/><rect x="419.4" y="864.4" width="3.8" height="3" fill="#c0c0c0"/><path d="M420.6,868.6 h4.6 l-2.3,2.6z" fill="#c0c0c0"/><rect x="432" y="864.6" width="16" height="5.4" fill="#3c3c3c"/><path d="M433.7,864.2 Q433.7,857.4 440.2,857.4 Q446.8,857.4 446.8,864.2 l-1.2,-1 l-1.4,1 l-1.4,-1 l-1.3,1 h-2.6 l-1.3,-1 l-1.4,1 l-1.4,-1z" fill="#c0c0c0"/><circle cx="438.3" cy="861" r="1" fill="#1d1d1d"/><circle cx="442" cy="861" r="1" fill="#1d1d1d"/><rect x="438.8" y="863.6" width="2.7" height="5.4" rx="1.2" fill="#c0c0c0"/><path d="M461,860.4 H457.2 V870.6 H467 V868.4" fill="none" stroke="#c0c0c0" stroke-width="1.2"/><rect x="458" y="862" width="1.3" height="1.3" fill="#c0c0c0"/><rect x="458" y="864.4" width="1.3" height="1.3" fill="#c0c0c0"/><rect x="458" y="866.8" width="1.3" height="1.3" fill="#c0c0c0"/><rect x="458" y="869" width="1.3" height="1.3" fill="#c0c0c0"/><rect x="461.3" y="857.2" width="9.8" height="10.8" fill="#c0c0c0"/><rect x="462.2" y="858.2" width="1.1" height="1.1" rx="0.5" fill="#1d1d1d"/><rect x="462.2" y="860.2" width="1.1" height="1.1" rx="0.5" fill="#1d1d1d"/><rect x="462.2" y="862.2" width="1.1" height="1.1" rx="0.5" fill="#1d1d1d"/><rect x="462.2" y="864.2" width="1.1" height="1.1" rx="0.5" fill="#1d1d1d"/><rect x="462.2" y="866.2" width="1.1" height="1.1" rx="0.5" fill="#1d1d1d"/><rect x="469.1" y="858.2" width="1.1" height="1.1" rx="0.5" fill="#1d1d1d"/><rect x="469.1" y="860.2" width="1.1" height="1.1" rx="0.5" fill="#1d1d1d"/><rect x="469.1" y="862.2" width="1.1" height="1.1" rx="0.5" fill="#1d1d1d"/><rect x="469.1" y="864.2" width="1.1" height="1.1" rx="0.5" fill="#1d1d1d"/><rect x="469.1" y="866.2" width="1.1" height="1.1" rx="0.5" fill="#1d1d1d"/><rect x="464.2" y="862" width="4" height="1.3" fill="#1d1d1d"/><path d="M464.2,857.2v10.8M468.2,857.2v10.8" stroke="#9a9a9a" stroke-width="0.5"/><circle cx="485.6" cy="866.8" r="4.6" fill="#3e3e3e" stroke="#d4d4d4" stroke-width="1.1"/><circle cx="487.8" cy="864.5" r="4.7" fill="#3e3e3e" stroke="#d4d4d4" stroke-width="1.1"/><circle cx="490.1" cy="862" r="4.9" fill="#5c5c5c" stroke="#dcdcdc" stroke-width="1.2"/><rect x="505.3" y="859.2" width="14" height="11.2" fill="none" stroke="#c0c0c0" stroke-width="1.2"/><path d="M507.5,856.4v2.4M510.6,856.4v2.4M513.5,856.4v2.4M516.4,856.4v2.4M503.4,860.6h1.6M503.4,864.8h1.6M503.4,868.4h1.6" stroke="#c0c0c0" stroke-width="1.1"/><path d="M507.2,861.6 C512,861.6 512.4,867.6 517.6,867.6" fill="none" stroke="#c0c0c0" stroke-width="1.2"/><path d="M892.6,867 h11.6 v6.5 l-5.8,6.2 l-5.8,-6.2z" fill="#3e8ef0"/><path d="M896.2,872.3 h4.4 M898.4,872.3 v4" stroke="#17345c" stroke-width="1"/><path d="M2119.6,883.6 h11.6 v8.6 l-5.8,5.4 l-5.8,-5.4z" fill="#a8a8a8"/><path d="M2117.5,910 l5,-5.5 v11z" fill="none" stroke="#b0b0b0" stroke-width="1"/><rect x="2124.5" y="905.5" width="6" height="7.4" fill="#b0b0b0"/><circle cx="2123.4" cy="912.5" r="2.4" fill="#1d1d1d" stroke="#b0b0b0" stroke-width="1"/><path d="M540,1322 l3.2,-3.6 l1.8,1.6 l1.4,-1.2 l2.6,3.2z" fill="#8a8a8a"/><line x1="557" y1="1321" x2="571" y2="1321" stroke="#5a5a5a" stroke-width="1"/><circle cx="580.8" cy="1320.6" r="3.4" fill="#1d1d1d" stroke="#c0c0c0" stroke-width="1.4"/><line x1="590" y1="1321" x2="616" y2="1321" stroke="#5a5a5a" stroke-width="1"/><path d="M620,1324 l6.5,-7 l2.2,2 l2.2,-2.4 l7,7.4z" fill="#9a9a9a"/><path d="M6.4,891.4 Q12,885.0 17.6,891.4 Q12,897.8 6.4,891.4Z" fill="#b4b4b4"/><circle cx="12" cy="891.4" r="2.7" fill="#161616"/><circle cx="12.2" cy="891.6999999999999" r="1.5" fill="#b4b4b4"/><circle cx="11.1" cy="890.5" r="0.9" fill="#161616"/><path d="M21.2,889.4 h2.4 l3.4,-3.4 v10.8 l-3.4,-3.4 h-2.4z" fill="#b0b0b0"/><path d="M28.8,888.4 a3.6,3.6 0 0 1 0,6" fill="none" stroke="#b0b0b0" stroke-width="1.2"/><path d="M30.0,886.1999999999999 a6.2,6.2 0 0 1 0,10.4" fill="none" stroke="#b0b0b0" stroke-width="1.2"/><circle cx="41.9" cy="891.4" r="3.9" fill="#b4b4b4"/><rect x="52.1" y="889.2" width="9.6" height="6.4" rx="0.6" fill="#b0b0b0"/><path d="M54.199999999999996,889.2 v-2 a2.7,2.7 0 0 1 5.4,0 v2" fill="none" stroke="#b0b0b0" stroke-width="1.4"/><rect x="56.199999999999996" y="891" width="1.4" height="2.6" fill="#1d1d1d"/><g transform="translate(88.3,891.3) scale(1.0) rotate(-45)"><path d="M-3.6,-4.2 l3.6,-3.4 l3.6,3.4 v10 h-7.2z" fill="#b0b0b0"/><circle cx="0" cy="-3.6" r="1.1" fill="#1d1d1d"/></g><path d="M270.40000000000003,891.2 a4.2,4.4 0 0 1 8.4,0z" fill="none" stroke="#c0c0c0" stroke-width="1.1"/><path d="M274.6,887.0v8 M268.6,893.2h12 M272.0,893.2v2.2 M277.20000000000005,893.2v2.2 M271.40000000000003,889.6h6.4" stroke="#c0c0c0" stroke-width="1.1" fill="none"/><circle cx="289.6" cy="891.2" r="1.9" fill="none" stroke="#c0c0c0" stroke-width="1.1"/><path d="M292.70,891.20L294.60,891.20M291.79,893.39L293.14,894.74M289.60,894.30L289.60,896.20M287.41,893.39L286.06,894.74M286.50,891.20L284.60,891.20M287.41,889.01L286.06,887.66M289.60,888.10L289.60,886.20M291.79,889.01L293.14,887.66" stroke="#c0c0c0" stroke-width="1.1"/><line x1="300" y1="886.2" x2="309.4" y2="895.6" stroke="#c0c0c0" stroke-width="1.5" stroke-dasharray="2.2 1"/><rect x="328.4" y="886.2" width="12.4" height="10.6" fill="#b0b0b0"/><path d="M330.2,888.0h8.8M330.2,890.0h8.8M330.2,892.8000000000001h8.8M330.2,894.8000000000001h8.8" stroke="#1d1d1d" stroke-width="0.9"/><rect x="330.6" y="890.8000000000001" width="8" height="1.2" fill="#b0b0b0"/><circle cx="347.0" cy="893.8000000000001" r="3.5" fill="#2b2b2b" stroke="#b4b4b4" stroke-width="0.9"/><circle cx="348.6" cy="892.2" r="3.6" fill="#2b2b2b" stroke="#b4b4b4" stroke-width="0.9"/><circle cx="350.90000000000003" cy="889.8000000000001" r="4" fill="#5a5a5a" stroke="#b4b4b4" stroke-width="1"/><circle cx="364.6" cy="891.2" r="4.7" fill="#161616" stroke="#c8c8c8" stroke-width="1.1"/><path d="M367.90000000000003,887.9000000000001 A4.7,4.7 0 0 1 361.3,894.5Z" fill="#c8c8c8"/><path d="M379.6,886.6000000000001 l4.2,2.3 v5 l-4.2,2.4 l-4.2,-2.4 v-5z M375.40000000000003,888.9000000000001 l4.2,2.4 l4.2,-2.4 M379.6,891.3000000000001v5" fill="none" stroke="#c0c0c0" stroke-width="1.05" stroke-linejoin="round"/><path d="M74.55,905.1999999999999 L78.45,909.0999999999999 L74.55,912.9999999999999" fill="none" stroke="#b8b8b8" stroke-width="2.0" stroke-linecap="round" stroke-linejoin="round"/><polygon points="142.90,902.90 144.43,907.10 148.89,907.25 145.37,910.00 146.60,914.30 142.90,911.80 139.20,914.30 140.43,910.00 136.91,907.25 141.37,907.10" fill="#b8b8b8"/><path d="M270.40000000000003,908.8 a4.2,4.4 0 0 1 8.4,0z" fill="none" stroke="#c8c8c8" stroke-width="1.1"/><path d="M274.6,904.5999999999999v8 M268.6,910.8h12 M272.0,910.8v2.2 M277.20000000000005,910.8v2.2 M271.40000000000003,907.1999999999999h6.4" stroke="#c8c8c8" stroke-width="1.1" fill="none"/><circle cx="289.4" cy="908.8" r="2.1" fill="none" stroke="#7a7a7a" stroke-width="0.9"/><path d="M292.70,908.80L294.60,908.80M291.73,911.13L293.08,912.48M289.40,912.10L289.40,914.00M287.07,911.13L285.72,912.48M286.10,908.80L284.20,908.80M287.07,906.47L285.72,905.12M289.40,905.50L289.40,903.60M291.73,906.47L293.08,905.12" stroke="#7a7a7a" stroke-width="0.9"/><line x1="299.2" y1="913.4" x2="309.59999999999997" y2="903.8" stroke="#bcbcbc" stroke-width="1.5"/><path d="M410.8,909.1999999999999 a1.5,1.5 0 1 1 1.6,-1.9 a3.1,3.1 0 1 1 -4.6,2.9 a4.9,4.9 0 1 1 6.6,4.2" fill="none" stroke="#6e6e6e" stroke-width="1.7" stroke-linecap="round"/><path d="M495.6,906.5 L500,911.5 L504.4,906.5" fill="none" stroke="#b4b4b4" stroke-width="1.9" stroke-linecap="round" stroke-linejoin="round"/><path d="M74.55,922.1999999999999 L78.45,926.0999999999999 L74.55,929.9999999999999" fill="none" stroke="#b8b8b8" stroke-width="2.0" stroke-linecap="round" stroke-linejoin="round"/><polygon points="142.90,919.90 144.43,924.10 148.89,924.25 145.37,927.00 146.60,931.30 142.90,928.80 139.20,931.30 140.43,927.00 136.91,924.25 141.37,924.10" fill="#b8b8b8"/><path d="M270.40000000000003,925.8 a4.2,4.4 0 0 1 8.4,0z" fill="none" stroke="#c8c8c8" stroke-width="1.1"/><path d="M274.6,921.5999999999999v8 M268.6,927.8h12 M272.0,927.8v2.2 M277.20000000000005,927.8v2.2 M271.40000000000003,924.1999999999999h6.4" stroke="#c8c8c8" stroke-width="1.1" fill="none"/><circle cx="289.4" cy="925.8" r="2.1" fill="none" stroke="#7a7a7a" stroke-width="0.9"/><path d="M292.70,925.80L294.60,925.80M291.73,928.13L293.08,929.48M289.40,929.10L289.40,931.00M287.07,928.13L285.72,929.48M286.10,925.80L284.20,925.80M287.07,923.47L285.72,922.12M289.40,922.50L289.40,920.60M291.73,923.47L293.08,922.12" stroke="#7a7a7a" stroke-width="0.9"/><line x1="299.2" y1="930.4" x2="309.59999999999997" y2="920.8" stroke="#bcbcbc" stroke-width="1.5"/><path d="M410.8,926.1999999999999 a1.5,1.5 0 1 1 1.6,-1.9 a3.1,3.1 0 1 1 -4.6,2.9 a4.9,4.9 0 1 1 6.6,4.2" fill="none" stroke="#6e6e6e" stroke-width="1.7" stroke-linecap="round"/><path d="M495.6,923.5 L500,928.5 L504.4,923.5" fill="none" stroke="#b4b4b4" stroke-width="1.9" stroke-linecap="round" stroke-linejoin="round"/><path d="M6.0,942.8 Q11.6,936.4 17.2,942.8 Q11.6,949.1999999999999 6.0,942.8Z" fill="#c4c4c4"/><circle cx="11.6" cy="942.8" r="2.7" fill="#161616"/><circle cx="11.799999999999999" cy="943.0999999999999" r="1.5" fill="#c4c4c4"/><circle cx="10.7" cy="941.9" r="0.9" fill="#161616"/><path d="M74.55,939.1999999999999 L78.45,943.0999999999999 L74.55,946.9999999999999" fill="none" stroke="#b8b8b8" stroke-width="2.0" stroke-linecap="round" stroke-linejoin="round"/><rect x="136.29999999999998" y="938.5999999999999" width="7.6" height="8.4" fill="#b0b0b0"/><path d="M143.9,942.8 l4.9,-4 v8z" fill="#b0b0b0"/><path d="M270.40000000000003,942.8 a4.2,4.4 0 0 1 8.4,0z" fill="none" stroke="#c8c8c8" stroke-width="1.1"/><path d="M274.6,938.5999999999999v8 M268.6,944.8h12 M272.0,944.8v2.2 M277.20000000000005,944.8v2.2 M271.40000000000003,941.1999999999999h6.4" stroke="#c8c8c8" stroke-width="1.1" fill="none"/><path d="M379.4,944.0V939.4 M379.4,944.0L375.79999999999995,946.1999999999999 M379.4,944.0L383.0,946.1999999999999" stroke="#d0d0d0" stroke-width="1.1" fill="none"/><path d="M379.4,937.1999999999999l-2,2.8h4z M373.79999999999995,947.4l3.2,-0.2l-1.6,-2.4z M385.0,947.4l-3.2,-0.2l1.6,-2.4z" fill="#d0d0d0"/><path d="M410.8,943.1999999999999 a1.5,1.5 0 1 1 1.6,-1.9 a3.1,3.1 0 1 1 -4.6,2.9 a4.9,4.9 0 1 1 6.6,4.2" fill="none" stroke="#6e6e6e" stroke-width="1.7" stroke-linecap="round"/><path d="M495.6,940.5 L500,945.5 L504.4,940.5" fill="none" stroke="#b4b4b4" stroke-width="1.9" stroke-linecap="round" stroke-linejoin="round"/><path d="M6.0,959.8 Q11.6,953.4 17.2,959.8 Q11.6,966.1999999999999 6.0,959.8Z" fill="#c4c4c4"/><circle cx="11.6" cy="959.8" r="2.7" fill="#161616"/><circle cx="11.799999999999999" cy="960.0999999999999" r="1.5" fill="#c4c4c4"/><circle cx="10.7" cy="958.9" r="0.9" fill="#161616"/><path d="M74.55,956.1999999999999 L78.45,960.0999999999999 L74.55,963.9999999999999" fill="none" stroke="#b8b8b8" stroke-width="2.0" stroke-linecap="round" stroke-linejoin="round"/><path d="M270.40000000000003,959.8 a4.2,4.4 0 0 1 8.4,0z" fill="none" stroke="#c8c8c8" stroke-width="1.1"/><path d="M274.6,955.5999999999999v8 M268.6,961.8h12 M272.0,961.8v2.2 M277.20000000000005,961.8v2.2 M271.40000000000003,958.1999999999999h6.4" stroke="#c8c8c8" stroke-width="1.1" fill="none"/><line x1="299.2" y1="964.4" x2="309.59999999999997" y2="954.8" stroke="#bcbcbc" stroke-width="1.5"/><path d="M379.4,961.0V956.4 M379.4,961.0L375.79999999999995,963.1999999999999 M379.4,961.0L383.0,963.1999999999999" stroke="#d0d0d0" stroke-width="1.1" fill="none"/><path d="M379.4,954.1999999999999l-2,2.8h4z M373.79999999999995,964.4l3.2,-0.2l-1.6,-2.4z M385.0,964.4l-3.2,-0.2l1.6,-2.4z" fill="#d0d0d0"/><path d="M410.8,960.1999999999999 a1.5,1.5 0 1 1 1.6,-1.9 a3.1,3.1 0 1 1 -4.6,2.9 a4.9,4.9 0 1 1 6.6,4.2" fill="none" stroke="#6e6e6e" stroke-width="1.7" stroke-linecap="round"/><path d="M495.6,957.5 L500,962.5 L504.4,957.5" fill="none" stroke="#b4b4b4" stroke-width="1.9" stroke-linecap="round" stroke-linejoin="round"/><path d="M6.0,976.8 Q11.6,970.4 17.2,976.8 Q11.6,983.1999999999999 6.0,976.8Z" fill="#c4c4c4"/><circle cx="11.6" cy="976.8" r="2.7" fill="#161616"/><circle cx="11.799999999999999" cy="977.0999999999999" r="1.5" fill="#c4c4c4"/><circle cx="10.7" cy="975.9" r="0.9" fill="#161616"/><path d="M74.55,973.1999999999999 L78.45,977.0999999999999 L74.55,980.9999999999999" fill="none" stroke="#b8b8b8" stroke-width="2.0" stroke-linecap="round" stroke-linejoin="round"/><path d="M270.40000000000003,976.8 a4.2,4.4 0 0 1 8.4,0z" fill="none" stroke="#c8c8c8" stroke-width="1.1"/><path d="M274.6,972.5999999999999v8 M268.6,978.8h12 M272.0,978.8v2.2 M277.20000000000005,978.8v2.2 M271.40000000000003,975.1999999999999h6.4" stroke="#c8c8c8" stroke-width="1.1" fill="none"/><line x1="299.2" y1="981.4" x2="309.59999999999997" y2="971.8" stroke="#bcbcbc" stroke-width="1.5"/><circle cx="364.4" cy="976.8" r="4.7" fill="#161616" stroke="#d8d8d8" stroke-width="1.1"/><path d="M367.7,973.5 A4.7,4.7 0 0 1 361.09999999999997,980.0999999999999Z" fill="#d8d8d8"/><path d="M379.4,972.2 l4.2,2.3 v5 l-4.2,2.4 l-4.2,-2.4 v-5z M375.2,974.5 l4.2,2.4 l4.2,-2.4 M379.4,976.9v5" fill="none" stroke="#d0d0d0" stroke-width="1.05" stroke-linejoin="round"/><path d="M410.8,977.1999999999999 a1.5,1.5 0 1 1 1.6,-1.9 a3.1,3.1 0 1 1 -4.6,2.9 a4.9,4.9 0 1 1 6.6,4.2" fill="none" stroke="#6e6e6e" stroke-width="1.7" stroke-linecap="round"/><path d="M495.6,974.5 L500,979.5 L504.4,974.5" fill="none" stroke="#b4b4b4" stroke-width="1.9" stroke-linecap="round" stroke-linejoin="round"/><path d="M6.0,993.8 Q11.6,987.4 17.2,993.8 Q11.6,1000.1999999999999 6.0,993.8Z" fill="#c4c4c4"/><circle cx="11.6" cy="993.8" r="2.7" fill="#161616"/><circle cx="11.799999999999999" cy="994.0999999999999" r="1.5" fill="#c4c4c4"/><circle cx="10.7" cy="992.9" r="0.9" fill="#161616"/><path d="M74.55,990.1999999999999 L78.45,994.0999999999999 L74.55,997.9999999999999" fill="none" stroke="#b8b8b8" stroke-width="2.0" stroke-linecap="round" stroke-linejoin="round"/><polygon points="142.90,987.90 144.43,992.10 148.89,992.25 145.37,995.00 146.60,999.30 142.90,996.80 139.20,999.30 140.43,995.00 136.91,992.25 141.37,992.10" fill="#b8b8b8"/><path d="M270.40000000000003,993.8 a4.2,4.4 0 0 1 8.4,0z" fill="none" stroke="#c8c8c8" stroke-width="1.1"/><path d="M274.6,989.5999999999999v8 M268.6,995.8h12 M272.0,995.8v2.2 M277.20000000000005,995.8v2.2 M271.40000000000003,992.1999999999999h6.4" stroke="#c8c8c8" stroke-width="1.1" fill="none"/><circle cx="289.4" cy="993.8" r="2.1" fill="none" stroke="#7a7a7a" stroke-width="0.9"/><path d="M292.70,993.80L294.60,993.80M291.73,996.13L293.08,997.48M289.40,997.10L289.40,999.00M287.07,996.13L285.72,997.48M286.10,993.80L284.20,993.80M287.07,991.47L285.72,990.12M289.40,990.50L289.40,988.60M291.73,991.47L293.08,990.12" stroke="#7a7a7a" stroke-width="0.9"/><line x1="299.2" y1="998.4" x2="309.59999999999997" y2="988.8" stroke="#bcbcbc" stroke-width="1.5"/><circle cx="347.0" cy="996.4" r="3.5" fill="#2b2b2b" stroke="#b4b4b4" stroke-width="0.9"/><circle cx="348.6" cy="994.8" r="3.6" fill="#2b2b2b" stroke="#b4b4b4" stroke-width="0.9"/><circle cx="350.90000000000003" cy="992.4" r="4" fill="#5a5a5a" stroke="#b4b4b4" stroke-width="1"/><path d="M410.8,994.1999999999999 a1.5,1.5 0 1 1 1.6,-1.9 a3.1,3.1 0 1 1 -4.6,2.9 a4.9,4.9 0 1 1 6.6,4.2" fill="none" stroke="#6e6e6e" stroke-width="1.7" stroke-linecap="round"/><path d="M495.6,991.5 L500,996.5 L504.4,991.5" fill="none" stroke="#b4b4b4" stroke-width="1.9" stroke-linecap="round" stroke-linejoin="round"/><path d="M6.0,1010.8 Q11.6,1004.4 17.2,1010.8 Q11.6,1017.1999999999999 6.0,1010.8Z" fill="#c4c4c4"/><circle cx="11.6" cy="1010.8" r="2.7" fill="#161616"/><circle cx="11.799999999999999" cy="1011.0999999999999" r="1.5" fill="#c4c4c4"/><circle cx="10.7" cy="1009.9" r="0.9" fill="#161616"/><path d="M74.55,1007.1999999999999 L78.45,1011.0999999999999 L74.55,1014.9999999999999" fill="none" stroke="#b8b8b8" stroke-width="2.0" stroke-linecap="round" stroke-linejoin="round"/><polygon points="142.90,1004.90 144.43,1009.10 148.89,1009.25 145.37,1012.00 146.60,1016.30 142.90,1013.80 139.20,1016.30 140.43,1012.00 136.91,1009.25 141.37,1009.10" fill="#b8b8b8"/><path d="M270.40000000000003,1010.8 a4.2,4.4 0 0 1 8.4,0z" fill="none" stroke="#c8c8c8" stroke-width="1.1"/><path d="M274.6,1006.5999999999999v8 M268.6,1012.8h12 M272.0,1012.8v2.2 M277.20000000000005,1012.8v2.2 M271.40000000000003,1009.1999999999999h6.4" stroke="#c8c8c8" stroke-width="1.1" fill="none"/><circle cx="289.4" cy="1010.8" r="2.1" fill="none" stroke="#7a7a7a" stroke-width="0.9"/><path d="M292.70,1010.80L294.60,1010.80M291.73,1013.13L293.08,1014.48M289.40,1014.10L289.40,1016.00M287.07,1013.13L285.72,1014.48M286.10,1010.80L284.20,1010.80M287.07,1008.47L285.72,1007.12M289.40,1007.50L289.40,1005.60M291.73,1008.47L293.08,1007.12" stroke="#7a7a7a" stroke-width="0.9"/><line x1="299.2" y1="1015.4" x2="309.59999999999997" y2="1005.8" stroke="#bcbcbc" stroke-width="1.5"/><circle cx="347.0" cy="1013.4" r="3.5" fill="#2b2b2b" stroke="#b4b4b4" stroke-width="0.9"/><circle cx="348.6" cy="1011.8" r="3.6" fill="#2b2b2b" stroke="#b4b4b4" stroke-width="0.9"/><circle cx="350.90000000000003" cy="1009.4" r="4" fill="#5a5a5a" stroke="#b4b4b4" stroke-width="1"/><path d="M410.8,1011.1999999999999 a1.5,1.5 0 1 1 1.6,-1.9 a3.1,3.1 0 1 1 -4.6,2.9 a4.9,4.9 0 1 1 6.6,4.2" fill="none" stroke="#6e6e6e" stroke-width="1.7" stroke-linecap="round"/><path d="M495.6,1008.5 L500,1013.5 L504.4,1008.5" fill="none" stroke="#b4b4b4" stroke-width="1.9" stroke-linecap="round" stroke-linejoin="round"/><path d="M6.0,1027.8 Q11.6,1021.4 17.2,1027.8 Q11.6,1034.2 6.0,1027.8Z" fill="#c4c4c4"/><circle cx="11.6" cy="1027.8" r="2.7" fill="#161616"/><circle cx="11.799999999999999" cy="1028.1" r="1.5" fill="#c4c4c4"/><circle cx="10.7" cy="1026.8999999999999" r="0.9" fill="#161616"/><path d="M74.55,1024.1999999999998 L78.45,1028.1 L74.55,1032.0" fill="none" stroke="#b8b8b8" stroke-width="2.0" stroke-linecap="round" stroke-linejoin="round"/><polygon points="142.90,1021.90 144.43,1026.10 148.89,1026.25 145.37,1029.00 146.60,1033.30 142.90,1030.80 139.20,1033.30 140.43,1029.00 136.91,1026.25 141.37,1026.10" fill="#b8b8b8"/><path d="M270.40000000000003,1027.8 a4.2,4.4 0 0 1 8.4,0z" fill="none" stroke="#c8c8c8" stroke-width="1.1"/><path d="M274.6,1023.6v8 M268.6,1029.8h12 M272.0,1029.8v2.2 M277.20000000000005,1029.8v2.2 M271.40000000000003,1026.2h6.4" stroke="#c8c8c8" stroke-width="1.1" fill="none"/><circle cx="289.4" cy="1027.8" r="2.1" fill="none" stroke="#7a7a7a" stroke-width="0.9"/><path d="M292.70,1027.80L294.60,1027.80M291.73,1030.13L293.08,1031.48M289.40,1031.10L289.40,1033.00M287.07,1030.13L285.72,1031.48M286.10,1027.80L284.20,1027.80M287.07,1025.47L285.72,1024.12M289.40,1024.50L289.40,1022.60M291.73,1025.47L293.08,1024.12" stroke="#7a7a7a" stroke-width="0.9"/><line x1="299.2" y1="1032.3999999999999" x2="309.59999999999997" y2="1022.8" stroke="#bcbcbc" stroke-width="1.5"/><circle cx="347.0" cy="1030.3999999999999" r="3.5" fill="#2b2b2b" stroke="#b4b4b4" stroke-width="0.9"/><circle cx="348.6" cy="1028.8" r="3.6" fill="#2b2b2b" stroke="#b4b4b4" stroke-width="0.9"/><circle cx="350.90000000000003" cy="1026.3999999999999" r="4" fill="#5a5a5a" stroke="#b4b4b4" stroke-width="1"/><path d="M410.8,1028.2 a1.5,1.5 0 1 1 1.6,-1.9 a3.1,3.1 0 1 1 -4.6,2.9 a4.9,4.9 0 1 1 6.6,4.2" fill="none" stroke="#6e6e6e" stroke-width="1.7" stroke-linecap="round"/><path d="M495.6,1025.5 L500,1030.5 L504.4,1025.5" fill="none" stroke="#b4b4b4" stroke-width="1.9" stroke-linecap="round" stroke-linejoin="round"/><path d="M6.0,1044.8 Q11.6,1038.3999999999999 17.2,1044.8 Q11.6,1051.2 6.0,1044.8Z" fill="#c4c4c4"/><circle cx="11.6" cy="1044.8" r="2.7" fill="#161616"/><circle cx="11.799999999999999" cy="1045.1" r="1.5" fill="#c4c4c4"/><circle cx="10.7" cy="1043.8999999999999" r="0.9" fill="#161616"/><path d="M74.55,1041.1999999999998 L78.45,1045.1 L74.55,1049.0" fill="none" stroke="#b8b8b8" stroke-width="2.0" stroke-linecap="round" stroke-linejoin="round"/><polygon points="142.90,1038.90 144.43,1043.10 148.89,1043.25 145.37,1046.00 146.60,1050.30 142.90,1047.80 139.20,1050.30 140.43,1046.00 136.91,1043.25 141.37,1043.10" fill="#b8b8b8"/><path d="M270.40000000000003,1044.8 a4.2,4.4 0 0 1 8.4,0z" fill="none" stroke="#c8c8c8" stroke-width="1.1"/><path d="M274.6,1040.6000000000001v8 M268.6,1046.8h12 M272.0,1046.8v2.2 M277.20000000000005,1046.8v2.2 M271.40000000000003,1043.2h6.4" stroke="#c8c8c8" stroke-width="1.1" fill="none"/><circle cx="289.4" cy="1044.8" r="2.1" fill="none" stroke="#7a7a7a" stroke-width="0.9"/><path d="M292.70,1044.80L294.60,1044.80M291.73,1047.13L293.08,1048.48M289.40,1048.10L289.40,1050.00M287.07,1047.13L285.72,1048.48M286.10,1044.80L284.20,1044.80M287.07,1042.47L285.72,1041.12M289.40,1041.50L289.40,1039.60M291.73,1042.47L293.08,1041.12" stroke="#7a7a7a" stroke-width="0.9"/><line x1="299.2" y1="1049.3999999999999" x2="309.59999999999997" y2="1039.8" stroke="#bcbcbc" stroke-width="1.5"/><path d="M410.8,1045.2 a1.5,1.5 0 1 1 1.6,-1.9 a3.1,3.1 0 1 1 -4.6,2.9 a4.9,4.9 0 1 1 6.6,4.2" fill="none" stroke="#6e6e6e" stroke-width="1.7" stroke-linecap="round"/><path d="M495.6,1042.5 L500,1047.5 L504.4,1042.5" fill="none" stroke="#b4b4b4" stroke-width="1.9" stroke-linecap="round" stroke-linejoin="round"/><path d="M6.0,1061.8 Q11.6,1055.3999999999999 17.2,1061.8 Q11.6,1068.2 6.0,1061.8Z" fill="#c4c4c4"/><circle cx="11.6" cy="1061.8" r="2.7" fill="#161616"/><circle cx="11.799999999999999" cy="1062.1" r="1.5" fill="#c4c4c4"/><circle cx="10.7" cy="1060.8999999999999" r="0.9" fill="#161616"/><path d="M74.55,1058.1999999999998 L78.45,1062.1 L74.55,1066.0" fill="none" stroke="#b8b8b8" stroke-width="2.0" stroke-linecap="round" stroke-linejoin="round"/><polygon points="142.90,1055.90 144.43,1060.10 148.89,1060.25 145.37,1063.00 146.60,1067.30 142.90,1064.80 139.20,1067.30 140.43,1063.00 136.91,1060.25 141.37,1060.10" fill="#b8b8b8"/><path d="M270.40000000000003,1061.8 a4.2,4.4 0 0 1 8.4,0z" fill="none" stroke="#c8c8c8" stroke-width="1.1"/><path d="M274.6,1057.6000000000001v8 M268.6,1063.8h12 M272.0,1063.8v2.2 M277.20000000000005,1063.8v2.2 M271.40000000000003,1060.2h6.4" stroke="#c8c8c8" stroke-width="1.1" fill="none"/><circle cx="289.4" cy="1061.8" r="2.1" fill="none" stroke="#7a7a7a" stroke-width="0.9"/><path d="M292.70,1061.80L294.60,1061.80M291.73,1064.13L293.08,1065.48M289.40,1065.10L289.40,1067.00M287.07,1064.13L285.72,1065.48M286.10,1061.80L284.20,1061.80M287.07,1059.47L285.72,1058.12M289.40,1058.50L289.40,1056.60M291.73,1059.47L293.08,1058.12" stroke="#7a7a7a" stroke-width="0.9"/><line x1="299.2" y1="1066.3999999999999" x2="309.59999999999997" y2="1056.8" stroke="#bcbcbc" stroke-width="1.5"/><path d="M410.8,1062.2 a1.5,1.5 0 1 1 1.6,-1.9 a3.1,3.1 0 1 1 -4.6,2.9 a4.9,4.9 0 1 1 6.6,4.2" fill="none" stroke="#6e6e6e" stroke-width="1.7" stroke-linecap="round"/><path d="M495.6,1059.5 L500,1064.5 L504.4,1059.5" fill="none" stroke="#b4b4b4" stroke-width="1.9" stroke-linecap="round" stroke-linejoin="round"/><path d="M6.0,1078.8 Q11.6,1072.3999999999999 17.2,1078.8 Q11.6,1085.2 6.0,1078.8Z" fill="#c4c4c4"/><circle cx="11.6" cy="1078.8" r="2.7" fill="#161616"/><circle cx="11.799999999999999" cy="1079.1" r="1.5" fill="#c4c4c4"/><circle cx="10.7" cy="1077.8999999999999" r="0.9" fill="#161616"/><path d="M74.55,1075.1999999999998 L78.45,1079.1 L74.55,1083.0" fill="none" stroke="#b8b8b8" stroke-width="2.0" stroke-linecap="round" stroke-linejoin="round"/><polygon points="142.90,1072.90 144.43,1077.10 148.89,1077.25 145.37,1080.00 146.60,1084.30 142.90,1081.80 139.20,1084.30 140.43,1080.00 136.91,1077.25 141.37,1077.10" fill="#b8b8b8"/><path d="M270.40000000000003,1078.8 a4.2,4.4 0 0 1 8.4,0z" fill="none" stroke="#c8c8c8" stroke-width="1.1"/><path d="M274.6,1074.6000000000001v8 M268.6,1080.8h12 M272.0,1080.8v2.2 M277.20000000000005,1080.8v2.2 M271.40000000000003,1077.2h6.4" stroke="#c8c8c8" stroke-width="1.1" fill="none"/><circle cx="289.4" cy="1078.8" r="2.1" fill="none" stroke="#7a7a7a" stroke-width="0.9"/><path d="M292.70,1078.80L294.60,1078.80M291.73,1081.13L293.08,1082.48M289.40,1082.10L289.40,1084.00M287.07,1081.13L285.72,1082.48M286.10,1078.80L284.20,1078.80M287.07,1076.47L285.72,1075.12M289.40,1075.50L289.40,1073.60M291.73,1076.47L293.08,1075.12" stroke="#7a7a7a" stroke-width="0.9"/><line x1="299.2" y1="1083.3999999999999" x2="309.59999999999997" y2="1073.8" stroke="#bcbcbc" stroke-width="1.5"/><path d="M410.8,1079.2 a1.5,1.5 0 1 1 1.6,-1.9 a3.1,3.1 0 1 1 -4.6,2.9 a4.9,4.9 0 1 1 6.6,4.2" fill="none" stroke="#6e6e6e" stroke-width="1.7" stroke-linecap="round"/><path d="M495.6,1076.5 L500,1081.5 L504.4,1076.5" fill="none" stroke="#b4b4b4" stroke-width="1.9" stroke-linecap="round" stroke-linejoin="round"/><path d="M6.0,1095.8 Q11.6,1089.3999999999999 17.2,1095.8 Q11.6,1102.2 6.0,1095.8Z" fill="#c4c4c4"/><circle cx="11.6" cy="1095.8" r="2.7" fill="#161616"/><circle cx="11.799999999999999" cy="1096.1" r="1.5" fill="#c4c4c4"/><circle cx="10.7" cy="1094.8999999999999" r="0.9" fill="#161616"/><path d="M74.55,1092.1999999999998 L78.45,1096.1 L74.55,1100.0" fill="none" stroke="#b8b8b8" stroke-width="2.0" stroke-linecap="round" stroke-linejoin="round"/><polygon points="142.90,1089.90 144.43,1094.10 148.89,1094.25 145.37,1097.00 146.60,1101.30 142.90,1098.80 139.20,1101.30 140.43,1097.00 136.91,1094.25 141.37,1094.10" fill="#b8b8b8"/><path d="M270.40000000000003,1095.8 a4.2,4.4 0 0 1 8.4,0z" fill="none" stroke="#c8c8c8" stroke-width="1.1"/><path d="M274.6,1091.6000000000001v8 M268.6,1097.8h12 M272.0,1097.8v2.2 M277.20000000000005,1097.8v2.2 M271.40000000000003,1094.2h6.4" stroke="#c8c8c8" stroke-width="1.1" fill="none"/><circle cx="289.4" cy="1095.8" r="2.1" fill="none" stroke="#7a7a7a" stroke-width="0.9"/><path d="M292.70,1095.80L294.60,1095.80M291.73,1098.13L293.08,1099.48M289.40,1099.10L289.40,1101.00M287.07,1098.13L285.72,1099.48M286.10,1095.80L284.20,1095.80M287.07,1093.47L285.72,1092.12M289.40,1092.50L289.40,1090.60M291.73,1093.47L293.08,1092.12" stroke="#7a7a7a" stroke-width="0.9"/><line x1="299.2" y1="1100.3999999999999" x2="309.59999999999997" y2="1090.8" stroke="#bcbcbc" stroke-width="1.5"/><path d="M410.8,1096.2 a1.5,1.5 0 1 1 1.6,-1.9 a3.1,3.1 0 1 1 -4.6,2.9 a4.9,4.9 0 1 1 6.6,4.2" fill="none" stroke="#6e6e6e" stroke-width="1.7" stroke-linecap="round"/><path d="M495.6,1093.5 L500,1098.5 L504.4,1093.5" fill="none" stroke="#b4b4b4" stroke-width="1.9" stroke-linecap="round" stroke-linejoin="round"/><path d="M6.0,1112.8 Q11.6,1106.3999999999999 17.2,1112.8 Q11.6,1119.2 6.0,1112.8Z" fill="#c4c4c4"/><circle cx="11.6" cy="1112.8" r="2.7" fill="#161616"/><circle cx="11.799999999999999" cy="1113.1" r="1.5" fill="#c4c4c4"/><circle cx="10.7" cy="1111.8999999999999" r="0.9" fill="#161616"/><path d="M74.55,1109.1999999999998 L78.45,1113.1 L74.55,1117.0" fill="none" stroke="#b8b8b8" stroke-width="2.0" stroke-linecap="round" stroke-linejoin="round"/><polygon points="142.90,1106.90 144.43,1111.10 148.89,1111.25 145.37,1114.00 146.60,1118.30 142.90,1115.80 139.20,1118.30 140.43,1114.00 136.91,1111.25 141.37,1111.10" fill="#b8b8b8"/><path d="M270.40000000000003,1112.8 a4.2,4.4 0 0 1 8.4,0z" fill="none" stroke="#c8c8c8" stroke-width="1.1"/><path d="M274.6,1108.6000000000001v8 M268.6,1114.8h12 M272.0,1114.8v2.2 M277.20000000000005,1114.8v2.2 M271.40000000000003,1111.2h6.4" stroke="#c8c8c8" stroke-width="1.1" fill="none"/><circle cx="289.4" cy="1112.8" r="2.1" fill="none" stroke="#7a7a7a" stroke-width="0.9"/><path d="M292.70,1112.80L294.60,1112.80M291.73,1115.13L293.08,1116.48M289.40,1116.10L289.40,1118.00M287.07,1115.13L285.72,1116.48M286.10,1112.80L284.20,1112.80M287.07,1110.47L285.72,1109.12M289.40,1109.50L289.40,1107.60M291.73,1110.47L293.08,1109.12" stroke="#7a7a7a" stroke-width="0.9"/><line x1="299.2" y1="1117.3999999999999" x2="309.59999999999997" y2="1107.8" stroke="#bcbcbc" stroke-width="1.5"/><circle cx="347.0" cy="1115.3999999999999" r="3.5" fill="#2b2b2b" stroke="#b4b4b4" stroke-width="0.9"/><circle cx="348.6" cy="1113.8" r="3.6" fill="#2b2b2b" stroke="#b4b4b4" stroke-width="0.9"/><circle cx="350.90000000000003" cy="1111.3999999999999" r="4" fill="#5a5a5a" stroke="#b4b4b4" stroke-width="1"/><path d="M410.8,1113.2 a1.5,1.5 0 1 1 1.6,-1.9 a3.1,3.1 0 1 1 -4.6,2.9 a4.9,4.9 0 1 1 6.6,4.2" fill="none" stroke="#6e6e6e" stroke-width="1.7" stroke-linecap="round"/><path d="M495.6,1110.5 L500,1115.5 L504.4,1110.5" fill="none" stroke="#b4b4b4" stroke-width="1.9" stroke-linecap="round" stroke-linejoin="round"/><path d="M6.0,1129.8 Q11.6,1123.3999999999999 17.2,1129.8 Q11.6,1136.2 6.0,1129.8Z" fill="#c4c4c4"/><circle cx="11.6" cy="1129.8" r="2.7" fill="#161616"/><circle cx="11.799999999999999" cy="1130.1" r="1.5" fill="#c4c4c4"/><circle cx="10.7" cy="1128.8999999999999" r="0.9" fill="#161616"/><path d="M74.55,1126.1999999999998 L78.45,1130.1 L74.55,1134.0" fill="none" stroke="#b8b8b8" stroke-width="2.0" stroke-linecap="round" stroke-linejoin="round"/><polygon points="142.90,1123.90 144.43,1128.10 148.89,1128.25 145.37,1131.00 146.60,1135.30 142.90,1132.80 139.20,1135.30 140.43,1131.00 136.91,1128.25 141.37,1128.10" fill="#b8b8b8"/><path d="M270.40000000000003,1129.8 a4.2,4.4 0 0 1 8.4,0z" fill="none" stroke="#c8c8c8" stroke-width="1.1"/><path d="M274.6,1125.6000000000001v8 M268.6,1131.8h12 M272.0,1131.8v2.2 M277.20000000000005,1131.8v2.2 M271.40000000000003,1128.2h6.4" stroke="#c8c8c8" stroke-width="1.1" fill="none"/><circle cx="289.4" cy="1129.8" r="2.1" fill="none" stroke="#7a7a7a" stroke-width="0.9"/><path d="M292.70,1129.80L294.60,1129.80M291.73,1132.13L293.08,1133.48M289.40,1133.10L289.40,1135.00M287.07,1132.13L285.72,1133.48M286.10,1129.80L284.20,1129.80M287.07,1127.47L285.72,1126.12M289.40,1126.50L289.40,1124.60M291.73,1127.47L293.08,1126.12" stroke="#7a7a7a" stroke-width="0.9"/><line x1="299.2" y1="1134.3999999999999" x2="309.59999999999997" y2="1124.8" stroke="#bcbcbc" stroke-width="1.5"/><circle cx="347.0" cy="1132.3999999999999" r="3.5" fill="#2b2b2b" stroke="#b4b4b4" stroke-width="0.9"/><circle cx="348.6" cy="1130.8" r="3.6" fill="#2b2b2b" stroke="#b4b4b4" stroke-width="0.9"/><circle cx="350.90000000000003" cy="1128.3999999999999" r="4" fill="#5a5a5a" stroke="#b4b4b4" stroke-width="1"/><path d="M410.8,1130.2 a1.5,1.5 0 1 1 1.6,-1.9 a3.1,3.1 0 1 1 -4.6,2.9 a4.9,4.9 0 1 1 6.6,4.2" fill="none" stroke="#6e6e6e" stroke-width="1.7" stroke-linecap="round"/><path d="M495.6,1127.5 L500,1132.5 L504.4,1127.5" fill="none" stroke="#b4b4b4" stroke-width="1.9" stroke-linecap="round" stroke-linejoin="round"/><path d="M6.0,1146.8 Q11.6,1140.3999999999999 17.2,1146.8 Q11.6,1153.2 6.0,1146.8Z" fill="#c4c4c4"/><circle cx="11.6" cy="1146.8" r="2.7" fill="#161616"/><circle cx="11.799999999999999" cy="1147.1" r="1.5" fill="#c4c4c4"/><circle cx="10.7" cy="1145.8999999999999" r="0.9" fill="#161616"/><path d="M74.55,1143.1999999999998 L78.45,1147.1 L74.55,1151.0" fill="none" stroke="#b8b8b8" stroke-width="2.0" stroke-linecap="round" stroke-linejoin="round"/><polygon points="142.90,1140.90 144.43,1145.10 148.89,1145.25 145.37,1148.00 146.60,1152.30 142.90,1149.80 139.20,1152.30 140.43,1148.00 136.91,1145.25 141.37,1145.10" fill="#b8b8b8"/><path d="M270.40000000000003,1146.8 a4.2,4.4 0 0 1 8.4,0z" fill="none" stroke="#c8c8c8" stroke-width="1.1"/><path d="M274.6,1142.6000000000001v8 M268.6,1148.8h12 M272.0,1148.8v2.2 M277.20000000000005,1148.8v2.2 M271.40000000000003,1145.2h6.4" stroke="#c8c8c8" stroke-width="1.1" fill="none"/><circle cx="289.4" cy="1146.8" r="2.1" fill="none" stroke="#7a7a7a" stroke-width="0.9"/><path d="M292.70,1146.80L294.60,1146.80M291.73,1149.13L293.08,1150.48M289.40,1150.10L289.40,1152.00M287.07,1149.13L285.72,1150.48M286.10,1146.80L284.20,1146.80M287.07,1144.47L285.72,1143.12M289.40,1143.50L289.40,1141.60M291.73,1144.47L293.08,1143.12" stroke="#7a7a7a" stroke-width="0.9"/><line x1="299.2" y1="1151.3999999999999" x2="309.59999999999997" y2="1141.8" stroke="#bcbcbc" stroke-width="1.5"/><circle cx="347.0" cy="1149.3999999999999" r="3.5" fill="#2b2b2b" stroke="#b4b4b4" stroke-width="0.9"/><circle cx="348.6" cy="1147.8" r="3.6" fill="#2b2b2b" stroke="#b4b4b4" stroke-width="0.9"/><circle cx="350.90000000000003" cy="1145.3999999999999" r="4" fill="#5a5a5a" stroke="#b4b4b4" stroke-width="1"/><path d="M410.8,1147.2 a1.5,1.5 0 1 1 1.6,-1.9 a3.1,3.1 0 1 1 -4.6,2.9 a4.9,4.9 0 1 1 6.6,4.2" fill="none" stroke="#6e6e6e" stroke-width="1.7" stroke-linecap="round"/><path d="M495.6,1144.5 L500,1149.5 L504.4,1144.5" fill="none" stroke="#b4b4b4" stroke-width="1.9" stroke-linecap="round" stroke-linejoin="round"/><path d="M6.0,1163.8 Q11.6,1157.3999999999999 17.2,1163.8 Q11.6,1170.2 6.0,1163.8Z" fill="#c4c4c4"/><circle cx="11.6" cy="1163.8" r="2.7" fill="#161616"/><circle cx="11.799999999999999" cy="1164.1" r="1.5" fill="#c4c4c4"/><circle cx="10.7" cy="1162.8999999999999" r="0.9" fill="#161616"/><path d="M74.55,1160.1999999999998 L78.45,1164.1 L74.55,1168.0" fill="none" stroke="#b8b8b8" stroke-width="2.0" stroke-linecap="round" stroke-linejoin="round"/><polygon points="142.90,1157.90 144.43,1162.10 148.89,1162.25 145.37,1165.00 146.60,1169.30 142.90,1166.80 139.20,1169.30 140.43,1165.00 136.91,1162.25 141.37,1162.10" fill="#b8b8b8"/><path d="M270.40000000000003,1163.8 a4.2,4.4 0 0 1 8.4,0z" fill="none" stroke="#c8c8c8" stroke-width="1.1"/><path d="M274.6,1159.6000000000001v8 M268.6,1165.8h12 M272.0,1165.8v2.2 M277.20000000000005,1165.8v2.2 M271.40000000000003,1162.2h6.4" stroke="#c8c8c8" stroke-width="1.1" fill="none"/><circle cx="289.4" cy="1163.8" r="2.1" fill="none" stroke="#7a7a7a" stroke-width="0.9"/><path d="M292.70,1163.80L294.60,1163.80M291.73,1166.13L293.08,1167.48M289.40,1167.10L289.40,1169.00M287.07,1166.13L285.72,1167.48M286.10,1163.80L284.20,1163.80M287.07,1161.47L285.72,1160.12M289.40,1160.50L289.40,1158.60M291.73,1161.47L293.08,1160.12" stroke="#7a7a7a" stroke-width="0.9"/><line x1="299.2" y1="1168.3999999999999" x2="309.59999999999997" y2="1158.8" stroke="#bcbcbc" stroke-width="1.5"/><circle cx="347.0" cy="1166.3999999999999" r="3.5" fill="#2b2b2b" stroke="#b4b4b4" stroke-width="0.9"/><circle cx="348.6" cy="1164.8" r="3.6" fill="#2b2b2b" stroke="#b4b4b4" stroke-width="0.9"/><circle cx="350.90000000000003" cy="1162.3999999999999" r="4" fill="#5a5a5a" stroke="#b4b4b4" stroke-width="1"/><path d="M410.8,1164.2 a1.5,1.5 0 1 1 1.6,-1.9 a3.1,3.1 0 1 1 -4.6,2.9 a4.9,4.9 0 1 1 6.6,4.2" fill="none" stroke="#6e6e6e" stroke-width="1.7" stroke-linecap="round"/><path d="M495.6,1161.5 L500,1166.5 L504.4,1161.5" fill="none" stroke="#b4b4b4" stroke-width="1.9" stroke-linecap="round" stroke-linejoin="round"/><path d="M6.0,1180.8 Q11.6,1174.3999999999999 17.2,1180.8 Q11.6,1187.2 6.0,1180.8Z" fill="#c4c4c4"/><circle cx="11.6" cy="1180.8" r="2.7" fill="#161616"/><circle cx="11.799999999999999" cy="1181.1" r="1.5" fill="#c4c4c4"/><circle cx="10.7" cy="1179.8999999999999" r="0.9" fill="#161616"/><path d="M74.55,1177.1999999999998 L78.45,1181.1 L74.55,1185.0" fill="none" stroke="#b8b8b8" stroke-width="2.0" stroke-linecap="round" stroke-linejoin="round"/><polygon points="142.90,1174.90 144.43,1179.10 148.89,1179.25 145.37,1182.00 146.60,1186.30 142.90,1183.80 139.20,1186.30 140.43,1182.00 136.91,1179.25 141.37,1179.10" fill="#b8b8b8"/><path d="M270.40000000000003,1180.8 a4.2,4.4 0 0 1 8.4,0z" fill="none" stroke="#c8c8c8" stroke-width="1.1"/><path d="M274.6,1176.6000000000001v8 M268.6,1182.8h12 M272.0,1182.8v2.2 M277.20000000000005,1182.8v2.2 M271.40000000000003,1179.2h6.4" stroke="#c8c8c8" stroke-width="1.1" fill="none"/><circle cx="289.4" cy="1180.8" r="2.1" fill="none" stroke="#7a7a7a" stroke-width="0.9"/><path d="M292.70,1180.80L294.60,1180.80M291.73,1183.13L293.08,1184.48M289.40,1184.10L289.40,1186.00M287.07,1183.13L285.72,1184.48M286.10,1180.80L284.20,1180.80M287.07,1178.47L285.72,1177.12M289.40,1177.50L289.40,1175.60M291.73,1178.47L293.08,1177.12" stroke="#7a7a7a" stroke-width="0.9"/><line x1="299.2" y1="1185.3999999999999" x2="309.59999999999997" y2="1175.8" stroke="#bcbcbc" stroke-width="1.5"/><circle cx="347.0" cy="1183.3999999999999" r="3.5" fill="#2b2b2b" stroke="#b4b4b4" stroke-width="0.9"/><circle cx="348.6" cy="1181.8" r="3.6" fill="#2b2b2b" stroke="#b4b4b4" stroke-width="0.9"/><circle cx="350.90000000000003" cy="1179.3999999999999" r="4" fill="#5a5a5a" stroke="#b4b4b4" stroke-width="1"/><path d="M410.8,1181.2 a1.5,1.5 0 1 1 1.6,-1.9 a3.1,3.1 0 1 1 -4.6,2.9 a4.9,4.9 0 1 1 6.6,4.2" fill="none" stroke="#6e6e6e" stroke-width="1.7" stroke-linecap="round"/><path d="M495.6,1178.5 L500,1183.5 L504.4,1178.5" fill="none" stroke="#b4b4b4" stroke-width="1.9" stroke-linecap="round" stroke-linejoin="round"/><path d="M6.0,1197.8 Q11.6,1191.3999999999999 17.2,1197.8 Q11.6,1204.2 6.0,1197.8Z" fill="#c4c4c4"/><circle cx="11.6" cy="1197.8" r="2.7" fill="#161616"/><circle cx="11.799999999999999" cy="1198.1" r="1.5" fill="#c4c4c4"/><circle cx="10.7" cy="1196.8999999999999" r="0.9" fill="#161616"/><path d="M74.55,1194.1999999999998 L78.45,1198.1 L74.55,1202.0" fill="none" stroke="#b8b8b8" stroke-width="2.0" stroke-linecap="round" stroke-linejoin="round"/><polygon points="142.90,1191.90 144.43,1196.10 148.89,1196.25 145.37,1199.00 146.60,1203.30 142.90,1200.80 139.20,1203.30 140.43,1199.00 136.91,1196.25 141.37,1196.10" fill="#b8b8b8"/><path d="M270.40000000000003,1197.8 a4.2,4.4 0 0 1 8.4,0z" fill="none" stroke="#c8c8c8" stroke-width="1.1"/><path d="M274.6,1193.6000000000001v8 M268.6,1199.8h12 M272.0,1199.8v2.2 M277.20000000000005,1199.8v2.2 M271.40000000000003,1196.2h6.4" stroke="#c8c8c8" stroke-width="1.1" fill="none"/><circle cx="289.4" cy="1197.8" r="2.1" fill="none" stroke="#7a7a7a" stroke-width="0.9"/><path d="M292.70,1197.80L294.60,1197.80M291.73,1200.13L293.08,1201.48M289.40,1201.10L289.40,1203.00M287.07,1200.13L285.72,1201.48M286.10,1197.80L284.20,1197.80M287.07,1195.47L285.72,1194.12M289.40,1194.50L289.40,1192.60M291.73,1195.47L293.08,1194.12" stroke="#7a7a7a" stroke-width="0.9"/><line x1="299.2" y1="1202.3999999999999" x2="309.59999999999997" y2="1192.8" stroke="#bcbcbc" stroke-width="1.5"/><circle cx="347.0" cy="1200.3999999999999" r="3.5" fill="#2b2b2b" stroke="#b4b4b4" stroke-width="0.9"/><circle cx="348.6" cy="1198.8" r="3.6" fill="#2b2b2b" stroke="#b4b4b4" stroke-width="0.9"/><circle cx="350.90000000000003" cy="1196.3999999999999" r="4" fill="#5a5a5a" stroke="#b4b4b4" stroke-width="1"/><path d="M379.4,1193.2 l4.2,2.3 v5 l-4.2,2.4 l-4.2,-2.4 v-5z M375.2,1195.5 l4.2,2.4 l4.2,-2.4 M379.4,1197.9v5" fill="none" stroke="#d0d0d0" stroke-width="1.05" stroke-linejoin="round"/><path d="M410.8,1198.2 a1.5,1.5 0 1 1 1.6,-1.9 a3.1,3.1 0 1 1 -4.6,2.9 a4.9,4.9 0 1 1 6.6,4.2" fill="none" stroke="#6e6e6e" stroke-width="1.7" stroke-linecap="round"/><path d="M495.6,1195.5 L500,1200.5 L504.4,1195.5" fill="none" stroke="#b4b4b4" stroke-width="1.9" stroke-linecap="round" stroke-linejoin="round"/><path d="M6.0,1214.8 Q11.6,1208.3999999999999 17.2,1214.8 Q11.6,1221.2 6.0,1214.8Z" fill="#c4c4c4"/><circle cx="11.6" cy="1214.8" r="2.7" fill="#161616"/><circle cx="11.799999999999999" cy="1215.1" r="1.5" fill="#c4c4c4"/><circle cx="10.7" cy="1213.8999999999999" r="0.9" fill="#161616"/><path d="M74.55,1211.1999999999998 L78.45,1215.1 L74.55,1219.0" fill="none" stroke="#b8b8b8" stroke-width="2.0" stroke-linecap="round" stroke-linejoin="round"/><polygon points="142.90,1208.90 144.43,1213.10 148.89,1213.25 145.37,1216.00 146.60,1220.30 142.90,1217.80 139.20,1220.30 140.43,1216.00 136.91,1213.25 141.37,1213.10" fill="#b8b8b8"/><path d="M270.40000000000003,1214.8 a4.2,4.4 0 0 1 8.4,0z" fill="none" stroke="#c8c8c8" stroke-width="1.1"/><path d="M274.6,1210.6000000000001v8 M268.6,1216.8h12 M272.0,1216.8v2.2 M277.20000000000005,1216.8v2.2 M271.40000000000003,1213.2h6.4" stroke="#c8c8c8" stroke-width="1.1" fill="none"/><circle cx="289.4" cy="1214.8" r="2.1" fill="none" stroke="#7a7a7a" stroke-width="0.9"/><path d="M292.70,1214.80L294.60,1214.80M291.73,1217.13L293.08,1218.48M289.40,1218.10L289.40,1220.00M287.07,1217.13L285.72,1218.48M286.10,1214.80L284.20,1214.80M287.07,1212.47L285.72,1211.12M289.40,1211.50L289.40,1209.60M291.73,1212.47L293.08,1211.12" stroke="#7a7a7a" stroke-width="0.9"/><line x1="299.2" y1="1219.3999999999999" x2="309.59999999999997" y2="1209.8" stroke="#bcbcbc" stroke-width="1.5"/><circle cx="347.0" cy="1217.3999999999999" r="3.5" fill="#2b2b2b" stroke="#b4b4b4" stroke-width="0.9"/><circle cx="348.6" cy="1215.8" r="3.6" fill="#2b2b2b" stroke="#b4b4b4" stroke-width="0.9"/><circle cx="350.90000000000003" cy="1213.3999999999999" r="4" fill="#5a5a5a" stroke="#b4b4b4" stroke-width="1"/><path d="M379.4,1210.2 l4.2,2.3 v5 l-4.2,2.4 l-4.2,-2.4 v-5z M375.2,1212.5 l4.2,2.4 l4.2,-2.4 M379.4,1214.9v5" fill="none" stroke="#d0d0d0" stroke-width="1.05" stroke-linejoin="round"/><path d="M410.8,1215.2 a1.5,1.5 0 1 1 1.6,-1.9 a3.1,3.1 0 1 1 -4.6,2.9 a4.9,4.9 0 1 1 6.6,4.2" fill="none" stroke="#6e6e6e" stroke-width="1.7" stroke-linecap="round"/><path d="M495.6,1212.5 L500,1217.5 L504.4,1212.5" fill="none" stroke="#b4b4b4" stroke-width="1.9" stroke-linecap="round" stroke-linejoin="round"/><path d="M6.0,1231.8 Q11.6,1225.3999999999999 17.2,1231.8 Q11.6,1238.2 6.0,1231.8Z" fill="#c4c4c4"/><circle cx="11.6" cy="1231.8" r="2.7" fill="#161616"/><circle cx="11.799999999999999" cy="1232.1" r="1.5" fill="#c4c4c4"/><circle cx="10.7" cy="1230.8999999999999" r="0.9" fill="#161616"/><path d="M74.55,1228.1999999999998 L78.45,1232.1 L74.55,1236.0" fill="none" stroke="#b8b8b8" stroke-width="2.0" stroke-linecap="round" stroke-linejoin="round"/><polygon points="142.90,1225.90 144.43,1230.10 148.89,1230.25 145.37,1233.00 146.60,1237.30 142.90,1234.80 139.20,1237.30 140.43,1233.00 136.91,1230.25 141.37,1230.10" fill="#b8b8b8"/><path d="M270.40000000000003,1231.8 a4.2,4.4 0 0 1 8.4,0z" fill="none" stroke="#c8c8c8" stroke-width="1.1"/><path d="M274.6,1227.6000000000001v8 M268.6,1233.8h12 M272.0,1233.8v2.2 M277.20000000000005,1233.8v2.2 M271.40000000000003,1230.2h6.4" stroke="#c8c8c8" stroke-width="1.1" fill="none"/><circle cx="289.4" cy="1231.8" r="2.1" fill="none" stroke="#7a7a7a" stroke-width="0.9"/><path d="M292.70,1231.80L294.60,1231.80M291.73,1234.13L293.08,1235.48M289.40,1235.10L289.40,1237.00M287.07,1234.13L285.72,1235.48M286.10,1231.80L284.20,1231.80M287.07,1229.47L285.72,1228.12M289.40,1228.50L289.40,1226.60M291.73,1229.47L293.08,1228.12" stroke="#7a7a7a" stroke-width="0.9"/><line x1="299.2" y1="1236.3999999999999" x2="309.59999999999997" y2="1226.8" stroke="#bcbcbc" stroke-width="1.5"/><circle cx="347.0" cy="1234.3999999999999" r="3.5" fill="#2b2b2b" stroke="#b4b4b4" stroke-width="0.9"/><circle cx="348.6" cy="1232.8" r="3.6" fill="#2b2b2b" stroke="#b4b4b4" stroke-width="0.9"/><circle cx="350.90000000000003" cy="1230.3999999999999" r="4" fill="#5a5a5a" stroke="#b4b4b4" stroke-width="1"/><path d="M379.4,1227.2 l4.2,2.3 v5 l-4.2,2.4 l-4.2,-2.4 v-5z M375.2,1229.5 l4.2,2.4 l4.2,-2.4 M379.4,1231.9v5" fill="none" stroke="#d0d0d0" stroke-width="1.05" stroke-linejoin="round"/><path d="M410.8,1232.2 a1.5,1.5 0 1 1 1.6,-1.9 a3.1,3.1 0 1 1 -4.6,2.9 a4.9,4.9 0 1 1 6.6,4.2" fill="none" stroke="#6e6e6e" stroke-width="1.7" stroke-linecap="round"/><path d="M495.6,1229.5 L500,1234.5 L504.4,1229.5" fill="none" stroke="#b4b4b4" stroke-width="1.9" stroke-linecap="round" stroke-linejoin="round"/><path d="M6.0,1248.8 Q11.6,1242.3999999999999 17.2,1248.8 Q11.6,1255.2 6.0,1248.8Z" fill="#c4c4c4"/><circle cx="11.6" cy="1248.8" r="2.7" fill="#161616"/><circle cx="11.799999999999999" cy="1249.1" r="1.5" fill="#c4c4c4"/><circle cx="10.7" cy="1247.8999999999999" r="0.9" fill="#161616"/><path d="M74.55,1245.1999999999998 L78.45,1249.1 L74.55,1253.0" fill="none" stroke="#b8b8b8" stroke-width="2.0" stroke-linecap="round" stroke-linejoin="round"/><polygon points="142.90,1242.90 144.43,1247.10 148.89,1247.25 145.37,1250.00 146.60,1254.30 142.90,1251.80 139.20,1254.30 140.43,1250.00 136.91,1247.25 141.37,1247.10" fill="#b8b8b8"/><path d="M270.40000000000003,1248.8 a4.2,4.4 0 0 1 8.4,0z" fill="none" stroke="#c8c8c8" stroke-width="1.1"/><path d="M274.6,1244.6000000000001v8 M268.6,1250.8h12 M272.0,1250.8v2.2 M277.20000000000005,1250.8v2.2 M271.40000000000003,1247.2h6.4" stroke="#c8c8c8" stroke-width="1.1" fill="none"/><circle cx="289.4" cy="1248.8" r="2.1" fill="none" stroke="#7a7a7a" stroke-width="0.9"/><path d="M292.70,1248.80L294.60,1248.80M291.73,1251.13L293.08,1252.48M289.40,1252.10L289.40,1254.00M287.07,1251.13L285.72,1252.48M286.10,1248.80L284.20,1248.80M287.07,1246.47L285.72,1245.12M289.40,1245.50L289.40,1243.60M291.73,1246.47L293.08,1245.12" stroke="#7a7a7a" stroke-width="0.9"/><line x1="299.2" y1="1253.3999999999999" x2="309.59999999999997" y2="1243.8" stroke="#bcbcbc" stroke-width="1.5"/><circle cx="347.0" cy="1251.3999999999999" r="3.5" fill="#2b2b2b" stroke="#b4b4b4" stroke-width="0.9"/><circle cx="348.6" cy="1249.8" r="3.6" fill="#2b2b2b" stroke="#b4b4b4" stroke-width="0.9"/><circle cx="350.90000000000003" cy="1247.3999999999999" r="4" fill="#5a5a5a" stroke="#b4b4b4" stroke-width="1"/><path d="M379.4,1244.2 l4.2,2.3 v5 l-4.2,2.4 l-4.2,-2.4 v-5z M375.2,1246.5 l4.2,2.4 l4.2,-2.4 M379.4,1248.9v5" fill="none" stroke="#d0d0d0" stroke-width="1.05" stroke-linejoin="round"/><path d="M410.8,1249.2 a1.5,1.5 0 1 1 1.6,-1.9 a3.1,3.1 0 1 1 -4.6,2.9 a4.9,4.9 0 1 1 6.6,4.2" fill="none" stroke="#6e6e6e" stroke-width="1.7" stroke-linecap="round"/><path d="M495.6,1246.5 L500,1251.5 L504.4,1246.5" fill="none" stroke="#b4b4b4" stroke-width="1.9" stroke-linecap="round" stroke-linejoin="round"/><path d="M6.0,1265.8 Q11.6,1259.3999999999999 17.2,1265.8 Q11.6,1272.2 6.0,1265.8Z" fill="#c4c4c4"/><circle cx="11.6" cy="1265.8" r="2.7" fill="#161616"/><circle cx="11.799999999999999" cy="1266.1" r="1.5" fill="#c4c4c4"/><circle cx="10.7" cy="1264.8999999999999" r="0.9" fill="#161616"/><path d="M74.55,1262.1999999999998 L78.45,1266.1 L74.55,1270.0" fill="none" stroke="#b8b8b8" stroke-width="2.0" stroke-linecap="round" stroke-linejoin="round"/><polygon points="142.90,1259.90 144.43,1264.10 148.89,1264.25 145.37,1267.00 146.60,1271.30 142.90,1268.80 139.20,1271.30 140.43,1267.00 136.91,1264.25 141.37,1264.10" fill="#b8b8b8"/><path d="M270.40000000000003,1265.8 a4.2,4.4 0 0 1 8.4,0z" fill="none" stroke="#c8c8c8" stroke-width="1.1"/><path d="M274.6,1261.6000000000001v8 M268.6,1267.8h12 M272.0,1267.8v2.2 M277.20000000000005,1267.8v2.2 M271.40000000000003,1264.2h6.4" stroke="#c8c8c8" stroke-width="1.1" fill="none"/><circle cx="289.4" cy="1265.8" r="2.1" fill="none" stroke="#7a7a7a" stroke-width="0.9"/><path d="M292.70,1265.80L294.60,1265.80M291.73,1268.13L293.08,1269.48M289.40,1269.10L289.40,1271.00M287.07,1268.13L285.72,1269.48M286.10,1265.80L284.20,1265.80M287.07,1263.47L285.72,1262.12M289.40,1262.50L289.40,1260.60M291.73,1263.47L293.08,1262.12" stroke="#7a7a7a" stroke-width="0.9"/><line x1="299.2" y1="1270.3999999999999" x2="309.59999999999997" y2="1260.8" stroke="#bcbcbc" stroke-width="1.5"/><circle cx="347.0" cy="1268.3999999999999" r="3.5" fill="#2b2b2b" stroke="#b4b4b4" stroke-width="0.9"/><circle cx="348.6" cy="1266.8" r="3.6" fill="#2b2b2b" stroke="#b4b4b4" stroke-width="0.9"/><circle cx="350.90000000000003" cy="1264.3999999999999" r="4" fill="#5a5a5a" stroke="#b4b4b4" stroke-width="1"/><path d="M379.4,1261.2 l4.2,2.3 v5 l-4.2,2.4 l-4.2,-2.4 v-5z M375.2,1263.5 l4.2,2.4 l4.2,-2.4 M379.4,1265.9v5" fill="none" stroke="#d0d0d0" stroke-width="1.05" stroke-linejoin="round"/><path d="M410.8,1266.2 a1.5,1.5 0 1 1 1.6,-1.9 a3.1,3.1 0 1 1 -4.6,2.9 a4.9,4.9 0 1 1 6.6,4.2" fill="none" stroke="#6e6e6e" stroke-width="1.7" stroke-linecap="round"/><path d="M495.6,1263.5 L500,1268.5 L504.4,1263.5" fill="none" stroke="#b4b4b4" stroke-width="1.9" stroke-linecap="round" stroke-linejoin="round"/><path d="M6.0,1282.8 Q11.6,1276.3999999999999 17.2,1282.8 Q11.6,1289.2 6.0,1282.8Z" fill="#c4c4c4"/><circle cx="11.6" cy="1282.8" r="2.7" fill="#161616"/><circle cx="11.799999999999999" cy="1283.1" r="1.5" fill="#c4c4c4"/><circle cx="10.7" cy="1281.8999999999999" r="0.9" fill="#161616"/><path d="M74.55,1279.1999999999998 L78.45,1283.1 L74.55,1287.0" fill="none" stroke="#b8b8b8" stroke-width="2.0" stroke-linecap="round" stroke-linejoin="round"/><polygon points="142.90,1276.90 144.43,1281.10 148.89,1281.25 145.37,1284.00 146.60,1288.30 142.90,1285.80 139.20,1288.30 140.43,1284.00 136.91,1281.25 141.37,1281.10" fill="#b8b8b8"/><path d="M270.40000000000003,1282.8 a4.2,4.4 0 0 1 8.4,0z" fill="none" stroke="#c8c8c8" stroke-width="1.1"/><path d="M274.6,1278.6000000000001v8 M268.6,1284.8h12 M272.0,1284.8v2.2 M277.20000000000005,1284.8v2.2 M271.40000000000003,1281.2h6.4" stroke="#c8c8c8" stroke-width="1.1" fill="none"/><circle cx="289.4" cy="1282.8" r="2.1" fill="none" stroke="#7a7a7a" stroke-width="0.9"/><path d="M292.70,1282.80L294.60,1282.80M291.73,1285.13L293.08,1286.48M289.40,1286.10L289.40,1288.00M287.07,1285.13L285.72,1286.48M286.10,1282.80L284.20,1282.80M287.07,1280.47L285.72,1279.12M289.40,1279.50L289.40,1277.60M291.73,1280.47L293.08,1279.12" stroke="#7a7a7a" stroke-width="0.9"/><line x1="299.2" y1="1287.3999999999999" x2="309.59999999999997" y2="1277.8" stroke="#bcbcbc" stroke-width="1.5"/><circle cx="347.0" cy="1285.3999999999999" r="3.5" fill="#2b2b2b" stroke="#b4b4b4" stroke-width="0.9"/><circle cx="348.6" cy="1283.8" r="3.6" fill="#2b2b2b" stroke="#b4b4b4" stroke-width="0.9"/><circle cx="350.90000000000003" cy="1281.3999999999999" r="4" fill="#5a5a5a" stroke="#b4b4b4" stroke-width="1"/><path d="M379.4,1278.2 l4.2,2.3 v5 l-4.2,2.4 l-4.2,-2.4 v-5z M375.2,1280.5 l4.2,2.4 l4.2,-2.4 M379.4,1282.9v5" fill="none" stroke="#d0d0d0" stroke-width="1.05" stroke-linejoin="round"/><path d="M410.8,1283.2 a1.5,1.5 0 1 1 1.6,-1.9 a3.1,3.1 0 1 1 -4.6,2.9 a4.9,4.9 0 1 1 6.6,4.2" fill="none" stroke="#6e6e6e" stroke-width="1.7" stroke-linecap="round"/><path d="M495.6,1280.5 L500,1285.5 L504.4,1280.5" fill="none" stroke="#b4b4b4" stroke-width="1.9" stroke-linecap="round" stroke-linejoin="round"/><path d="M6.0,1299.8 Q11.6,1293.3999999999999 17.2,1299.8 Q11.6,1306.2 6.0,1299.8Z" fill="#c4c4c4"/><circle cx="11.6" cy="1299.8" r="2.7" fill="#161616"/><circle cx="11.799999999999999" cy="1300.1" r="1.5" fill="#c4c4c4"/><circle cx="10.7" cy="1298.8999999999999" r="0.9" fill="#161616"/><path d="M74.55,1296.1999999999998 L78.45,1300.1 L74.55,1304.0" fill="none" stroke="#b8b8b8" stroke-width="2.0" stroke-linecap="round" stroke-linejoin="round"/><polygon points="142.90,1293.90 144.43,1298.10 148.89,1298.25 145.37,1301.00 146.60,1305.30 142.90,1302.80 139.20,1305.30 140.43,1301.00 136.91,1298.25 141.37,1298.10" fill="#b8b8b8"/><path d="M270.40000000000003,1299.8 a4.2,4.4 0 0 1 8.4,0z" fill="none" stroke="#c8c8c8" stroke-width="1.1"/><path d="M274.6,1295.6000000000001v8 M268.6,1301.8h12 M272.0,1301.8v2.2 M277.20000000000005,1301.8v2.2 M271.40000000000003,1298.2h6.4" stroke="#c8c8c8" stroke-width="1.1" fill="none"/><circle cx="289.4" cy="1299.8" r="2.1" fill="none" stroke="#7a7a7a" stroke-width="0.9"/><path d="M292.70,1299.80L294.60,1299.80M291.73,1302.13L293.08,1303.48M289.40,1303.10L289.40,1305.00M287.07,1302.13L285.72,1303.48M286.10,1299.80L284.20,1299.80M287.07,1297.47L285.72,1296.12M289.40,1296.50L289.40,1294.60M291.73,1297.47L293.08,1296.12" stroke="#7a7a7a" stroke-width="0.9"/><line x1="299.2" y1="1304.3999999999999" x2="309.59999999999997" y2="1294.8" stroke="#bcbcbc" stroke-width="1.5"/><circle cx="347.0" cy="1302.3999999999999" r="3.5" fill="#2b2b2b" stroke="#b4b4b4" stroke-width="0.9"/><circle cx="348.6" cy="1300.8" r="3.6" fill="#2b2b2b" stroke="#b4b4b4" stroke-width="0.9"/><circle cx="350.90000000000003" cy="1298.3999999999999" r="4" fill="#5a5a5a" stroke="#b4b4b4" stroke-width="1"/><path d="M379.4,1295.2 l4.2,2.3 v5 l-4.2,2.4 l-4.2,-2.4 v-5z M375.2,1297.5 l4.2,2.4 l4.2,-2.4 M379.4,1299.9v5" fill="none" stroke="#d0d0d0" stroke-width="1.05" stroke-linejoin="round"/><path d="M410.8,1300.2 a1.5,1.5 0 1 1 1.6,-1.9 a3.1,3.1 0 1 1 -4.6,2.9 a4.9,4.9 0 1 1 6.6,4.2" fill="none" stroke="#6e6e6e" stroke-width="1.7" stroke-linecap="round"/><path d="M495.6,1297.5 L500,1302.5 L504.4,1297.5" fill="none" stroke="#b4b4b4" stroke-width="1.9" stroke-linecap="round" stroke-linejoin="round"/><path d="M373.1,1312 V1191 H386.1 V1312" fill="none" stroke="#c8c8c8" stroke-width="1" stroke-dasharray="1 1"/><rect x="6.8" y="1315.4" width="7" height="7" fill="none" stroke="#b0b0b0" stroke-width="1.1"/><rect x="9.6" y="1318.2" width="7" height="7" fill="#1d1d1d" stroke="#b0b0b0" stroke-width="1.1"/><circle cx="29.6" cy="1319.6" r="3.6" fill="none" stroke="#b0b0b0" stroke-width="1.1"/><rect x="30.6" y="1320.4" width="5" height="5" fill="#1d1d1d" stroke="#b0b0b0" stroke-width="1"/><circle cx="68.6" cy="1320.6" r="4" fill="#b0b0b0"/><path d="M71,1318 l4,-1.6 l-1,4" fill="none" stroke="#b0b0b0" stroke-width="1.1"/></svg>
</body></html>
